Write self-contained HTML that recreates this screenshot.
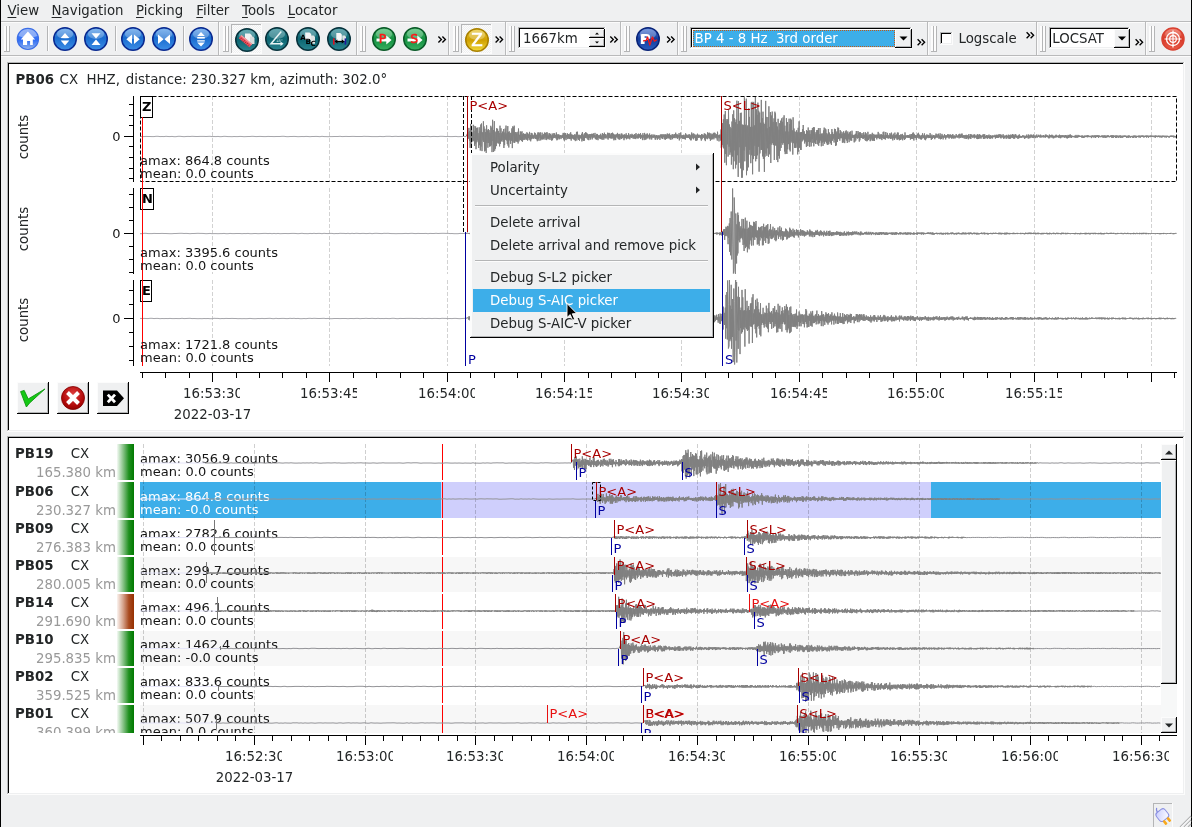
<!DOCTYPE html>
<html><head><meta charset="utf-8"><title>Picker</title>
<style>
html,body{margin:0;padding:0;}
body{width:1192px;height:827px;background:#eff0f1;position:relative;overflow:hidden;
font-family:"DejaVu Sans","Liberation Sans",sans-serif;font-size:13.333px;color:#232627;}
.t{position:absolute;white-space:pre;line-height:16px;height:16px;}
.r{position:absolute;}
svg{position:absolute;left:0;top:0;}
u{text-decoration:underline;text-underline-offset:1.5px;text-decoration-thickness:1px;}
#w{position:absolute;left:0;top:0;width:1192px;height:827px;will-change:transform;}
</style></head><body><div id="w">

<div class="r" style="left:0px;top:0px;width:1px;height:827px;background:#000;"></div>
<div class="r" style="left:1191px;top:0px;width:1px;height:827px;background:#000;"></div>
<div class="t" style="top:3px;left:7.50px;"><u>V</u>iew</div>
<div class="t" style="top:3px;left:51.60px;"><u>N</u>avigation</div>
<div class="t" style="top:3px;left:136.00px;"><u>P</u>icking</div>
<div class="t" style="top:3px;left:196.30px;"><u>F</u>ilter</div>
<div class="t" style="top:3px;left:242.00px;"><u>T</u>ools</div>
<div class="t" style="top:3px;left:287.70px;"><u>L</u>ocator</div>
<div class="r" style="left:1px;top:21px;width:1190px;height:1px;background:#b9babb;"></div>
<div class="r" style="left:1px;top:22px;width:1190px;height:1px;background:#fbfbfb;"></div>
<div class="r" style="left:1px;top:55px;width:1190px;height:1px;background:#b9babb;"></div>
<div class="r" style="left:1px;top:56px;width:1190px;height:1px;background:#fbfbfb;"></div>
<div class="r" style="left:218px;top:22px;width:1px;height:33px;background:#b9babb;"></div>
<div class="r" style="left:219px;top:23px;width:1px;height:32px;background:#fbfbfb;"></div>
<div class="r" style="left:356px;top:22px;width:1px;height:33px;background:#b9babb;"></div>
<div class="r" style="left:357px;top:23px;width:1px;height:32px;background:#fbfbfb;"></div>
<div class="r" style="left:448px;top:22px;width:1px;height:33px;background:#b9babb;"></div>
<div class="r" style="left:449px;top:23px;width:1px;height:32px;background:#fbfbfb;"></div>
<div class="r" style="left:505px;top:22px;width:1px;height:33px;background:#b9babb;"></div>
<div class="r" style="left:506px;top:23px;width:1px;height:32px;background:#fbfbfb;"></div>
<div class="r" style="left:620px;top:22px;width:1px;height:33px;background:#b9babb;"></div>
<div class="r" style="left:621px;top:23px;width:1px;height:32px;background:#fbfbfb;"></div>
<div class="r" style="left:677px;top:22px;width:1px;height:33px;background:#b9babb;"></div>
<div class="r" style="left:678px;top:23px;width:1px;height:32px;background:#fbfbfb;"></div>
<div class="r" style="left:927px;top:22px;width:1px;height:33px;background:#b9babb;"></div>
<div class="r" style="left:928px;top:23px;width:1px;height:32px;background:#fbfbfb;"></div>
<div class="r" style="left:1036px;top:22px;width:1px;height:33px;background:#b9babb;"></div>
<div class="r" style="left:1037px;top:23px;width:1px;height:32px;background:#fbfbfb;"></div>
<div class="r" style="left:1145px;top:22px;width:1px;height:33px;background:#b9babb;"></div>
<div class="r" style="left:1146px;top:23px;width:1px;height:32px;background:#fbfbfb;"></div>
<div class="r" style="left:4px;top:26px;width:2px;height:25px;background:#fcfcfc;"></div>
<div class="r" style="left:6px;top:26px;width:1px;height:26px;background:#b4b5b6;"></div>
<div class="r" style="left:4px;top:51px;width:3px;height:1px;background:#b4b5b6;"></div>
<div class="r" style="left:7px;top:26px;width:2px;height:25px;background:#fcfcfc;"></div>
<div class="r" style="left:9px;top:26px;width:1px;height:26px;background:#b4b5b6;"></div>
<div class="r" style="left:7px;top:51px;width:3px;height:1px;background:#b4b5b6;"></div>
<div class="r" style="left:223px;top:26px;width:2px;height:25px;background:#fcfcfc;"></div>
<div class="r" style="left:225px;top:26px;width:1px;height:26px;background:#b4b5b6;"></div>
<div class="r" style="left:223px;top:51px;width:3px;height:1px;background:#b4b5b6;"></div>
<div class="r" style="left:226px;top:26px;width:2px;height:25px;background:#fcfcfc;"></div>
<div class="r" style="left:228px;top:26px;width:1px;height:26px;background:#b4b5b6;"></div>
<div class="r" style="left:226px;top:51px;width:3px;height:1px;background:#b4b5b6;"></div>
<div class="r" style="left:360px;top:26px;width:2px;height:25px;background:#fcfcfc;"></div>
<div class="r" style="left:362px;top:26px;width:1px;height:26px;background:#b4b5b6;"></div>
<div class="r" style="left:360px;top:51px;width:3px;height:1px;background:#b4b5b6;"></div>
<div class="r" style="left:363px;top:26px;width:2px;height:25px;background:#fcfcfc;"></div>
<div class="r" style="left:365px;top:26px;width:1px;height:26px;background:#b4b5b6;"></div>
<div class="r" style="left:363px;top:51px;width:3px;height:1px;background:#b4b5b6;"></div>
<div class="r" style="left:453px;top:26px;width:2px;height:25px;background:#fcfcfc;"></div>
<div class="r" style="left:455px;top:26px;width:1px;height:26px;background:#b4b5b6;"></div>
<div class="r" style="left:453px;top:51px;width:3px;height:1px;background:#b4b5b6;"></div>
<div class="r" style="left:456px;top:26px;width:2px;height:25px;background:#fcfcfc;"></div>
<div class="r" style="left:458px;top:26px;width:1px;height:26px;background:#b4b5b6;"></div>
<div class="r" style="left:456px;top:51px;width:3px;height:1px;background:#b4b5b6;"></div>
<div class="r" style="left:509px;top:26px;width:2px;height:25px;background:#fcfcfc;"></div>
<div class="r" style="left:511px;top:26px;width:1px;height:26px;background:#b4b5b6;"></div>
<div class="r" style="left:509px;top:51px;width:3px;height:1px;background:#b4b5b6;"></div>
<div class="r" style="left:512px;top:26px;width:2px;height:25px;background:#fcfcfc;"></div>
<div class="r" style="left:514px;top:26px;width:1px;height:26px;background:#b4b5b6;"></div>
<div class="r" style="left:512px;top:51px;width:3px;height:1px;background:#b4b5b6;"></div>
<div class="r" style="left:624px;top:26px;width:2px;height:25px;background:#fcfcfc;"></div>
<div class="r" style="left:626px;top:26px;width:1px;height:26px;background:#b4b5b6;"></div>
<div class="r" style="left:624px;top:51px;width:3px;height:1px;background:#b4b5b6;"></div>
<div class="r" style="left:627px;top:26px;width:2px;height:25px;background:#fcfcfc;"></div>
<div class="r" style="left:629px;top:26px;width:1px;height:26px;background:#b4b5b6;"></div>
<div class="r" style="left:627px;top:51px;width:3px;height:1px;background:#b4b5b6;"></div>
<div class="r" style="left:681px;top:26px;width:2px;height:25px;background:#fcfcfc;"></div>
<div class="r" style="left:683px;top:26px;width:1px;height:26px;background:#b4b5b6;"></div>
<div class="r" style="left:681px;top:51px;width:3px;height:1px;background:#b4b5b6;"></div>
<div class="r" style="left:684px;top:26px;width:2px;height:25px;background:#fcfcfc;"></div>
<div class="r" style="left:686px;top:26px;width:1px;height:26px;background:#b4b5b6;"></div>
<div class="r" style="left:684px;top:51px;width:3px;height:1px;background:#b4b5b6;"></div>
<div class="r" style="left:931px;top:26px;width:2px;height:25px;background:#fcfcfc;"></div>
<div class="r" style="left:933px;top:26px;width:1px;height:26px;background:#b4b5b6;"></div>
<div class="r" style="left:931px;top:51px;width:3px;height:1px;background:#b4b5b6;"></div>
<div class="r" style="left:934px;top:26px;width:2px;height:25px;background:#fcfcfc;"></div>
<div class="r" style="left:936px;top:26px;width:1px;height:26px;background:#b4b5b6;"></div>
<div class="r" style="left:934px;top:51px;width:3px;height:1px;background:#b4b5b6;"></div>
<div class="r" style="left:1040px;top:26px;width:2px;height:25px;background:#fcfcfc;"></div>
<div class="r" style="left:1042px;top:26px;width:1px;height:26px;background:#b4b5b6;"></div>
<div class="r" style="left:1040px;top:51px;width:3px;height:1px;background:#b4b5b6;"></div>
<div class="r" style="left:1043px;top:26px;width:2px;height:25px;background:#fcfcfc;"></div>
<div class="r" style="left:1045px;top:26px;width:1px;height:26px;background:#b4b5b6;"></div>
<div class="r" style="left:1043px;top:51px;width:3px;height:1px;background:#b4b5b6;"></div>
<div class="r" style="left:1149px;top:26px;width:2px;height:25px;background:#fcfcfc;"></div>
<div class="r" style="left:1151px;top:26px;width:1px;height:26px;background:#b4b5b6;"></div>
<div class="r" style="left:1149px;top:51px;width:3px;height:1px;background:#b4b5b6;"></div>
<div class="r" style="left:1152px;top:26px;width:2px;height:25px;background:#fcfcfc;"></div>
<div class="r" style="left:1154px;top:26px;width:1px;height:26px;background:#b4b5b6;"></div>
<div class="r" style="left:1152px;top:51px;width:3px;height:1px;background:#b4b5b6;"></div>
<div class="r" style="left:47px;top:26px;width:1px;height:25px;background:#b4b5b6;"></div>
<div class="r" style="left:48px;top:26px;width:1px;height:25px;background:#fcfcfc;"></div>
<div class="r" style="left:115px;top:26px;width:1px;height:25px;background:#b4b5b6;"></div>
<div class="r" style="left:116px;top:26px;width:1px;height:25px;background:#fcfcfc;"></div>
<div class="r" style="left:183px;top:26px;width:1px;height:25px;background:#b4b5b6;"></div>
<div class="r" style="left:184px;top:26px;width:1px;height:25px;background:#fcfcfc;"></div>
<div class="r" style="left:518px;top:27px;width:88px;height:22px;background:#fff;"></div>
<div class="r" style="left:518px;top:27px;width:88px;height:1px;background:#b4b5b6;"></div>
<div class="r" style="left:518px;top:27px;width:1px;height:22px;background:#b4b5b6;"></div>
<div class="r" style="left:519px;top:28px;width:86px;height:1px;background:#000;"></div>
<div class="r" style="left:519px;top:28px;width:1px;height:20px;background:#000;"></div>
<div class="r" style="left:518px;top:48px;width:88px;height:1px;background:#fcfcfc;"></div>
<div class="r" style="left:605px;top:27px;width:1px;height:22px;background:#fcfcfc;"></div>
<div class="r" style="left:519px;top:47px;width:86px;height:1px;background:#eff0f1;"></div>
<div class="r" style="left:604px;top:28px;width:1px;height:20px;background:#eff0f1;"></div>
<div class="t" style="top:31px;left:523.00px;">1667km</div>
<div class="r" style="left:589px;top:29px;width:16px;height:9px;background:#eff0f1;"></div>
<div class="r" style="left:589px;top:29px;width:16px;height:1px;background:#fcfcfc;"></div>
<div class="r" style="left:589px;top:29px;width:1px;height:9px;background:#fcfcfc;"></div>
<div class="r" style="left:589px;top:37px;width:16px;height:1px;background:#000;"></div>
<div class="r" style="left:604px;top:29px;width:1px;height:9px;background:#000;"></div>
<div class="r" style="left:590px;top:36px;width:14px;height:1px;background:#b4b5b6;"></div>
<div class="r" style="left:603px;top:30px;width:1px;height:7px;background:#b4b5b6;"></div>
<div class="r" style="left:589px;top:38px;width:16px;height:9px;background:#eff0f1;"></div>
<div class="r" style="left:589px;top:38px;width:16px;height:1px;background:#fcfcfc;"></div>
<div class="r" style="left:589px;top:38px;width:1px;height:9px;background:#fcfcfc;"></div>
<div class="r" style="left:589px;top:46px;width:16px;height:1px;background:#000;"></div>
<div class="r" style="left:604px;top:38px;width:1px;height:9px;background:#000;"></div>
<div class="r" style="left:590px;top:45px;width:14px;height:1px;background:#b4b5b6;"></div>
<div class="r" style="left:603px;top:39px;width:1px;height:7px;background:#b4b5b6;"></div>
<div class="r" style="left:690px;top:27px;width:222px;height:22px;background:#fff;"></div>
<div class="r" style="left:690px;top:27px;width:222px;height:1px;background:#b4b5b6;"></div>
<div class="r" style="left:690px;top:27px;width:1px;height:22px;background:#b4b5b6;"></div>
<div class="r" style="left:691px;top:28px;width:220px;height:1px;background:#000;"></div>
<div class="r" style="left:691px;top:28px;width:1px;height:20px;background:#000;"></div>
<div class="r" style="left:690px;top:48px;width:222px;height:1px;background:#fcfcfc;"></div>
<div class="r" style="left:911px;top:27px;width:1px;height:22px;background:#fcfcfc;"></div>
<div class="r" style="left:691px;top:47px;width:220px;height:1px;background:#eff0f1;"></div>
<div class="r" style="left:910px;top:28px;width:1px;height:20px;background:#eff0f1;"></div>
<div class="r" style="left:693px;top:30px;width:202px;height:17px;background:#3daee9;outline:1px dotted #c05a18;outline-offset:-1px;"></div>
<div class="t" style="top:31px;left:694.50px;color:#fff;">BP 4 - 8 Hz  3rd order</div>
<div class="r" style="left:895px;top:29px;width:17px;height:19px;background:#eff0f1;"></div>
<div class="r" style="left:895px;top:29px;width:17px;height:1px;background:#fcfcfc;"></div>
<div class="r" style="left:895px;top:29px;width:1px;height:19px;background:#fcfcfc;"></div>
<div class="r" style="left:895px;top:47px;width:17px;height:1px;background:#000;"></div>
<div class="r" style="left:911px;top:29px;width:1px;height:19px;background:#000;"></div>
<div class="r" style="left:896px;top:46px;width:15px;height:1px;background:#b4b5b6;"></div>
<div class="r" style="left:910px;top:30px;width:1px;height:17px;background:#b4b5b6;"></div>
<div class="r" style="left:940px;top:32px;width:13px;height:13px;background:#fff;"></div>
<div class="r" style="left:940px;top:32px;width:13px;height:1px;background:#b4b5b6;"></div>
<div class="r" style="left:940px;top:32px;width:1px;height:13px;background:#b4b5b6;"></div>
<div class="r" style="left:941px;top:33px;width:11px;height:1px;background:#000;"></div>
<div class="r" style="left:941px;top:33px;width:1px;height:11px;background:#000;"></div>
<div class="r" style="left:940px;top:44px;width:13px;height:1px;background:#fcfcfc;"></div>
<div class="r" style="left:952px;top:32px;width:1px;height:13px;background:#fcfcfc;"></div>
<div class="r" style="left:941px;top:43px;width:11px;height:1px;background:#eff0f1;"></div>
<div class="r" style="left:951px;top:33px;width:1px;height:11px;background:#eff0f1;"></div>
<div class="t" style="top:31px;left:958.50px;">Logscale</div>
<div class="r" style="left:1049px;top:27px;width:81px;height:22px;background:#fff;"></div>
<div class="r" style="left:1049px;top:27px;width:81px;height:1px;background:#b4b5b6;"></div>
<div class="r" style="left:1049px;top:27px;width:1px;height:22px;background:#b4b5b6;"></div>
<div class="r" style="left:1050px;top:28px;width:79px;height:1px;background:#000;"></div>
<div class="r" style="left:1050px;top:28px;width:1px;height:20px;background:#000;"></div>
<div class="r" style="left:1049px;top:48px;width:81px;height:1px;background:#fcfcfc;"></div>
<div class="r" style="left:1129px;top:27px;width:1px;height:22px;background:#fcfcfc;"></div>
<div class="r" style="left:1050px;top:47px;width:79px;height:1px;background:#eff0f1;"></div>
<div class="r" style="left:1128px;top:28px;width:1px;height:20px;background:#eff0f1;"></div>
<div class="t" style="top:31px;left:1052.30px;">LOCSAT</div>
<div class="r" style="left:1114px;top:29px;width:16px;height:19px;background:#eff0f1;"></div>
<div class="r" style="left:1114px;top:29px;width:16px;height:1px;background:#fcfcfc;"></div>
<div class="r" style="left:1114px;top:29px;width:1px;height:19px;background:#fcfcfc;"></div>
<div class="r" style="left:1114px;top:47px;width:16px;height:1px;background:#000;"></div>
<div class="r" style="left:1129px;top:29px;width:1px;height:19px;background:#000;"></div>
<div class="r" style="left:1115px;top:46px;width:14px;height:1px;background:#b4b5b6;"></div>
<div class="r" style="left:1128px;top:30px;width:1px;height:17px;background:#b4b5b6;"></div>
<div class="r" style="left:7px;top:62px;width:1178px;height:370px;background:#fff;"></div>
<div class="r" style="left:7px;top:62px;width:1178px;height:1px;background:#b4b5b6;"></div>
<div class="r" style="left:7px;top:62px;width:1px;height:370px;background:#b4b5b6;"></div>
<div class="r" style="left:8px;top:63px;width:1176px;height:1px;background:#000;"></div>
<div class="r" style="left:8px;top:63px;width:1px;height:368px;background:#000;"></div>
<div class="r" style="left:7px;top:431px;width:1178px;height:1px;background:#fcfcfc;"></div>
<div class="r" style="left:1184px;top:62px;width:1px;height:370px;background:#fcfcfc;"></div>
<div class="r" style="left:8px;top:430px;width:1176px;height:1px;background:#eff0f1;"></div>
<div class="r" style="left:1183px;top:63px;width:1px;height:368px;background:#eff0f1;"></div>
<div class="r" style="left:7px;top:436px;width:1178px;height:359px;background:#fff;"></div>
<div class="r" style="left:7px;top:436px;width:1178px;height:1px;background:#b4b5b6;"></div>
<div class="r" style="left:7px;top:436px;width:1px;height:359px;background:#b4b5b6;"></div>
<div class="r" style="left:8px;top:437px;width:1176px;height:1px;background:#000;"></div>
<div class="r" style="left:8px;top:437px;width:1px;height:357px;background:#000;"></div>
<div class="r" style="left:7px;top:794px;width:1178px;height:1px;background:#fcfcfc;"></div>
<div class="r" style="left:1184px;top:436px;width:1px;height:359px;background:#fcfcfc;"></div>
<div class="r" style="left:8px;top:793px;width:1176px;height:1px;background:#eff0f1;"></div>
<div class="r" style="left:1183px;top:437px;width:1px;height:357px;background:#eff0f1;"></div>
<div class="t" style="top:72px;left:15.50px;"><b>PB06</b><span style="margin-left:5.6px">CX</span>  HHZ,<span style="margin-left:5.9px">distance:</span> 230.327 km, azimuth: 302.0°</div>
<div class="t" style="top:129px;right:1071.50px;color:#151515;font-size:13px;">0</div>
<div class="t" style="top:226px;right:1071.50px;color:#151515;font-size:13px;">0</div>
<div class="t" style="top:311px;right:1071.50px;color:#151515;font-size:13px;">0</div>
<div class="t" style="left:-6.5px;top:129px;width:60px;text-align:center;transform:rotate(-90deg);">counts</div>
<div class="t" style="left:-6.5px;top:221px;width:60px;text-align:center;transform:rotate(-90deg);">counts</div>
<div class="t" style="left:-6.5px;top:312px;width:60px;text-align:center;transform:rotate(-90deg);">counts</div>
<div class="t" style="top:386px;left:183.10px;width:57.00px;overflow:hidden;">16:53:30</div>
<div class="t" style="top:386px;left:300.10px;width:57.00px;overflow:hidden;">16:53:45</div>
<div class="t" style="top:386px;left:418.10px;width:57.00px;overflow:hidden;">16:54:00</div>
<div class="t" style="top:386px;left:535.10px;width:57.00px;overflow:hidden;">16:54:15</div>
<div class="t" style="top:386px;left:652.10px;width:57.00px;overflow:hidden;">16:54:30</div>
<div class="t" style="top:386px;left:770.10px;width:57.00px;overflow:hidden;">16:54:45</div>
<div class="t" style="top:386px;left:887.10px;width:57.00px;overflow:hidden;">16:55:00</div>
<div class="t" style="top:386px;left:1005.10px;width:57.00px;overflow:hidden;">16:55:15</div>
<div class="t" style="top:407px;left:173.75px;">2022-03-17</div>
<div class="r" style="left:17px;top:382px;width:32px;height:32px;background:#eff0f1;"></div>
<div class="r" style="left:17px;top:382px;width:32px;height:1px;background:#fcfcfc;"></div>
<div class="r" style="left:17px;top:382px;width:1px;height:32px;background:#fcfcfc;"></div>
<div class="r" style="left:17px;top:413px;width:32px;height:1px;background:#000;"></div>
<div class="r" style="left:48px;top:382px;width:1px;height:32px;background:#000;"></div>
<div class="r" style="left:18px;top:412px;width:30px;height:1px;background:#b4b5b6;"></div>
<div class="r" style="left:47px;top:383px;width:1px;height:30px;background:#b4b5b6;"></div>
<div class="r" style="left:57px;top:382px;width:32px;height:32px;background:#eff0f1;"></div>
<div class="r" style="left:57px;top:382px;width:32px;height:1px;background:#fcfcfc;"></div>
<div class="r" style="left:57px;top:382px;width:1px;height:32px;background:#fcfcfc;"></div>
<div class="r" style="left:57px;top:413px;width:32px;height:1px;background:#000;"></div>
<div class="r" style="left:88px;top:382px;width:1px;height:32px;background:#000;"></div>
<div class="r" style="left:58px;top:412px;width:30px;height:1px;background:#b4b5b6;"></div>
<div class="r" style="left:87px;top:383px;width:1px;height:30px;background:#b4b5b6;"></div>
<div class="r" style="left:97px;top:382px;width:32px;height:32px;background:#eff0f1;"></div>
<div class="r" style="left:97px;top:382px;width:32px;height:1px;background:#fcfcfc;"></div>
<div class="r" style="left:97px;top:382px;width:1px;height:32px;background:#fcfcfc;"></div>
<div class="r" style="left:97px;top:413px;width:32px;height:1px;background:#000;"></div>
<div class="r" style="left:128px;top:382px;width:1px;height:32px;background:#000;"></div>
<div class="r" style="left:98px;top:412px;width:30px;height:1px;background:#b4b5b6;"></div>
<div class="r" style="left:127px;top:383px;width:1px;height:30px;background:#b4b5b6;"></div>
<div class="r" style="left:9px;top:444px;width:1152px;height:289px;overflow:hidden;">
<div class="r" style="left:108px;top:0px;width:17px;height:36px;background:linear-gradient(to right,#f4faf4 0%,#8cc48c 35%,#1f8f1f 70%,#007a00 100%);"></div>
<div class="t" style="top:2px;left:6.00px;font-weight:bold;">PB19</div>
<div class="t" style="top:2px;left:61.70px;">CX</div>
<div class="t" style="top:21px;right:1045.00px;color:#999999;">165.380 km</div>
<div class="t" style="top:7px;left:131.10px;color:#151515;font-size:13px;">amax: 3056.9 counts</div>
<div class="t" style="top:20px;left:131.10px;color:#151515;font-size:13px;">mean: 0.0 counts</div>
<div class="r" style="left:131px;top:38px;width:1021px;height:36px;background:#3daee9;"></div>
<div class="r" style="left:432px;top:38px;width:490px;height:36px;background:#cfcffc;"></div>
<div class="r" style="left:108px;top:38px;width:17px;height:36px;background:linear-gradient(to right,#f4faf4 0%,#8cc48c 35%,#1f8f1f 70%,#007a00 100%);"></div>
<div class="t" style="top:40px;left:6.00px;font-weight:bold;">PB06</div>
<div class="t" style="top:40px;left:61.70px;">CX</div>
<div class="t" style="top:59px;right:1045.00px;color:#999999;">230.327 km</div>
<div class="t" style="top:45px;left:131.10px;color:#fff;font-size:13px;">amax: 864.8 counts</div>
<div class="t" style="top:58px;left:131.10px;color:#fff;font-size:13px;">mean: -0.0 counts</div>
<div class="r" style="left:108px;top:76px;width:17px;height:35px;background:linear-gradient(to right,#f4faf4 0%,#8cc48c 35%,#1f8f1f 70%,#007a00 100%);"></div>
<div class="t" style="top:77px;left:6.00px;font-weight:bold;">PB09</div>
<div class="t" style="top:77px;left:61.70px;">CX</div>
<div class="t" style="top:96px;right:1045.00px;color:#999999;">276.383 km</div>
<div class="t" style="top:82px;left:131.10px;color:#151515;font-size:13px;">amax: 2782.6 counts</div>
<div class="t" style="top:95px;left:131.10px;color:#151515;font-size:13px;">mean: 0.0 counts</div>
<div class="r" style="left:131px;top:113px;width:1021px;height:35px;background:#f7f7f7;"></div>
<div class="r" style="left:108px;top:113px;width:17px;height:35px;background:linear-gradient(to right,#f4faf4 0%,#8cc48c 35%,#1f8f1f 70%,#007a00 100%);"></div>
<div class="t" style="top:114px;left:6.00px;font-weight:bold;">PB05</div>
<div class="t" style="top:114px;left:61.70px;">CX</div>
<div class="t" style="top:133px;right:1045.00px;color:#999999;">280.005 km</div>
<div class="t" style="top:119px;left:131.10px;color:#151515;font-size:13px;">amax: 299.7 counts</div>
<div class="t" style="top:132px;left:131.10px;color:#151515;font-size:13px;">mean: 0.0 counts</div>
<div class="r" style="left:108px;top:150px;width:17px;height:35px;background:linear-gradient(to right,#fbf3ef 0%,#d6a58f 35%,#a84a20 70%,#963000 100%);"></div>
<div class="t" style="top:151px;left:6.00px;font-weight:bold;">PB14</div>
<div class="t" style="top:151px;left:61.70px;">CX</div>
<div class="t" style="top:170px;right:1045.00px;color:#999999;">291.690 km</div>
<div class="t" style="top:156px;left:131.10px;color:#151515;font-size:13px;">amax: 496.1 counts</div>
<div class="t" style="top:169px;left:131.10px;color:#151515;font-size:13px;">mean: 0.0 counts</div>
<div class="r" style="left:131px;top:187px;width:1021px;height:35px;background:#f7f7f7;"></div>
<div class="r" style="left:108px;top:187px;width:17px;height:35px;background:linear-gradient(to right,#f4faf4 0%,#8cc48c 35%,#1f8f1f 70%,#007a00 100%);"></div>
<div class="t" style="top:188px;left:6.00px;font-weight:bold;">PB10</div>
<div class="t" style="top:188px;left:61.70px;">CX</div>
<div class="t" style="top:207px;right:1045.00px;color:#999999;">295.835 km</div>
<div class="t" style="top:193px;left:131.10px;color:#151515;font-size:13px;">amax: 1462.4 counts</div>
<div class="t" style="top:206px;left:131.10px;color:#151515;font-size:13px;">mean: -0.0 counts</div>
<div class="r" style="left:108px;top:224px;width:17px;height:35px;background:linear-gradient(to right,#f4faf4 0%,#8cc48c 35%,#1f8f1f 70%,#007a00 100%);"></div>
<div class="t" style="top:225px;left:6.00px;font-weight:bold;">PB02</div>
<div class="t" style="top:225px;left:61.70px;">CX</div>
<div class="t" style="top:244px;right:1045.00px;color:#999999;">359.525 km</div>
<div class="t" style="top:230px;left:131.10px;color:#151515;font-size:13px;">amax: 833.6 counts</div>
<div class="t" style="top:243px;left:131.10px;color:#151515;font-size:13px;">mean: 0.0 counts</div>
<div class="r" style="left:131px;top:261px;width:1021px;height:35px;background:#f7f7f7;"></div>
<div class="r" style="left:108px;top:261px;width:17px;height:35px;background:linear-gradient(to right,#f4faf4 0%,#8cc48c 35%,#1f8f1f 70%,#007a00 100%);"></div>
<div class="t" style="top:262px;left:6.00px;font-weight:bold;">PB01</div>
<div class="t" style="top:262px;left:61.70px;">CX</div>
<div class="t" style="top:281px;right:1045.00px;color:#999999;">360.399 km</div>
<div class="t" style="top:267px;left:131.10px;color:#151515;font-size:13px;">amax: 507.9 counts</div>
<div class="t" style="top:280px;left:131.10px;color:#151515;font-size:13px;">mean: 0.0 counts</div>
</div>
<div class="r" style="left:1161px;top:444px;width:16px;height:289px;background:#f7f8f8;"></div>
<div class="r" style="left:1161px;top:444px;width:16px;height:16px;background:#eff0f1;"></div>
<div class="r" style="left:1161px;top:444px;width:16px;height:1px;background:#fcfcfc;"></div>
<div class="r" style="left:1161px;top:444px;width:1px;height:16px;background:#fcfcfc;"></div>
<div class="r" style="left:1161px;top:459px;width:16px;height:1px;background:#000;"></div>
<div class="r" style="left:1176px;top:444px;width:1px;height:16px;background:#000;"></div>
<div class="r" style="left:1162px;top:458px;width:14px;height:1px;background:#b4b5b6;"></div>
<div class="r" style="left:1175px;top:445px;width:1px;height:14px;background:#b4b5b6;"></div>
<div class="r" style="left:1161px;top:460px;width:16px;height:224px;background:#eff0f1;"></div>
<div class="r" style="left:1161px;top:460px;width:16px;height:1px;background:#fcfcfc;"></div>
<div class="r" style="left:1161px;top:460px;width:1px;height:224px;background:#fcfcfc;"></div>
<div class="r" style="left:1161px;top:683px;width:16px;height:1px;background:#000;"></div>
<div class="r" style="left:1176px;top:460px;width:1px;height:224px;background:#000;"></div>
<div class="r" style="left:1162px;top:682px;width:14px;height:1px;background:#b4b5b6;"></div>
<div class="r" style="left:1175px;top:461px;width:1px;height:222px;background:#b4b5b6;"></div>
<div class="r" style="left:1161px;top:717px;width:16px;height:16px;background:#eff0f1;"></div>
<div class="r" style="left:1161px;top:717px;width:16px;height:1px;background:#fcfcfc;"></div>
<div class="r" style="left:1161px;top:717px;width:1px;height:16px;background:#fcfcfc;"></div>
<div class="r" style="left:1161px;top:732px;width:16px;height:1px;background:#000;"></div>
<div class="r" style="left:1176px;top:717px;width:1px;height:16px;background:#000;"></div>
<div class="r" style="left:1162px;top:731px;width:14px;height:1px;background:#b4b5b6;"></div>
<div class="r" style="left:1175px;top:718px;width:1px;height:14px;background:#b4b5b6;"></div>
<div class="r" style="left:1153px;top:803px;width:20px;height:24px;background:#eff0f1;"></div>
<div class="r" style="left:1153px;top:803px;width:20px;height:1px;background:#b4b5b6;"></div>
<div class="r" style="left:1153px;top:803px;width:1px;height:24px;background:#b4b5b6;"></div>
<div class="r" style="left:1172px;top:803px;width:1px;height:24px;background:#fcfcfc;"></div>
<svg width="1192" height="827" viewBox="0 0 1192 827">
<defs>
<linearGradient id="gHome" x1="0" y1="0" x2="0" y2="1"><stop offset="0" stop-color="#5a8af0"/><stop offset="0.55" stop-color="#2f6df5"/><stop offset="0.75" stop-color="#5a8cf0"/><stop offset="1" stop-color="#9ab8ee"/></linearGradient>
<linearGradient id="gBlue" x1="0" y1="0" x2="0" y2="1"><stop offset="0" stop-color="#5aa0ea"/><stop offset="0.45" stop-color="#1a6ccf"/><stop offset="1" stop-color="#3d8ee6"/></linearGradient>
<linearGradient id="gTeal" x1="0" y1="0" x2="0" y2="1"><stop offset="0" stop-color="#2f8d98"/><stop offset="0.5" stop-color="#0b6470"/><stop offset="1" stop-color="#2a8590"/></linearGradient>
<linearGradient id="gGreen" x1="0" y1="0" x2="0" y2="1"><stop offset="0" stop-color="#4cc070"/><stop offset="0.5" stop-color="#129040"/><stop offset="1" stop-color="#38b060"/></linearGradient>
<linearGradient id="gYel" x1="0" y1="0" x2="0" y2="1"><stop offset="0" stop-color="#e8c838"/><stop offset="0.5" stop-color="#d0a000"/><stop offset="1" stop-color="#f0d838"/></linearGradient>
<linearGradient id="gNavy" x1="0" y1="0" x2="0" y2="1"><stop offset="0" stop-color="#4a78d8"/><stop offset="0.5" stop-color="#123c9c"/><stop offset="1" stop-color="#2a5cc0"/></linearGradient>
<linearGradient id="gRed" x1="0" y1="0" x2="0" y2="1"><stop offset="0" stop-color="#f0705c"/><stop offset="0.5" stop-color="#d83a28"/><stop offset="1" stop-color="#e85a48"/></linearGradient>
<pattern id="dith" width="2" height="2" patternUnits="userSpaceOnUse"><rect width="2" height="2" fill="#eff0f1"/><rect width="1" height="1" fill="#fcfcfc"/><rect x="1" y="1" width="1" height="1" fill="#fcfcfc"/></pattern>
</defs>
<circle cx="27.9" cy="38.9" r="10.6" fill="url(#gHome)" stroke="#3b6ee6" stroke-width="1.2"/>
<path d="M18.5 36 A9.8 9.8 0 0 1 37.3 36 Q28 40 18.5 36 Z" fill="#fff" fill-opacity="0.38"/>
<path d="M27.9 31.6 L20.8 39.4 H23 V44.9 H27.1 V40.9 H30.1 V44.9 H32.8 V39.4 H35.1 Z" fill="#fff"/>
<circle cx="65" cy="39" r="11.25" fill="url(#gBlue)" stroke="#0a2a90" stroke-width="1.5"/>
<ellipse cx="65" cy="33.9375" rx="8.1" ry="5.0625" fill="#fff" fill-opacity="0.28"/>
<path d="M65 33 L69.3 38 H60.7 Z M65 45.5 L69.3 40.5 H60.7 Z" fill="#fff"/>
<circle cx="96" cy="39" r="11.25" fill="url(#gBlue)" stroke="#0a2a90" stroke-width="1.5"/>
<ellipse cx="96" cy="33.9375" rx="8.1" ry="5.0625" fill="#fff" fill-opacity="0.28"/>
<path d="M91.5 33.2 H100.5 L96 38.6 Z M96 39.6 L100.5 45 H91.5 Z" fill="#fff"/>
<circle cx="133" cy="39" r="11.25" fill="url(#gBlue)" stroke="#0a2a90" stroke-width="1.5"/>
<ellipse cx="133" cy="33.9375" rx="8.1" ry="5.0625" fill="#fff" fill-opacity="0.28"/>
<path d="M126.3 39.3 L132 34.5 V44 Z M139.7 39.3 L134 34.5 V44 Z" fill="#fff"/>
<circle cx="164" cy="39" r="11.25" fill="url(#gBlue)" stroke="#0a2a90" stroke-width="1.5"/>
<ellipse cx="164" cy="33.9375" rx="8.1" ry="5.0625" fill="#fff" fill-opacity="0.28"/>
<path d="M158 34.5 L163.6 39.3 L158 44 Z M170 34.5 L164.4 39.3 L170 44 Z" fill="#fff"/>
<circle cx="201" cy="39" r="11.25" fill="url(#gBlue)" stroke="#0a2a90" stroke-width="1.5"/>
<ellipse cx="201" cy="33.9375" rx="8.1" ry="5.0625" fill="#fff" fill-opacity="0.28"/>
<path d="M201 32 L204.8 36 H197.2 Z M201 46.5 L204.8 42.5 H197.2 Z M197.2 37 H204.8 V38.4 H197.2 Z M197.2 40.2 H204.8 V41.6 H197.2 Z" fill="#fff"/>
<rect x="231" y="24" width="31" height="30" fill="url(#dith)"/>
<rect x="231" y="24" width="31" height="1" fill="#b4b5b6"/><rect x="231" y="24" width="1" height="30" fill="#b4b5b6"/><rect x="261" y="24" width="1" height="30" fill="#fcfcfc"/><rect x="231" y="53" width="31" height="1" fill="#fcfcfc"/>
<circle cx="247" cy="40" r="11.25" fill="url(#gTeal)" stroke="#08323c" stroke-width="1.5"/>
<ellipse cx="247" cy="34.9375" rx="8.1" ry="5.0625" fill="#fff" fill-opacity="0.28"/>
<path d="M245 33.5 H250 L252 35.5 V43 H245 Z" fill="#f2f2f2"/><path d="M250 36.5 H253 L254.5 38 V44 H250 Z" fill="#d8dcdc"/>
<g transform="rotate(40 245.5 41)"><rect x="238.5" y="39" width="14" height="4.2" fill="#e8505c"/><rect x="238.5" y="39" width="14" height="1.2" fill="#f4a0a4"/><path d="M240.5 41 V43 M242.5 41.6 V43 M244.5 41 V43 M246.5 41.6 V43 M248.5 41 V43 M250.5 41.6 V43" stroke="#801018" stroke-width="0.6"/></g>
<circle cx="277" cy="39" r="11.25" fill="url(#gTeal)" stroke="#08323c" stroke-width="1.5"/>
<ellipse cx="277" cy="33.9375" rx="8.1" ry="5.0625" fill="#fff" fill-opacity="0.28"/>
<path d="M281.3 31.5 L271 43.8 H281" fill="none" stroke="#e8f4f4" stroke-width="1.5" stroke-linejoin="miter"/><path d="M280.5 41.6 L283.6 43.8 L280.5 46 Z" fill="#e8f4f4"/>
<text x="276.5" y="42" font-size="3.5" font-family="DejaVu Sans, Liberation Sans, sans-serif" fill="#d0e8e8">45°</text>
<circle cx="308" cy="39" r="11.25" fill="url(#gTeal)" stroke="#08323c" stroke-width="1.5"/>
<ellipse cx="308" cy="33.9375" rx="8.1" ry="5.0625" fill="#fff" fill-opacity="0.28"/>
<path d="M305.2 32.4 H309.5 L311.2 34 V40 H305.2 Z" fill="#f4f4f4"/><path d="M310.7 35.6 H313.6 L315 37 V43.8 H310.7 Z" fill="#dfe3e3"/>
<text x="300.3" y="39.8" font-size="7.2" font-weight="bold" font-family="DejaVu Sans, Liberation Sans, sans-serif" fill="#000">A</text><text x="305.6" y="43.6" font-size="7.2" font-weight="bold" font-family="DejaVu Sans, Liberation Sans, sans-serif" fill="#000">B</text><text x="310.6" y="46.4" font-size="7.2" font-weight="bold" font-family="DejaVu Sans, Liberation Sans, sans-serif" fill="#000">C</text>
<circle cx="339" cy="39" r="11.25" fill="url(#gTeal)" stroke="#08323c" stroke-width="1.5"/>
<ellipse cx="339" cy="33.9375" rx="8.1" ry="5.0625" fill="#fff" fill-opacity="0.28"/>
<path d="M336.3 32.9 H340.3 L341.8 34.4 V41 H336.3 Z" fill="#f6f6f6"/><path d="M342.3 35.6 H344.8 L346 36.8 V41 H342.3 Z" fill="#dfe3e3"/>
<rect x="333" y="38.4" width="1.6" height="6.2" fill="#e01020"/><rect x="344.6" y="38.4" width="1.6" height="6.2" fill="#2018a0"/><path d="M336 41.5 H343.5" stroke="#000" stroke-width="1.3"/><path d="M334.6 41.5 L337.4 39.6 V43.4 Z M344.6 41.5 L341.8 39.6 V43.4 Z" fill="#000"/>
<circle cx="384" cy="39" r="11.25" fill="url(#gGreen)" stroke="#0a5a28" stroke-width="1.5"/>
<ellipse cx="384" cy="33.9375" rx="8.1" ry="5.0625" fill="#fff" fill-opacity="0.28"/>
<path d="M376.5 38.4 H386.3 V35.6 L391.6 40 L386.3 44.4 V41.6 H376.5 Z" fill="#fff"/>
<text x="378.8" y="42.9" font-size="12.3" font-weight="normal" font-family="DejaVu Sans, Liberation Sans, sans-serif" fill="#ff1818" stroke="#ff1818" stroke-width="0.55">P</text>
<circle cx="415" cy="39" r="11.25" fill="url(#gGreen)" stroke="#0a5a28" stroke-width="1.5"/>
<ellipse cx="415" cy="33.9375" rx="8.1" ry="5.0625" fill="#fff" fill-opacity="0.28"/>
<path d="M407.5 38.4 H417.3 V35.6 L422.6 40 L417.3 44.4 V41.6 H407.5 Z" fill="#fff"/>
<text x="410.3" y="42.9" font-size="12.3" font-weight="normal" font-family="DejaVu Sans, Liberation Sans, sans-serif" fill="#ff1818" stroke="#ff1818" stroke-width="0.55">S</text>
<rect x="461" y="24" width="31" height="30" fill="url(#dith)"/>
<rect x="461" y="24" width="31" height="1" fill="#b4b5b6"/><rect x="461" y="24" width="1" height="30" fill="#b4b5b6"/><rect x="491" y="24" width="1" height="30" fill="#fcfcfc"/><rect x="461" y="53" width="31" height="1" fill="#fcfcfc"/>
<circle cx="477" cy="40" r="11.25" fill="url(#gYel)" stroke="#a88000" stroke-width="1.5"/>
<ellipse cx="477" cy="34.9375" rx="8.1" ry="5.0625" fill="#fff" fill-opacity="0.28"/>
<text x="477" y="46.4" text-anchor="middle" font-size="16.8" font-weight="normal" font-family="DejaVu Sans, Liberation Sans, sans-serif" fill="#fff" stroke="#fff" stroke-width="0.6">Z</text>
<circle cx="648" cy="39" r="11.25" fill="url(#gNavy)" stroke="#0a2478" stroke-width="1.5"/>
<ellipse cx="648" cy="33.9375" rx="8.1" ry="5.0625" fill="#fff" fill-opacity="0.28"/>
<text x="640.8" y="44" font-size="13.5" font-weight="bold" font-family="DejaVu Sans, Liberation Sans, sans-serif" fill="#fff">P</text>
<path d="M642 41.2 L646.2 40.4 L647.6 37 L649.8 45 L652.4 37 L654.4 41.2 L656.8 39.8" fill="none" stroke="#f01818" stroke-width="1.3" stroke-linejoin="round"/><path d="M640.8 34.2 V44 H643 V34.2 Z" fill="#fff"/>
<circle cx="1173" cy="39" r="11" fill="url(#gRed)" stroke="#d84030" stroke-width="1.5"/>
<ellipse cx="1173" cy="34.05" rx="7.92" ry="4.95" fill="#fff" fill-opacity="0.18"/>
<circle cx="1173" cy="39" r="6.5" fill="none" stroke="#fff" stroke-width="1.3"/><circle cx="1173" cy="39" r="3.3" fill="none" stroke="#fff" stroke-width="1.2"/><path d="M1173 30.5 V47.5 M1164.5 39 H1181.5" stroke="#fff" stroke-width="1.2"/>
<path d="M438.40000000000003 36.4 L441.40000000000003 39.4 L438.40000000000003 42.4" fill="none" stroke="#000" stroke-width="1.35"/>
<path d="M442.40000000000003 36.4 L445.40000000000003 39.4 L442.40000000000003 42.4" fill="none" stroke="#000" stroke-width="1.35"/>
<path d="M495.6 36.4 L498.6 39.4 L495.6 42.4" fill="none" stroke="#000" stroke-width="1.35"/>
<path d="M499.6 36.4 L502.6 39.4 L499.6 42.4" fill="none" stroke="#000" stroke-width="1.35"/>
<path d="M610.3000000000001 36.4 L613.3000000000001 39.4 L610.3000000000001 42.4" fill="none" stroke="#000" stroke-width="1.35"/>
<path d="M614.3000000000001 36.4 L617.3000000000001 39.4 L614.3000000000001 42.4" fill="none" stroke="#000" stroke-width="1.35"/>
<path d="M667.1 36.4 L670.1 39.4 L667.1 42.4" fill="none" stroke="#000" stroke-width="1.35"/>
<path d="M671.1 36.4 L674.1 39.4 L671.1 42.4" fill="none" stroke="#000" stroke-width="1.35"/>
<path d="M917.6 39.3 L920.6 42.3 L917.6 45.3" fill="none" stroke="#000" stroke-width="1.35"/>
<path d="M921.6 39.3 L924.6 42.3 L921.6 45.3" fill="none" stroke="#000" stroke-width="1.35"/>
<path d="M1026.6 32.3 L1029.6 35.3 L1026.6 38.3" fill="none" stroke="#000" stroke-width="1.35"/>
<path d="M1030.6 32.3 L1033.6 35.3 L1030.6 38.3" fill="none" stroke="#000" stroke-width="1.35"/>
<path d="M1135.6 39.3 L1138.6 42.3 L1135.6 45.3" fill="none" stroke="#000" stroke-width="1.35"/>
<path d="M1139.6 39.3 L1142.6 42.3 L1139.6 45.3" fill="none" stroke="#000" stroke-width="1.35"/>
<path d="M595 34.5 L597 32.5 L599 34.5 Z M595 41.5 L597 43.5 L599 41.5 Z" fill="#000"/>
<path d="M899.5 36.5 H907.5 L903.5 40.5 Z" fill="#000"/>
<path d="M1118 36.5 H1126 L1122 40.5 Z" fill="#000"/>
<path d="M212.5 96 V182" stroke="#d2d2d2" stroke-width="1" stroke-dasharray="4 2" fill="none"/>
<path d="M212.5 188 V274" stroke="#d2d2d2" stroke-width="1" stroke-dasharray="4 2" fill="none"/>
<path d="M212.5 280 V366" stroke="#d2d2d2" stroke-width="1" stroke-dasharray="4 2" fill="none"/>
<path d="M329.5 96 V182" stroke="#d2d2d2" stroke-width="1" stroke-dasharray="4 2" fill="none"/>
<path d="M329.5 188 V274" stroke="#d2d2d2" stroke-width="1" stroke-dasharray="4 2" fill="none"/>
<path d="M329.5 280 V366" stroke="#d2d2d2" stroke-width="1" stroke-dasharray="4 2" fill="none"/>
<path d="M447.5 96 V182" stroke="#d2d2d2" stroke-width="1" stroke-dasharray="4 2" fill="none"/>
<path d="M447.5 188 V274" stroke="#d2d2d2" stroke-width="1" stroke-dasharray="4 2" fill="none"/>
<path d="M447.5 280 V366" stroke="#d2d2d2" stroke-width="1" stroke-dasharray="4 2" fill="none"/>
<path d="M564.5 96 V182" stroke="#d2d2d2" stroke-width="1" stroke-dasharray="4 2" fill="none"/>
<path d="M564.5 188 V274" stroke="#d2d2d2" stroke-width="1" stroke-dasharray="4 2" fill="none"/>
<path d="M564.5 280 V366" stroke="#d2d2d2" stroke-width="1" stroke-dasharray="4 2" fill="none"/>
<path d="M681.5 96 V182" stroke="#d2d2d2" stroke-width="1" stroke-dasharray="4 2" fill="none"/>
<path d="M681.5 188 V274" stroke="#d2d2d2" stroke-width="1" stroke-dasharray="4 2" fill="none"/>
<path d="M681.5 280 V366" stroke="#d2d2d2" stroke-width="1" stroke-dasharray="4 2" fill="none"/>
<path d="M799.5 96 V182" stroke="#d2d2d2" stroke-width="1" stroke-dasharray="4 2" fill="none"/>
<path d="M799.5 188 V274" stroke="#d2d2d2" stroke-width="1" stroke-dasharray="4 2" fill="none"/>
<path d="M799.5 280 V366" stroke="#d2d2d2" stroke-width="1" stroke-dasharray="4 2" fill="none"/>
<path d="M916.5 96 V182" stroke="#d2d2d2" stroke-width="1" stroke-dasharray="4 2" fill="none"/>
<path d="M916.5 188 V274" stroke="#d2d2d2" stroke-width="1" stroke-dasharray="4 2" fill="none"/>
<path d="M916.5 280 V366" stroke="#d2d2d2" stroke-width="1" stroke-dasharray="4 2" fill="none"/>
<path d="M1034.5 96 V182" stroke="#d2d2d2" stroke-width="1" stroke-dasharray="4 2" fill="none"/>
<path d="M1034.5 188 V274" stroke="#d2d2d2" stroke-width="1" stroke-dasharray="4 2" fill="none"/>
<path d="M1034.5 280 V366" stroke="#d2d2d2" stroke-width="1" stroke-dasharray="4 2" fill="none"/>
<path d="M1151.5 96 V182" stroke="#d2d2d2" stroke-width="1" stroke-dasharray="4 2" fill="none"/>
<path d="M1151.5 188 V274" stroke="#d2d2d2" stroke-width="1" stroke-dasharray="4 2" fill="none"/>
<path d="M1151.5 280 V366" stroke="#d2d2d2" stroke-width="1" stroke-dasharray="4 2" fill="none"/>
<rect x="133" y="96" width="1" height="86" fill="#000"/>
<rect x="129" y="104" width="4" height="1" fill="#000"/>
<rect x="129" y="115" width="4" height="1" fill="#000"/>
<rect x="129" y="125" width="4" height="1" fill="#000"/>
<rect x="129" y="146" width="4" height="1" fill="#000"/>
<rect x="129" y="157" width="4" height="1" fill="#000"/>
<rect x="129" y="168" width="4" height="1" fill="#000"/>
<rect x="129" y="178" width="4" height="1" fill="#000"/>
<rect x="124" y="136" width="9" height="1" fill="#000"/>
<rect x="133" y="188" width="1" height="86" fill="#000"/>
<rect x="129" y="194" width="4" height="1" fill="#000"/>
<rect x="129" y="207" width="4" height="1" fill="#000"/>
<rect x="129" y="220" width="4" height="1" fill="#000"/>
<rect x="129" y="246" width="4" height="1" fill="#000"/>
<rect x="129" y="259" width="4" height="1" fill="#000"/>
<rect x="129" y="272" width="4" height="1" fill="#000"/>
<rect x="124" y="233" width="9" height="1" fill="#000"/>
<rect x="133" y="280" width="1" height="86" fill="#000"/>
<rect x="129" y="290" width="4" height="1" fill="#000"/>
<rect x="129" y="304" width="4" height="1" fill="#000"/>
<rect x="129" y="332" width="4" height="1" fill="#000"/>
<rect x="129" y="346" width="4" height="1" fill="#000"/>
<rect x="129" y="360" width="4" height="1" fill="#000"/>
<rect x="124" y="318" width="9" height="1" fill="#000"/>
<rect x="140" y="372" width="1037" height="1" fill="#000"/>
<rect x="142" y="372" width="1" height="6" fill="#000"/>
<rect x="165" y="372" width="1" height="6" fill="#000"/>
<rect x="189" y="372" width="1" height="6" fill="#000"/>
<rect x="212" y="372" width="1" height="10" fill="#000"/>
<rect x="236" y="372" width="1" height="6" fill="#000"/>
<rect x="259" y="372" width="1" height="6" fill="#000"/>
<rect x="282" y="372" width="1" height="6" fill="#000"/>
<rect x="306" y="372" width="1" height="6" fill="#000"/>
<rect x="329" y="372" width="1" height="10" fill="#000"/>
<rect x="353" y="372" width="1" height="6" fill="#000"/>
<rect x="376" y="372" width="1" height="6" fill="#000"/>
<rect x="400" y="372" width="1" height="6" fill="#000"/>
<rect x="423" y="372" width="1" height="6" fill="#000"/>
<rect x="447" y="372" width="1" height="10" fill="#000"/>
<rect x="470" y="372" width="1" height="6" fill="#000"/>
<rect x="494" y="372" width="1" height="6" fill="#000"/>
<rect x="517" y="372" width="1" height="6" fill="#000"/>
<rect x="541" y="372" width="1" height="6" fill="#000"/>
<rect x="564" y="372" width="1" height="10" fill="#000"/>
<rect x="588" y="372" width="1" height="6" fill="#000"/>
<rect x="611" y="372" width="1" height="6" fill="#000"/>
<rect x="635" y="372" width="1" height="6" fill="#000"/>
<rect x="658" y="372" width="1" height="6" fill="#000"/>
<rect x="681" y="372" width="1" height="10" fill="#000"/>
<rect x="705" y="372" width="1" height="6" fill="#000"/>
<rect x="728" y="372" width="1" height="6" fill="#000"/>
<rect x="752" y="372" width="1" height="6" fill="#000"/>
<rect x="775" y="372" width="1" height="6" fill="#000"/>
<rect x="799" y="372" width="1" height="10" fill="#000"/>
<rect x="822" y="372" width="1" height="6" fill="#000"/>
<rect x="846" y="372" width="1" height="6" fill="#000"/>
<rect x="869" y="372" width="1" height="6" fill="#000"/>
<rect x="893" y="372" width="1" height="6" fill="#000"/>
<rect x="916" y="372" width="1" height="10" fill="#000"/>
<rect x="940" y="372" width="1" height="6" fill="#000"/>
<rect x="963" y="372" width="1" height="6" fill="#000"/>
<rect x="987" y="372" width="1" height="6" fill="#000"/>
<rect x="1010" y="372" width="1" height="6" fill="#000"/>
<rect x="1034" y="372" width="1" height="10" fill="#000"/>
<rect x="1057" y="372" width="1" height="6" fill="#000"/>
<rect x="1081" y="372" width="1" height="6" fill="#000"/>
<rect x="1104" y="372" width="1" height="6" fill="#000"/>
<rect x="1127" y="372" width="1" height="6" fill="#000"/>
<rect x="1151" y="372" width="1" height="10" fill="#000"/>
<rect x="1174" y="372" width="1" height="6" fill="#000"/>
<path d="M140,136.4 142,136.6 144,136.6 146,136.4 148,136.5 150,136.5 152,136.6 154,136.6 156,136.3 158,136.3 160,136.6 162,136.5 164,136.6 166,136.3 168,136.5 170,136.6 172,136.4 174,136.7 176,136.7 178,136.3 180,136.3 182,136.5 184,136.7 186,136.5 188,136.4 190,136.5 192,136.3 194,136.4 196,136.5 198,136.5 200,136.4 202,136.4 204,136.4 206,136.5 208,136.4 210,136.3 212,136.6 214,136.5 216,136.6 218,136.4 220,136.7 222,136.6 224,136.3 226,136.4 228,136.6 230,136.6 232,136.7 234,136.5 236,136.6 238,136.6 240,136.4 242,136.5 244,136.7 246,136.6 248,136.5 250,136.5 252,136.3 254,136.4 256,136.6 258,136.5 260,136.4 262,136.5 264,136.6 266,136.6 268,136.4 270,136.5 272,136.5 274,136.6 276,136.5 278,136.5 280,136.5 282,136.3 284,136.3 286,136.6 288,136.7 290,136.5 292,136.5 294,136.4 296,136.5 298,136.7 300,136.6 302,136.5 304,136.6 306,136.4 308,136.5 310,136.7 312,136.5 314,136.5 316,136.4 318,136.5 320,136.7 322,136.3 324,136.6 326,136.6 328,136.7 330,136.6 332,136.6 334,136.5 336,136.5 338,136.5 340,136.3 342,136.6 344,136.5 346,136.4 348,136.5 350,136.5 352,136.4 354,136.4 356,136.5 358,136.5 360,136.5 362,136.5 364,136.3 366,136.4 368,136.4 370,136.5 372,136.6 374,136.6 376,136.6 378,136.6 380,136.4 382,136.6 384,136.6 386,136.3 388,136.3 390,136.3 392,136.6 394,136.4 396,136.3 398,136.5 400,136.4 402,136.3 404,136.4 406,136.5 408,136.4 410,136.4 412,136.6 414,136.5 416,136.4 418,136.5 420,136.3 422,136.5 424,136.5 426,136.4 428,136.3 430,136.7 432,136.5 434,136.4 436,136.5 438,136.6 440,136.3 442,136.3 444,136.4 446,136.6 448,136.4 450,136.6 452,136.6 454,136.5 456,136.4 458,136.7 460,136.6 462,136.5 464,136.4 466,136.6" fill="none" stroke="#a6a6ab" stroke-width="1.0" stroke-linejoin="round"/>
<path d="M466,136.6 468.1,132 468.5,138.6 468.9,127.9 469.5,140.7 469.8,130.9 470.1,147.9 470.7,123.9 471.2,147.9 471.5,129.4 472,140.7 472.2,132.4 472.8,141.5 473.3,124.8 473.6,140.7 474,125.9 474.6,145.8 475,130.9 475.4,143.6 475.6,126.4 476,149.2 476.7,127.9 476.9,142.2 477.5,127.7 477.8,140.4 478.1,133.2 478.7,148 479.2,127.3 479.4,145.2 480,131.2 480.3,150.5 480.8,124.5 481,146.6 481.5,123.5 482,151.1 482.4,132.3 483,140.5 483.4,121.3 483.7,141.9 484,126.4 484.5,151.3 484.9,128.8 485.5,150.6 485.7,132.2 486.2,152.9 486.6,125.3 487,142.9 487.6,130.4 487.9,147.7 488.3,129 488.8,143 489.1,130.1 489.6,146.6 489.9,132.7 490.3,146.2 490.8,125.8 491.4,145.3 491.8,127.5 492,152.1 492.6,119.8 492.9,140.9 493.5,130.2 493.6,151.9 494.3,121.2 494.7,150.7 495,131.5 495.5,148.7 496,132.4 496.3,146.1 496.7,128.2 497,142.4 497.6,128.8 497.9,143.3 498.5,130.9 498.8,143.5 499.2,133.1 499.6,146.4 500,125.7 500.4,143.9 501,128.3 501.4,141.4 501.8,133.2 502.2,140.3 502.6,131.6 503.1,141.9 503.5,129 503.9,148 504.2,132.5 504.6,145.1 505.1,128.6 505.6,139.7 506,125.6 506.5,140.4 506.9,133.4 507.3,144 507.8,126.1 508,145.6 508.4,132 508.8,147.5 509.2,131.3 509.8,140.4 510.1,133 510.6,143.8 510.9,132.8 511.4,140.7 511.9,128.4 512.3,148.1 512.8,126.3 513,141.7 513.4,127.1 514.1,143 514.2,125.7 514.7,142.9 515.2,132.1 515.6,141.4 516.1,132.1 516.5,141.5 516.7,133.6 517.4,142 517.9,131.8 518.1,143.5 518.5,128.5 519,141.4 519.4,134.8 519.9,139.8 520.3,131.4 520.7,140.1 521.1,132 521.5,140.8 522,131.3 522.4,141.8 522.8,134.2 523.1,140.1 523.6,133.3 524.1,139.8 524.5,134 525,139.7 525.3,133.8 525.6,138.4 526,134.5 526.5,139.6 526.9,132.3 527.5,140.5 527.7,133.1 528.3,138.1 528.5,134.4 529.2,140.2 529.5,131.9 530,138.9 530.3,135 530.7,141.3 531.2,132.9 531.5,139.2 531.9,133 532.5,138.1 532.7,134.6 533.1,139 533.7,135.3 534,138.1 534.6,132.6 535,138.5 535.2,133.1 535.7,139 536.3,134.9 536.5,139.3 537.1,134.6 537.3,141.2 537.8,132.5 538.4,139.3 538.8,132.4 539,140.8 539.4,133.4 540,137.8 540.3,132.3 540.7,140.4 541.1,135.3 541.7,139.4 542.1,132.6 542.6,139.4 542.8,135 543.3,139.3 543.8,133.9 544.1,138.4 544.6,132.5 545.1,139.7 545.4,133.1 546,137.8 546.1,132.7 546.7,140.1 547,132.1 547.4,138.6 548.1,133.4 548.2,138.9 548.7,135.4 549.2,139.7 549.7,133.1 550,138.1 550.4,134 551,139.9 551.4,135.4 551.8,140.7 552.2,133.5 552.5,140 553,134.7 553.4,138.2 553.9,133.1 554.2,138 554.7,133.4 555.2,137.7 555.4,134.9 556.1,138.6 556.4,132.5 556.9,140.3 557.2,134.3 557.7,139.7 558.2,134.8 558.4,138.3 558.8,134.3 559.3,139.3 559.7,135.3 560,137.4 560.4,135.1 561,139.1 561.5,135.5 561.9,137.7 562.3,134.8 562.8,138 563.2,132.9 563.5,139.3 564,133.2 564.3,140.7 564.8,133.3 565.1,138.7 565.6,133.1 566,140.1 566.5,134.9 566.8,137.6 567.4,133.3 567.7,139.1 568.2,134 568.6,138.5 569,134.8 569.5,139 569.9,133.6 570.2,139.1 570.7,132.3 571.2,140.6 571.5,134.5 572,138.5 572.3,134.7 572.7,138.4 573.1,135.1 573.5,139.3 574,134.9 574.4,139.8 574.9,134.1 575.3,141.1 575.8,135.2 576,137.6 576.5,131.9 576.8,140.5 577.4,131.7 577.9,138.5 578.2,135.2 578.5,139.8 579,134.7 579.5,140.7 579.8,135.3 580.3,138.3 580.8,135.2 581.3,138.7 581.5,133.8 581.9,141.4 582.4,132.1 582.8,140.2 583.4,135.4 583.8,141 584.1,133.8 584.4,140.5 584.9,133.1 585.3,138 585.8,132 586.1,137.8 586.5,133.2 587,138.5 587.3,133.6 587.9,139.7 588.3,134.7 588.8,140.2 589.1,134.1 589.5,137.7 590,134.1 590.3,139.6 590.9,134 591.1,137.5 591.5,133.8 592.2,139.4 592.5,133.9 592.8,138.1 593.4,133.4 593.8,137.5 594.1,135 594.5,137.4 595,132.9 595.3,139.1 596,135 596.3,139.7 596.8,133.9 597.1,139.3 597.5,134.1 598,140.2 598.4,135.5 598.8,137.8 599.1,135.1 599.6,138.5 600.1,134.8 600.6,138.8 600.7,133.8 601.2,139.2 601.8,135.4 602.2,139.8 602.4,133 603,138.2 603.3,134.1 603.8,139.7 604.4,132.7 604.7,138.2 605.2,134.5 605.6,138.3 605.8,134.1 606.4,137.4 606.6,135.6 607.1,138.6 607.7,132.7 608.1,139.6 608.4,133.3 608.7,138.1 609.2,132.9 609.7,138.1 610,133.5 610.5,138.2 611,134.6 611.2,138.6 611.7,133 612.2,138.5 612.5,132.7 613.2,138.2 613.3,133.7 613.9,140.3 614.3,134.6 614.8,139.5 615.2,134.6 615.7,140.1 615.9,134.8 616.3,137.4 616.9,133.9 617.4,137.6 617.5,132.9 618.2,139 618.5,134.4 619.1,139.6 619.3,133.9 619.9,139.5 620.2,135.4 620.7,138.3 621.1,133.7 621.5,139 621.8,133.5 622.3,138.2 622.9,134.6 623.3,137.3 623.5,135.1 624,140.2 624.4,134.4 624.7,138.2 625.1,134.8 625.5,138.1 626.2,133.3 626.4,139.3 626.9,135.2 627.2,138.4 627.7,135.2 628.1,138.6 628.6,133.2 628.9,138.2 629.5,135.6 629.8,139.3 630.2,134.2 630.6,137.4 631.2,135.1 631.6,138 631.9,133.8 632.5,137.4 632.7,134.7 633.2,138.8 633.5,135.2 634.1,137.9 634.4,134.1 634.8,138.9 635.2,134.5 635.8,139.1 636,133.1 636.4,137.8 637.1,135.4 637.4,138.4 637.9,134.1 638.4,138.4 638.6,133.7 639.2,137.4 639.5,134.4 640,137.7 640.5,133.1 640.6,139 641.3,134.8 641.6,137.6 642,135.4 642.5,140.1 642.9,133.2 643.2,137.6 643.6,135.2 644.2,140.1 644.6,132.9 644.9,138.9 645.5,134.7 645.8,139.8 646.2,134.3 646.8,138.7 647.2,133.4 647.6,138.2 647.8,134.4 648.5,137.3 648.8,135 649.2,138.6 649.6,133.5 649.9,139.4 650.3,135.1 650.7,137.5 651.4,134.6 651.7,139.5 652.1,135.6 652.7,137.7 653,134.4 653.5,137.5 653.7,135.6 654.1,137.7 654.7,134.7 655.2,139.6 655.4,135.6 655.8,139.5 656.4,135 656.8,137.9 657.2,135.7 657.5,139.6 657.9,135.4 658.3,138.6 658.7,135.4 659.4,137.9 659.8,135.4 659.9,139.9 660.4,134.5 661,137.4 661.3,134.6 661.7,138.3 662.1,134.2 662.5,138.9 663,134.8 663.3,137.3 664,134.1 664.2,139.1 664.8,134.8 665.2,139.9 665.6,134.4 666,139 666.4,134.7 666.8,139 667.3,133.5 667.7,137.9 668.2,134.7 668.5,138.3 668.9,133.9 669.4,138.3 669.6,133.6 670.1,139.3 670.6,135 670.9,139.8 671.6,135.5 671.9,137.5 672.2,134.1 672.6,139.2 673.1,134.5 673.5,137.9 674.1,134.6 674.5,137.7 674.8,134.1 675.1,138.2 675.7,132.7 676.1,137.4 676.5,134.5 676.9,138.2 677.3,134.4 677.7,138.9 678,135.1 678.6,137.5 679.1,133.1 679.3,140.4 679.7,135.2 680.1,138.6 680.5,132.6 681.2,137.5 681.4,135.5 681.8,138.1 682.3,135.2 682.7,138.8 683.3,135.2 683.6,138.8 683.9,134.7 684.5,139.1 685,135.3 685.4,139.5 685.6,133.3 686.1,137.9 686.6,134.6 686.9,137.6 687.5,135.4 687.7,137.8 688.2,134.6 688.6,137.9 689.2,134.4 689.6,139.1 689.8,134.5 690.5,140.2 690.6,135.4 691.2,140.3 691.7,132.5 692,138.6 692.3,134.3 692.9,137.8 693.2,133.4 693.6,139.3 694,133.8 694.6,137.8 695,134.5 695.5,140.5 695.7,135.4 696.3,140.8 696.8,134.7 697.2,140.3 697.5,133.7 698,137.7 698.3,134.9 698.7,137.9 699.1,134.7 699.7,137.5 699.9,135.5 700.5,138.4 700.8,135 701.3,140.6 701.6,134 702.1,139.2 702.5,134.6 703,137.9 703.2,135.1 703.7,137.6 704.3,133.4 704.5,139.5 705.1,133.8 705.3,141.1 705.7,134.1 706.3,138.4 706.7,135.4 707.3,139.2 707.6,132.3 707.8,138.7 708.5,133.4 708.8,137.8 709.2,132.7 709.8,138.8 709.9,133.6 710.4,140.8 710.9,133.4 711.4,139.5 711.7,134.5 712.3,139.3 712.7,134.2 713.1,138.1 713.3,132.9 713.9,139.3 714.3,132.7 714.7,137.6 715,132.9 715.6,137.6 716,134.2 716.2,138.3 716.7,134.5 717.3,140.6 717.5,131.7 718,137.6 718.5,135.3 719,141.4 719.5,134.8 719.9,138 720.2,134.6 720.6,140.5 721.1,129.4 721.3,147.8 722,132.6 722.3,145.1 722.7,123.1 723.2,147.3 723.4,119.4 723.8,148.4 724.2,114.5 724.8,162.7 725.3,111 725.5,153.9 726.1,119.1 726.4,165.2 727,120.9 727.3,144.4 727.7,119.2 728.1,156.6 728.5,109.6 729.1,146.7 729.5,124.5 729.9,154.8 730.1,126.9 730.6,152.3 731.1,128.2 731.4,164.6 732,121.5 732.3,156.6 732.8,114.3 733.3,169.2 733.7,110.4 734,161.3 734.4,118.2 734.8,150.4 735.4,122.3 735.6,168.4 736.1,119.5 736.5,164.5 736.9,100.7 737.4,155.2 737.8,124.1 738.2,176.9 738.5,101.2 739,162.8 739.5,120.9 739.9,147.2 740.4,113 740.6,168.4 741.2,112.7 741.7,177.7 742.1,124.4 742.3,177.6 742.7,125 743.3,170.2 743.6,124.9 744.1,150.6 744.4,97.3 744.8,161.3 745.5,124.8 745.8,146.7 746.3,98.7 746.5,175.2 747.1,126.6 747.5,170.5 747.8,125.4 748.4,167.3 748.8,108.3 749.1,154.6 749.5,116.9 749.8,149.9 750.4,126.9 750.8,163.2 751.3,102.5 751.7,155.3 752.1,101.8 752.6,174.3 752.9,126.8 753.4,159.1 753.7,101.9 754.1,156 754.5,125.5 754.9,145.7 755.4,96.8 755.7,161.3 756.4,109.3 756.7,159 757.1,114.8 757.4,155.3 757.9,102.6 758.5,146.6 758.7,110.8 759.1,171.7 759.7,112.5 759.9,153.4 760.5,122.8 761,149.9 761.3,99.9 761.6,149.8 762.2,118.2 762.6,156.4 763,111.7 763.4,158.9 763.7,122.7 764.4,171.9 764.8,124 765,156.7 765.7,100.9 766,153.5 766.2,116.9 766.9,155.8 767.2,128.3 767.7,148.3 767.9,117.1 768.5,156.9 768.9,106.3 769.3,154.3 769.6,126.9 770.1,143.8 770.4,112.1 770.8,163 771.4,115.5 771.8,144.7 772.2,111.6 772.7,143.1 773.1,121.9 773.6,145.1 774,118.4 774.3,160 774.9,111.7 775.3,145.3 775.5,113.4 776.1,145.7 776.3,122.2 776.9,159.9 777.4,126.6 777.8,162.1 778.1,118.8 778.5,155.9 779.1,129.7 779.4,158.5 779.7,123.2 780.1,150.9 780.7,120.7 781.1,147.9 781.5,118.5 781.8,143 782.4,121.8 782.8,144.7 783,117.5 783.6,142.9 784.1,115.3 784.5,151.4 784.9,125.7 785.2,154.1 785.7,131.5 786.2,153.2 786.4,118.2 786.9,154 787.5,122.1 787.7,149.3 788.1,131.6 788.6,144.1 789.1,118.7 789.6,149.6 790,124 790.2,151.4 790.7,118.7 791.1,141.2 791.4,119.8 791.9,142.6 792.4,130.4 792.8,154.6 793.1,117.3 793.7,143.2 794,128.5 794.6,147.8 794.8,131.3 795.4,147.9 795.9,132 796.1,147.7 796.6,130.3 797,143.2 797.3,132.3 797.7,154.4 798.2,127.8 798.6,151.6 799.1,121.3 799.4,147.7 799.9,132.8 800.5,149.7 800.6,132.3 801.1,150 801.5,132.1 802.1,141.4 802.5,129 802.9,140.4 803.2,125 803.7,139.4 804.3,131.3 804.7,143.5 805,133.8 805.4,141.5 805.7,134 806.4,146.9 806.6,130.2 807,142.5 807.4,131.1 807.8,146.1 808.2,127.5 808.7,141.9 809.3,130.3 809.7,146.8 810,134 810.4,142.2 811,130.2 811.2,146.4 811.7,130.4 812.2,139.2 812.4,128.1 812.8,142.8 813.4,127.2 813.8,146.3 814.3,127.3 814.7,142.7 815,133.7 815.6,143.9 816,132.1 816.2,140.2 816.8,130.1 817.1,144 817.7,130 818,144.6 818.4,128.2 818.7,145.8 819.2,134.2 819.7,142.7 820,128 820.6,140.5 821,134.3 821.3,146.3 821.6,133.6 822.1,142.7 822.8,133.4 823,145.9 823.5,130.5 823.8,141.7 824.2,127.6 824.6,143.7 825.2,128.5 825.5,141.5 825.9,129.4 826.5,143.2 826.8,133.1 827.3,144.8 827.7,134.4 828,144.7 828.4,129.1 828.8,144.1 829.3,132.5 829.8,141.6 830.1,134.3 830.5,143.3 831.1,134.1 831.4,145 831.9,129.1 832.4,140.7 832.6,132.2 833.3,138.6 833.6,134.2 834.1,142.5 834.5,128.8 834.9,140 835.4,129.1 835.6,146 836,133 836.4,145.3 836.8,131.5 837.4,141.9 837.9,127.4 838.2,139 838.6,128 838.9,139.1 839.5,133.6 839.8,140.7 840.2,130.1 840.7,138.3 841.1,131.5 841.6,138.1 842,134 842.4,142.7 842.9,132.4 843.3,142.5 843.5,131.4 844.1,139.8 844.5,133.4 844.7,143.1 845.3,131.4 845.7,139.2 846.2,130.4 846.7,140.6 847.1,132.7 847.3,142.9 847.8,131.5 848.1,139.4 848.8,133.7 849.1,142.2 849.5,132.4 849.9,139.3 850.4,131.4 850.7,140.5 851,134.3 851.7,140.7 852,130.7 852.3,137.9 852.7,134.9 853.3,137.9 853.8,134.9 854.2,142.4 854.6,134.8 854.9,141.7 855.4,133.8 855.8,140.5 856.3,131 856.7,137.8 857.2,135 857.4,138.6 858,131 858.5,138 858.8,132.8 859.3,141.6 859.5,132.4 859.9,140.3 860.3,132.2 860.8,138 861.4,134.7 861.7,138 862,133 862.5,138.5 863.1,134.8 863.5,138.7 863.7,132.3 864.3,137.9 864.6,134.8 865.1,140.1 865.4,132.3 865.8,140.9 866.2,133.4 866.9,141.3 867,135.3 867.6,140.6 867.9,131.8 868.4,140 869,135 869.2,138.5 869.7,134.5 870.2,141.2 870.4,134.4 870.8,140.7 871.3,134.5 871.9,139.5 872.3,132.8 872.6,140.7 872.9,135.3 873.4,140.6 873.8,133.9 874.4,141 874.7,134.9 875.1,137.6 875.6,134.8 875.9,137.8 876.3,134.7 876.8,139.4 877.3,134.7 877.6,137.9 878.2,131.9 878.6,137.9 879.1,133.6 879.3,139.1 879.8,135.2 880,137.8 880.6,134.5 880.9,139.1 881.3,134.2 881.9,140.1 882.4,135 882.6,137.9 883.2,131.9 883.5,138.6 883.9,131.7 884.3,139 884.9,135.3 885.3,139.6 885.8,132 886.1,137.6 886.6,135 886.8,138.1 887.4,132.9 887.6,138.2 888.1,134.9 888.4,138.5 889,135.5 889.5,137.8 889.9,133.1 890.3,139 890.5,134.5 891.1,138.5 891.4,132.6 891.9,138.6 892.3,135.3 892.8,140.4 893.3,133.7 893.5,138.2 894.1,135.2 894.5,139.8 894.9,132.6 895.2,137.9 895.8,135.2 896.1,138.5 896.6,134.5 897.1,139.8 897.4,132.6 897.7,139.3 898.2,132.6 898.5,139.2 899.2,135 899.4,140.3 900,135.5 900.4,140 900.7,134.4 901.1,138.8 901.7,134.5 902.1,139.7 902.5,133.9 902.7,140.3 903.2,135.4 903.7,138.4 904.1,135.4 904.6,140 905,132.4 905.4,138.8 905.9,135.4 906.1,137.5 906.6,135.5 907.1,137.7 907.6,135 908,137.8 908.3,135.1 908.6,137.7 909.2,135.2 909.6,137.8 910.1,134.1 910.4,139.6 910.8,135.5 911.2,138.9 911.7,134 912,138.9 912.5,133.4 912.9,138.9 913.2,132.4 913.9,140.5 914.2,133.8 914.5,137.7 914.9,135 915.5,138 915.8,135.2 916.3,139.8 916.8,135.3 917,138 917.5,133.7 918,137.5 918.5,132.8 918.8,138.5 919.4,134.7 919.8,138.4 920.1,135.6 920.4,139.1 921,135.6 921.2,139.7 921.8,135.2 922,138.6 922.5,133.3 923.1,138.2 923.3,135.4 923.9,138 924.4,133.4 924.6,139.5 925,135.3 925.6,140.2 926,135.6 926.3,138.6 926.9,134.4 927.3,137.5 927.8,135 928.2,138.1 928.3,134.9 929,138 929.4,135.6 929.6,137.9 930.1,133.1 930.7,137.9 930.9,135.7 931.3,139.9 931.9,134.6 932.2,139 932.8,135.7 933.2,137.7 933.5,135 933.9,137.7 934.2,135.3 934.8,139.2 935.3,135.5 935.7,137.9 936,133.6 936.3,137.5 937,134.1 937.4,137.4 937.6,135.6 938,137.7 938.4,133.7 939,138.9 939.4,135.6 939.7,138.1 940.1,133.3 940.6,139.3 941.2,135.7 941.4,139 942,133.9 942.4,137.5 942.7,135.5 943.1,139.4 943.7,135.7 944.1,137.5 944.5,134 945,137.8 945.4,135.7 945.7,139.4 946,135 946.5,137.6 947,135.3 947.5,137.2 947.7,134.2 948.1,137.7 948.7,134.5 949.1,138.6 949.3,134.8 949.9,137.6 950.3,134.4 950.7,137.5 951.3,134.9 951.7,138.7 952.1,135.7 952.3,137.9 952.8,134 953.2,138.6 953.7,135.5 954,138.2 954.5,135.6 955,138.5 955.4,135.8 955.8,137.7 956.2,134 956.5,137.2 957.1,135.8 957.6,137.6 957.8,135.4 958.4,137.3 958.7,134.4 959.1,138.4 959.7,133.8 960.1,137.6 960.5,134.8 960.7,137.9 961.3,133.8 961.6,137.4 962.1,133.6 962.6,137.8 963,135.6 963.3,137.5 963.6,135.3 964.1,138.4 964.6,135.3 965.2,138.9 965.4,135.3 965.9,137.2 966.2,134.8 966.7,139 967,135.4 967.6,137.8 967.9,135.2 968.3,139.3 968.9,134 969.1,138.3 969.8,135.8 970.2,138.4 970.6,134.2 970.8,139 971.4,134.5 971.7,137.1 972,135.8 972.7,137.7 972.9,134.8 973.5,137.3 973.9,134.6 974.3,138.3 974.7,134.4 975,137.2 975.7,135.5 975.9,137.8 976.5,135.6 976.9,139 977.3,134.3 977.6,139.1 977.9,134.4 978.3,139 978.8,134.9 979.1,138.7 979.7,134.2 980,138.1 980.5,135.1 981,138.7 981.2,135.7 981.8,137.4 982.2,135.2 982.8,137.1 983.2,134.1 983.4,139 983.9,134.9 984.2,138.8 984.7,134.2 985.1,138.5 985.6,135.9 986,137.8 986.4,135.1 986.9,138.3 987.3,135.5 987.6,138.7 988,135.3 988.5,137.9 989,134.6 989.4,138.3 989.8,135.8 990.1,139 990.5,135.3 991.1,138.1 991.4,135.7 992,138.3 992.4,135.5 992.6,138.4 993.2,135.4 993.4,137.1 994.1,135.9 994.6,137.1 994.9,134.8 995.4,138.6 995.6,135.5 996,137.8 996.4,134.8 996.8,138 997.2,134.8 997.7,137.9 998.2,134.9 998.5,137.7 999.1,134 999.3,137.2 1000,134.8 1000.4,137.8 1000.8,134.3 1001,138.4 1001.4,135.3 1001.9,137.3 1002.3,135.6 1002.9,137.6 1003.1,134.2 1003.8,138.9 1004.1,135.9 1004.4,138.1 1005,135.4 1005.3,137.4 1005.9,135.7 1006.2,138.8 1006.5,134.9 1007.1,138.3 1007.5,135.9 1007.7,137.1 1008.3,134.7 1008.7,138.6 1009.1,134.9 1009.5,138.7 1010,135.2 1010.5,138.6 1010.9,134.5 1011.4,137.2 1011.6,135.4 1012,138.1 1012.5,134.1 1012.8,138 1013.4,134.8 1013.8,138.8 1014.1,134.5 1014.7,138.6 1014.9,135.9 1015.4,137.2 1015.7,134.1 1016.3,137.8 1016.7,135.5 1017.2,137.4 1017.6,136 1017.8,138.8 1018.3,135.2 1018.7,138.5 1019.3,134.4 1019.6,137.8 1019.9,135.8 1020.4,137.6 1020.8,135.9 1021.2,137.9 1021.7,136 1022.1,137.6 1022.7,135.3 1022.9,137 1023.4,135.6 1023.9,137.6 1024.1,135.7 1024.5,138.8 1025.1,135.8 1025.5,138.2 1025.9,135.9 1026.3,137.8 1026.8,134.6 1027.1,137.4 1027.5,135.9 1028.2,138.5 1028.4,134.5 1028.8,138.3 1029.1,135.4 1029.8,138.2 1030.1,134.8 1030.5,137.5 1031,134.5 1031.4,137.1 1031.8,134.9 1032.1,137.9 1032.5,135.6 1033,138 1033.4,134.5 1033.9,138.1 1034.3,135.8 1034.8,137.3 1035,135.4 1035.6,138.1 1036,135.7 1036.4,137.2 1036.8,134.5 1037.2,137.7 1037.7,135.9 1038.2,137 1038.5,134.8 1038.8,137 1039.3,135.5 1039.9,137.5 1040.3,134.7 1040.7,137.4 1040.9,134.9 1041.4,137.3 1042,135.9 1042.2,137.3 1042.7,135.6 1043.2,137 1043.4,135.1 1043.9,137.6 1044.5,135.8 1044.9,137.2 1045.3,134.8 1045.6,137.6 1046,134.5 1046.5,137 1046.9,135.4 1047.3,137 1047.7,135.4 1048.2,137.8 1048.6,135.9 1048.9,138.4 1049.4,134.6 1049.8,138.1 1050.3,135.3 1050.7,137 1051.2,135.2 1051.5,137.4 1051.9,134.7 1052.4,137.5 1052.8,135.2 1053.2,138.3 1053.8,135.9 1053.9,138.2 1054.4,136 1054.9,137.5 1055.3,135.3 1055.6,137.4 1056.1,134.7 1056.5,137.3 1056.9,135.3 1057.3,137.1 1057.7,135.9 1058.4,137.6 1058.6,135.5 1059,137.5 1059.5,134.7 1060,138.1 1060.4,135.4 1060.7,138.2 1061.2,135.4 1061.7,137.4 1062.1,135 1062.4,137 1062.9,135.5 1063.1,137.4 1063.7,135.4 1064,137 1064.5,135.5 1064.8,138 1065.5,135 1065.7,137.1 1066.4,135.4 1066.5,138.2 1067,135.9 1067.5,138.4 1068,134.9 1068.3,138 1068.9,135.1 1069.1,137.3 1069.6,134.8 1070.1,137.8 1070.4,134.5 1070.7,136.9 1071.1,135.2 1071.5,138 1072,135.7 1072.5,137.1 1073,135.9 1073.5,137.2 1074,136 1074.5,137.4 1075,135.5 1075.5,137.7 1076,134.9 1076.5,137.6 1077,135.7 1077.5,137.6 1078,134.9 1078.5,137.2 1079,135.3 1079.5,137 1080,135.6 1080.5,137 1081,136 1081.5,137.5 1082,135.2 1082.5,137.7 1083,135.8 1083.5,137.9 1084,135.9 1084.5,137.5 1085,135.3 1085.5,137.1 1086,135.9 1086.5,137.1 1087,135.1 1087.5,137.3 1088,135 1088.5,137.1 1089,135.8 1089.5,137.1 1090,135.8 1090.5,137.1 1091,135.8 1091.5,138.1 1092,135.4 1092.5,137.1 1093,135.3 1093.5,137.4 1094,135.8 1094.5,137.3 1095,135 1095.5,138 1096,135.6 1096.5,137.1 1097,135 1097.5,137 1098,135.3 1098.5,137.8 1099,135.2 1099.5,137.1 1100,135.9 1100.5,137.2 1101,135.9 1101.5,137.1 1102,135.2 1102.5,137.4 1103,135.6 1103.5,137.6 1104,135.3 1104.5,137.5 1105,135.3 1105.5,137.8 1106,135.7 1106.5,137.5 1107,135.5 1107.5,137.2 1108,135 1108.5,137.1 1109,135.8 1109.5,137.3 1110,136 1110.5,137 1111,135.1 1111.5,137.6 1112,135.2 1112.5,137.7 1113,135.1 1113.5,137.7 1114,135.4 1114.5,137 1115,135.9 1115.5,137.9 1116,135.1 1116.5,137.8 1117,135.7 1117.5,137.3 1118,135.4 1118.5,137.7 1119,136 1119.5,137.3 1120,135.1 1120.5,137.8 1121,135.7 1121.5,137.6 1122,135.8 1122.5,137.7 1123,135.6 1123.5,137.2 1124,135.6 1124.5,136.9 1125,135.3 1125.5,137 1126,135.8 1126.5,137.8 1127,135.8 1127.5,137.5 1128,135.7 1128.5,137.7 1129,135.2 1129.5,137.3 1130,136.1 1130.5,137.7 1131,135.9 1131.5,137.1 1132,135.9 1132.5,137.7 1133,135.8 1133.5,137.8 1134,135.4 1134.5,137.3 1135,135.6 1135.5,137.6 1136,135.6 1136.5,137.7 1137,136 1137.5,137 1138,135.7 1138.5,137.3 1139,135.5 1139.5,137.4 1140,135.6 1140.5,137.6 1141,135.7 1141.5,136.9 1142,135.3 1142.5,136.9 1143,135.5 1143.5,137.4 1144,135.7 1144.5,137.3 1145,135.9 1145.5,136.9 1146,135.3 1146.5,137.5 1147,135.6 1147.5,137.1 1148,135.4 1148.5,137.7 1149,136.1 1149.5,136.9 1150,135.4 1150.5,137.1 1151,135.5 1151.5,137.2 1152,135.7 1152.5,136.9 1153,135.6 1153.5,137.1 1154,135.8 1154.5,137.3 1155,135.5 1155.5,137.6 1156,135.3 1156.5,137 1157,136 1157.5,137.2 1158,135.5 1158.5,137 1159,135.6 1159.5,137.3 1160,135.7 1160.5,137.3 1161,135.7 1161.5,137.5 1162,135.8 1162.5,137.3 1163,135.4 1163.5,136.8 1164,135.9 1164.5,137.3 1165,135.6 1165.5,137.3 1166,135.9 1166.5,137.5 1167,135.6 1167.5,136.9 1168,135.9 1168.5,137.4 1169,136.1 1169.5,137.5 1170,135.8 1170.5,136.9 1171,135.4 1171.5,137 1172,135.7 1172.5,137 1173,135.5 1173.5,137.4 1174,135.7 1174.5,137.3 1175,136 1175.5,137.4 1176,135.8" fill="none" stroke="#808080" stroke-width="1.0" stroke-linejoin="round"/>
<path d="M140,233.7 142,233.7 144,233.3 146,233.3 148,233.6 150,233.6 152,233.6 154,233.4 156,233.5 158,233.5 160,233.5 162,233.4 164,233.5 166,233.5 168,233.6 170,233.7 172,233.7 174,233.5 176,233.5 178,233.4 180,233.3 182,233.3 184,233.5 186,233.4 188,233.5 190,233.7 192,233.5 194,233.5 196,233.4 198,233.3 200,233.4 202,233.4 204,233.5 206,233.7 208,233.6 210,233.4 212,233.7 214,233.6 216,233.6 218,233.7 220,233.6 222,233.6 224,233.4 226,233.7 228,233.7 230,233.4 232,233.6 234,233.6 236,233.5 238,233.5 240,233.5 242,233.7 244,233.5 246,233.6 248,233.4 250,233.7 252,233.7 254,233.5 256,233.5 258,233.7 260,233.6 262,233.5 264,233.4 266,233.4 268,233.6 270,233.4 272,233.7 274,233.4 276,233.7 278,233.4 280,233.7 282,233.6 284,233.5 286,233.5 288,233.6 290,233.5 292,233.4 294,233.4 296,233.5 298,233.7 300,233.5 302,233.3 304,233.6 306,233.6 308,233.7 310,233.4 312,233.6 314,233.3 316,233.6 318,233.4 320,233.4 322,233.7 324,233.3 326,233.5 328,233.6 330,233.4 332,233.4 334,233.7 336,233.5 338,233.6 340,233.3 342,233.4 344,233.4 346,233.6 348,233.3 350,233.7 352,233.3 354,233.6 356,233.3 358,233.4 360,233.6 362,233.4 364,233.4 366,233.6 368,233.5 370,233.3 372,233.7 374,233.4 376,233.3 378,233.4 380,233.5 382,233.6 384,233.3 386,233.4 388,233.3 390,233.5 392,233.6 394,233.6 396,233.7 398,233.6 400,233.6 402,233.6 404,233.5 406,233.4 408,233.6 410,233.4 412,233.3 414,233.5 416,233.6 418,233.4 420,233.5 422,233.5 424,233.5 426,233.4 428,233.7 430,233.4 432,233.5 434,233.5 436,233.3 438,233.5 440,233.4 442,233.3 444,233.3 446,233.4 448,233.3 450,233.6 452,233.5 454,233.7 456,233.7 458,233.7 460,233.4 462,233.5 464,233.4 466,233.5" fill="none" stroke="#a6a6ab" stroke-width="1.0" stroke-linejoin="round"/>
<path d="M466,233.5 468,232.9 468.5,233.9 469,233.3 469.5,233.7 470,232.9 470.5,233.9 471,233.1 471.5,233.8 472,233.1 472.5,234.1 473,232.8 473.5,234.1 474,233 474.5,233.8 475,233.2 475.5,233.8 476,233 476.5,234.2 477,232.7 477.5,233.9 478,233.2 478.5,233.9 479,233.3 479.5,234 480,233.2 480.5,234 481,233.1 481.5,234.2 482,233.2 482.5,234 483,232.9 483.5,233.9 484,233.2 484.5,234.2 485,232.9 485.5,233.7 486,232.9 486.5,234 487,232.8 487.5,233.9 488,232.8 488.5,234.2 489,233.1 489.5,233.9 490,233 490.5,234.1 491,232.8 491.5,233.8 492,233.2 492.5,234 493,232.8 493.5,234.3 494,233.1 494.5,233.9 495,233 495.5,234 496,232.8 496.5,234.1 497,232.9 497.5,233.9 498,232.9 498.5,233.9 499,233 499.5,233.8 500,233 500.5,234.2 501,233 501.5,233.9 502,232.9 502.5,234 503,232.9 503.5,234.1 504,233.2 504.5,234.1 505,232.7 505.5,234.1 506,232.9 506.5,234.2 507,233.3 507.5,234.2 508,232.8 508.5,234.2 509,232.9 509.5,233.8 510,233.2 510.5,234.2 511,233 511.5,233.9 512,233.2 512.5,234.2 513,233 513.5,234.2 514,233 514.5,234.1 515,233 515.5,233.7 516,233.2 516.5,234.1 517,232.9 517.5,234.2 518,233.2 518.5,233.9 519,233.3 519.5,234 520,233 520.5,233.9 521,233.1 521.5,234.1 522,232.8 522.5,233.8 523,232.9 523.5,234.2 524,232.8 524.5,233.8 525,233 525.5,234.2 526,233.1 526.5,233.9 527,233.1 527.5,234.2 528,233.1 528.5,233.9 529,233 529.5,233.8 530,232.8 530.5,234.2 531,232.8 531.5,233.9 532,233.2 532.5,234.1 533,232.8 533.5,233.9 534,233.1 534.5,234.2 535,232.8 535.5,234 536,232.9 536.5,234.1 537,232.9 537.5,234.3 538,232.9 538.5,233.9 539,232.8 539.5,233.9 540,233.2 540.5,234.2 541,233.1 541.5,233.9 542,232.9 542.5,234 543,232.8 543.5,233.9 544,233.2 544.5,233.9 545,233.2 545.5,233.8 546,233.1 546.5,233.9 547,232.9 547.5,233.9 548,233.2 548.5,233.8 549,232.9 549.5,233.8 550,233.1 550.5,234.1 551,232.7 551.5,233.9 552,233.1 552.5,234.2 553,233 553.5,234.3 554,233 554.5,233.9 555,233.2 555.5,234.3 556,232.9 556.5,234.2 557,232.8 557.5,233.7 558,233.2 558.5,233.8 559,232.8 559.5,234.1 560,233.1 560.5,234 561,233 561.5,233.8 562,232.8 562.5,234 563,233.2 563.5,234 564,233.2 564.5,233.8 565,233.1 565.5,234.1 566,232.9 566.5,234 567,233.2 567.5,234.2 568,233.1 568.5,233.9 569,233.1 569.5,234.2 570,233 570.5,233.9 571,233.2 571.5,234.1 572,233.3 572.5,234 573,233 573.5,234.1 574,232.9 574.5,234 575,232.8 575.5,234.2 576,233.2 576.5,233.8 577,233.2 577.5,234.2 578,233 578.5,233.9 579,232.9 579.5,233.9 580,233.1 580.5,233.9 581,232.9 581.5,233.8 582,232.8 582.5,233.8 583,233.1 583.5,234 584,232.9 584.5,234.1 585,233 585.5,233.9 586,233.2 586.5,234 587,233 587.5,233.9 588,232.8 588.5,233.8 589,232.8 589.5,234.1 590,232.8 590.5,233.9 591,233.2 591.5,233.9 592,232.9 592.5,233.9 593,232.8 593.5,233.7 594,233.2 594.5,234.1 595,233 595.5,234.2 596,232.8 596.5,234.2 597,232.8 597.5,234.2 598,232.8 598.5,234 599,233.1 599.5,233.8 600,233.2 600.5,234.1 601,232.8 601.5,233.9 602,233.2 602.5,233.8 603,233.2 603.5,234.2 604,232.9 604.5,233.9 605,233 605.5,234 606,232.9 606.5,234.1 607,233 607.5,233.8 608,233 608.5,234.1 609,233.2 609.5,234 610,233 610.5,233.8 611,233 611.5,234.2 612,232.8 612.5,234.1 613,233.1 613.5,234.2 614,232.8 614.5,234 615,233.1 615.5,234.2 616,232.7 616.5,234.1 617,233 617.5,234.1 618,232.8 618.5,233.8 619,232.8 619.5,234.2 620,232.8 620.5,233.7 621,232.8 621.5,233.9 622,233 622.5,233.8 623,233.3 623.5,233.9 624,232.9 624.5,233.8 625,233.1 625.5,234.2 626,233 626.5,233.9 627,233 627.5,234 628,232.8 628.5,234.1 629,233.2 629.5,233.9 630,232.7 630.5,234.1 631,233 631.5,234 632,233.2 632.5,234.1 633,232.9 633.5,233.7 634,232.7 634.5,234 635,233.1 635.5,234.1 636,233 636.5,234.1 637,233 637.5,234.2 638,233 638.5,234.2 639,232.8 639.5,233.8 640,233 640.5,234.2 641,232.9 641.5,234.1 642,232.8 642.5,233.9 643,232.9 643.5,233.9 644,232.8 644.5,233.9 645,233.1 645.5,234.1 646,232.9 646.5,234.1 647,233 647.5,233.8 648,232.9 648.5,234.1 649,233.1 649.5,233.8 650,232.8 650.5,234 651,233.3 651.5,234 652,233.1 652.5,234 653,232.8 653.5,234.1 654,232.9 654.5,233.8 655,233 655.5,234.1 656,233 656.5,234 657,232.7 657.5,233.8 658,232.9 658.5,233.8 659,232.8 659.5,234 660,233.1 660.5,234 661,233.2 661.5,234.1 662,232.9 662.5,234.2 663,232.9 663.5,233.7 664,233.2 664.5,233.8 665,233.3 665.5,234.2 666,233 666.5,233.8 667,232.8 667.5,234.2 668,233.2 668.5,233.8 669,232.8 669.5,234 670,233.3 670.5,234.2 671,233.2 671.5,234 672,233.3 672.5,233.9 673,233.2 673.5,234.1 674,232.9 674.5,234.2 675,233.3 675.5,233.8 676,233 676.5,234.2 677,232.9 677.5,233.9 678,233.2 678.5,234 679,232.9 679.5,234.1 680,233.2 680.5,234.1 681,233 681.5,233.9 682,232.8 682.5,233.8 683,233.1 683.5,234.2 684,233 684.5,234.2 685,232.8 685.5,234 686,233.1 686.5,233.8 687,233.1 687.5,234.1 688,232.8 688.5,234.1 689,232.8 689.5,234.1 690,233.1 690.5,234 691,233.1 691.5,234 692,232.8 692.5,234.1 693,232.9 693.5,234.1 694,233 694.5,233.9 695,233.2 695.5,233.9 696,233 696.5,234.1 697,233.1 697.5,233.8 698,232.8 698.5,234.2 699,233.2 699.5,233.9 700,233 700.5,234.1 701,233.3 701.5,234.2 702,233.2 702.5,233.9 703,233.1 703.5,234 704,233.1 704.5,234 705,232.7 705.5,233.8 706,233 706.5,234 707,233.2 707.5,233.7 708,233 708.5,233.8 709,233 709.5,234.1 710,232.8 710.5,234.1 711,232.8 711.5,234.2 712,233.2 712.5,233.8 713,233 713.5,234.1 714,232.9 714.5,233.7 715,233 715.5,233.9 716,232.6 716.5,234.4 717,232.4 717.5,234.3 718,232.8 718.5,234 719.3,232.6 719.5,235.2 720.1,232.6 720.3,234.7 721,232.4 721.4,235.4 721.6,232.4 722.1,234.8 722.4,231.1 723,234.7 723.5,229.5 723.7,234.7 724.3,229.4 724.7,239.9 724.9,229 725.5,236.1 726,226.7 726.2,235.7 726.8,227.5 727.2,236.3 727.5,225.9 728.1,244.2 728.2,226.3 728.7,238 729.3,223.4 729.5,251.7 730.1,218 730.6,255.3 731,223.5 731.2,211.5 731.8,259.5 732.2,244.1 732.6,188.5 732.9,220.4 733.4,273.5 733.9,267.2 734.2,197.5 734.8,218 735,271.5 735.4,273.8 735.8,213.5 736.6,263.5 736.8,224.3 737.2,255.5 737.8,212.6 737.9,253.4 738.4,215.2 738.9,240.4 739.2,221.8 739.8,242.3 740.1,227.9 740.6,238.5 740.8,226.3 741.3,237.8 742,218.9 742.4,239.3 742.6,228.6 743.1,245 743.6,219.1 744.1,251 744.4,228.7 744.7,244.4 745.3,217.7 745.5,248.1 745.9,229 746.6,246.6 746.9,220.7 747.4,252.3 747.8,228.8 748.2,247.9 748.5,227.8 749.1,249.3 749.5,221.9 749.7,244.4 750.2,224.9 750.7,240.3 751.1,225.4 751.6,245.6 752,225.9 752.4,237.4 752.6,226.3 753.3,245.4 753.7,221.8 754.1,237.9 754.4,222.3 754.8,239.9 755.2,223.7 755.6,236.8 756,221 756.5,237.5 756.9,230.2 757.3,244.5 757.7,230.7 758.3,244 758.6,226.9 759.2,245.7 759.5,227.8 760,240.5 760.4,227.3 760.8,237.1 761,226.8 761.7,238.2 762,226 762.4,245.3 762.8,230.5 763.3,245.2 763.6,223.8 764,237.2 764.5,227.3 764.9,240.8 765.3,226.9 765.7,243 766.2,225.6 766.5,238 767.1,225.1 767.4,238.5 767.8,224 768.2,243.8 768.8,230.5 769,243.3 769.7,229.3 770,236.1 770.5,224.2 770.8,238.5 771.2,230.2 771.7,239.1 772,229.5 772.4,238.4 773,226.7 773.3,237.5 773.9,230.5 774.2,235.4 774.7,228.2 774.9,240.1 775.3,230.7 775.9,241.2 776.2,230 776.6,239.8 777,230.8 777.4,235.2 778,227.5 778.5,238.8 778.7,231.8 779.2,235.5 779.8,226.2 780,236.9 780.4,229.9 780.9,239.4 781.4,227.7 781.8,235.9 782.2,231 782.5,240.4 782.9,231.1 783.5,239.8 783.7,231.8 784.3,236.2 784.8,231.4 785.1,237 785.6,228.6 785.9,235.9 786.4,229.4 786.8,239.5 787.2,230.7 787.6,238.7 787.9,231.3 788.5,237.4 789,232.1 789.3,237.7 789.7,227.7 790.2,236.9 790.5,228.9 791,235.4 791.5,230.3 791.9,236.5 792.2,232.2 792.7,236 793,228.7 793.5,237 794,230.8 794.2,237.7 794.7,229.9 795,234.8 795.6,232.2 796,235.6 796.5,229.4 796.9,234.9 797.2,230 797.6,235.5 798.1,229.9 798.4,237.4 798.9,231.7 799.3,235 799.7,232.3 800.2,235.9 800.6,229.2 800.9,234.6 801.5,230.5 801.9,235.5 802.4,230.2 802.8,235.7 803.3,230.6 803.7,235.4 804,230.9 804.4,236.5 804.9,231.5 805.1,235.8 805.6,232.2 806.1,235.4 806.5,232.3 806.9,234.4 807.3,230.3 807.7,234.6 808.1,232.4 808.7,234.4 809,231.3 809.4,236.4 809.8,229.5 810.3,235.4 810.7,230.7 811.1,236.7 811.6,231.5 811.9,234.5 812.3,231.5 812.9,237.2 813.2,232.4 813.6,235 814.1,232.1 814.6,237 814.8,232.6 815.2,235.2 815.7,230.6 816.2,235 816.5,231.1 816.9,234.5 817.3,229.9 817.7,234.8 818.1,232 818.6,235.3 819.2,231.4 819.6,236.1 820.1,232.4 820.5,234.4 820.7,230.4 821.2,235.4 821.6,231.3 821.9,235.3 822.5,232.1 822.8,234.6 823.3,232.7 823.6,236.4 824.1,230.8 824.6,234.6 824.9,232.3 825.5,235.6 825.9,232.5 826.2,235.3 826.8,230.8 826.9,235.8 827.5,232.8 828,234.2 828.5,231.2 828.8,235.8 829.3,231.2 829.5,235.9 829.9,230.7 830.5,235 830.8,232.8 831.3,236.1 831.7,232.2 832.1,236 832.5,232.3 833,234.8 833.5,232.1 833.8,235.5 834.2,232.4 834.7,234.5 835.1,232.7 835.4,234.6 836,232 836.3,235.1 836.8,231.2 837.2,234.7 837.7,231.8 837.9,234.8 838.5,231.9 838.7,234.4 839.4,232 839.7,235.9 840.2,231.8 840.5,236 840.9,232.7 841.4,235.3 841.6,232.4 842.1,235.2 842.8,232.7 843.1,235.9 843.6,232.7 843.9,234.2 844.4,231.4 844.7,235.4 845,232.9 845.5,235.3 845.9,233 846.5,235.6 846.9,231.7 847.3,234.2 847.7,232 848.2,235.4 848.5,231.6 849,235.3 849.3,232.5 849.8,234.7 850.1,232 850.6,234.6 851.1,232.1 851.4,235.3 851.8,232.1 852.4,235.1 852.6,231.5 853.2,234.5 853.5,231.9 853.9,234.5 854.4,231.5 854.8,234.1 855.4,232 855.8,234.4 856,231.4 856.4,234.1 856.9,231.7 857.3,234.6 857.9,232.8 858.3,234.1 858.5,232 859.1,235.2 859.4,233 860,234.5 860.3,231.8 860.6,235.3 861,231.5 861.6,234.4 861.9,232.9 862.2,234.7 862.7,232.8 863.2,234.9 863.7,233 864.1,234 864.5,232.5 865,234.4 865.2,232.2 865.7,234.2 866.1,231.9 866.6,234.4 866.8,231.8 867.3,234.5 867.8,232.9 868.3,234.5 868.8,231.8 869.3,234.6 869.8,232.6 870.3,234.1 870.8,231.9 871.3,235.1 871.8,232.8 872.3,234 872.8,232 873.3,234.5 873.8,232.8 874.3,234 874.8,232.9 875.3,235.1 875.8,232.4 876.3,234.3 876.8,232.4 877.3,234.9 877.8,232.8 878.3,234.9 878.8,232.4 879.3,235 879.8,232.2 880.3,234.2 880.8,232 881.3,234.8 881.8,232.1 882.3,234.3 882.8,232.4 883.3,234.2 883.8,232 884.3,234.7 884.8,232.8 885.3,234.9 885.8,232.4 886.3,234.7 886.8,232.3 887.3,234.9 887.8,232.8 888.3,234.3 888.8,232.8 889.3,234 889.8,232.6 890.3,234.1 890.8,232.7 891.3,234.4 891.8,232.4 892.3,234.9 892.8,232.5 893.3,234.4 893.8,232.5 894.3,234.8 894.8,232.6 895.3,234.6 895.8,232.1 896.3,234.7 896.8,232.2 897.3,233.9 897.8,233 898.3,234.6 898.8,233 899.3,234.2 899.8,232.3 900.3,234.5 900.8,232.2 901.3,234.1 901.8,232.8 902.3,234.4 902.8,232.9 903.3,234.4 903.8,232.6 904.3,234.2 904.8,232.6 905.3,234.4 905.8,232.2 906.3,234.7 906.8,232.9 907.3,234.7 907.8,232.3 908.3,234.4 908.8,232.5 909.3,234.2 909.8,232.6 910.3,234.7 910.8,232.5 911.3,234.2 911.8,232.9 912.3,234.3 912.8,233.1 913.3,234.6 913.8,232.3 914.3,234.6 914.8,232.9 915.3,234 915.8,233 916.3,234.5 916.8,232.6 917.3,234.7 917.8,232.4 918.3,233.9 918.8,232.6 919.3,234.1 919.8,232.6 920.3,233.9 920.8,232.6 921.3,234.6 921.8,232.4 922.3,234 922.8,232.5 923.3,234.7 923.8,232.6 924.3,234.1 924.8,232.9 925.3,234.2 925.8,233.1 926.3,234 926.8,232.8 927.3,234 927.8,232.4 928.3,233.9 928.8,232.4 929.3,234.1 929.8,232.7 930.3,234.1 930.8,232.3 931.3,234.3 931.8,232.8 932.3,234.6 932.8,232.3 933.3,234.7 933.8,233.1 934.3,234.6 934.8,233 935.3,234 935.8,232.9 936.3,234 936.8,232.7 937.3,234.3 937.8,233 938.3,234 938.8,232.9 939.3,234.3 939.8,232.9 940.3,234.1 940.8,232.7 941.3,234.3 941.8,232.8 942.3,234.5 942.8,233 943.3,234.6 943.8,232.8 944.3,233.9 944.8,233.1 945.3,234.6 945.8,232.7 946.3,233.9 946.8,232.9 947.3,234.4 947.8,232.6 948.3,234.3 948.8,233.1 949.3,234.3 949.8,233.1 950.3,233.9 950.8,232.6 951.3,234.3 951.8,232.6 952.3,233.9 952.8,232.4 953.3,234.2 953.8,233.1 954.3,234.5 954.8,233.1 955.3,234.1 955.8,232.9 956.3,234.6 956.8,232.8 957.3,234.2 957.8,232.8 958.3,234 958.8,232.5 959.3,234.2 959.8,233.1 960.3,234.2 960.8,233.2 961.3,234.4 961.8,232.9 962.3,234.3 962.8,232.5 963.3,234.2 963.8,232.5 964.3,234.3 964.8,232.9 965.3,234.3 965.8,232.5 966.3,234.3 966.8,233.1 967.3,233.9 967.8,232.8 968.3,234.2 968.8,232.6 969.3,234.4 969.8,232.7 970.3,233.9 970.8,232.4 971.3,234.1 971.8,232.9 972.3,234.4 972.8,233.1 973.3,233.9 973.8,232.6 974.3,234.2 974.8,232.7 975.3,234 975.8,232.9 976.3,234.5 976.8,232.8 977.3,234.4 977.8,232.8 978.3,234.4 978.8,233.1 979.3,234.3 979.8,233.2 980.3,234 980.8,232.9 981.3,234 981.8,232.5 982.3,234.2 982.8,233.1 983.3,233.8 983.8,232.6 984.3,234.4 984.8,232.6 985.3,234.2 985.8,233.2 986.3,234 986.8,232.9 987.3,234.4 987.8,232.9 988.3,234.5 988.8,233.1 989.3,234 989.8,233 990.3,233.9 990.8,232.8 991.3,234.1 991.8,233.1 992.3,234.2 992.8,232.9 993.3,233.9 993.8,232.7 994.3,234 994.8,233 995.3,233.8 995.8,232.6 996.3,234 996.8,233.2 997.3,234 997.8,233.1 998.3,234.2 998.8,232.7 999.3,234.2 999.8,232.7 1000.3,234.2 1000.8,232.8 1001.3,234.4 1001.8,232.9 1002.3,234.1 1002.8,232.9 1003.3,234 1003.8,233.1 1004.3,234.4 1004.8,232.7 1005.3,234.4 1005.8,232.8 1006.3,234.4 1006.8,232.6 1007.3,234.1 1007.8,232.8 1008.3,234.1 1008.8,233 1009.3,234.3 1009.8,232.9 1010.3,234.1 1010.8,233.1 1011.3,233.9 1011.8,233.1 1012.3,234.1 1012.8,232.9 1013.3,234.1 1013.8,232.7 1014.3,234.1 1014.8,233.1 1015.3,234.1 1015.8,233 1016.3,233.8 1016.8,232.9 1017.3,234.1 1017.8,232.9 1018.3,233.9 1018.8,233.2 1019.3,233.8 1019.8,233.2 1020.3,234.1 1020.8,232.8 1021.3,234.1 1021.8,233.2 1022.3,234 1022.8,232.9 1023.3,234 1023.8,233.1 1024.3,234.4 1024.8,233.2 1025.3,234.1 1025.8,232.6 1026.3,234 1026.8,233.1 1027.3,234.1 1027.8,232.8 1028.3,234.1 1028.8,232.7 1029.3,233.9 1029.8,232.6 1030.3,234.1 1030.8,232.7 1031.3,234.1 1031.8,232.8 1032.3,233.9 1032.8,233 1033.3,234.1 1033.8,232.6 1034.3,234 1034.8,233.1 1035.3,234.3 1035.8,232.7 1036.3,234.2 1036.8,233.1 1037.3,234.1 1037.8,232.7 1038.3,234.2 1038.8,232.8 1039.3,233.9 1039.8,233.2 1040.3,234.2 1040.8,233.1 1041.3,234.3 1041.8,232.9 1042.3,234.2 1042.8,232.9 1043.3,234.2 1043.8,232.9 1044.3,233.8 1044.8,232.9 1045.3,234 1045.8,233.2 1046.3,233.9 1046.8,232.7 1047.3,234.3 1047.8,233 1048.3,234.2 1048.8,233 1049.3,234.3 1049.8,232.7 1050.3,233.9 1050.8,233 1051.3,234.3 1051.8,233.2 1052.3,233.8 1052.8,232.9 1053.3,234.1 1053.8,232.7 1054.3,234 1054.8,233.1 1055.3,234.3 1055.8,233 1056.3,233.8 1056.8,232.7 1057.3,234.1 1057.8,232.9 1058.3,234.1 1058.8,232.9 1059.3,233.9 1059.8,233.2 1060.3,234.2 1060.8,233 1061.3,234.3 1061.8,232.7 1062.3,234 1062.8,232.8 1063.3,234.1 1063.8,232.8 1064.3,233.9 1064.8,233.3 1065.3,234.2 1065.8,232.8 1066.3,234.2 1066.8,233.1 1067.3,234.1 1067.8,232.8 1068.3,234 1068.8,233 1069.3,234 1069.8,233.2 1070.3,234.2 1070.8,233.2 1071.3,233.9 1071.8,233.1 1072.3,233.9 1072.8,233 1073.3,234 1073.8,233 1074.3,234.2 1074.8,233 1075.3,234.2 1075.8,232.8 1076.3,233.8 1076.8,233.2 1077.3,234.2 1077.8,233 1078.3,233.8 1078.8,233 1079.3,234.3 1079.8,233.2 1080.3,234.2 1080.8,232.8 1081.3,234.1 1081.8,233.2 1082.3,234.1 1082.8,233.1 1083.3,234 1083.8,233 1084.3,234.1 1084.8,232.9 1085.3,234.3 1085.8,232.8 1086.3,234.2 1086.8,232.9 1087.3,234.1 1087.8,233 1088.3,233.9 1088.8,232.8 1089.3,234.3 1089.8,233.2 1090.3,234.3 1090.8,232.9 1091.3,233.8 1091.8,232.9 1092.3,233.9 1092.8,232.9 1093.3,234.2 1093.8,232.9 1094.3,233.8 1094.8,232.8 1095.3,234.2 1095.8,232.9 1096.3,233.9 1096.8,233.1 1097.3,234.1 1097.8,233.2 1098.3,234.2 1098.8,232.9 1099.3,234.1 1099.8,233 1100.3,234.1 1100.8,232.7 1101.3,234.3 1101.8,233 1102.3,234.2 1102.8,233.1 1103.3,234.3 1103.8,233 1104.3,234.2 1104.8,232.9 1105.3,233.8 1105.8,233.3 1106.3,233.8 1106.8,232.7 1107.3,233.9 1107.8,233 1108.3,234.1 1108.8,233 1109.3,233.9 1109.8,232.9 1110.3,234 1110.8,232.8 1111.3,233.9 1111.8,232.8 1112.3,234 1112.8,233.2 1113.3,234 1113.8,232.8 1114.3,233.7 1114.8,233.2 1115.3,234.2 1115.8,233 1116.3,234.2 1116.8,233.3 1117.3,234.1 1117.8,232.9 1118.3,234 1118.8,233.2 1119.3,233.9 1119.8,233.2 1120.3,233.8 1120.8,232.9 1121.3,233.9 1121.8,232.9 1122.3,234.1 1122.8,233.3 1123.3,234.2 1123.8,233.1 1124.3,233.8 1124.8,232.8 1125.3,233.9 1125.8,233.1 1126.3,234.1 1126.8,233.1 1127.3,234 1127.8,232.8 1128.3,234.1 1128.8,233.2 1129.3,233.8 1129.8,233.1 1130.3,234.2 1130.8,233 1131.3,234.1 1131.8,233.2 1132.3,233.9 1132.8,233 1133.3,234.2 1133.8,232.8 1134.3,234 1134.8,233 1135.3,234.2 1135.8,233.1 1136.3,233.7 1136.8,232.8 1137.3,234.1 1137.8,233.1 1138.3,233.9 1138.8,233.2 1139.3,234.2 1139.8,232.8 1140.3,233.8 1140.8,233 1141.3,234.2 1141.8,232.9 1142.3,234.1 1142.8,232.9 1143.3,234.1 1143.8,232.8 1144.3,233.7 1144.8,232.9 1145.3,234.1 1145.8,232.9 1146.3,234.2 1146.8,232.9 1147.3,233.7 1147.8,233.3 1148.3,234.2 1148.8,233 1149.3,233.9 1149.8,233.3 1150.3,234.2 1150.8,233.2 1151.3,233.8 1151.8,233.1 1152.3,233.9 1152.8,233.2 1153.3,233.8 1153.8,233 1154.3,233.9 1154.8,233.3 1155.3,234.2 1155.8,233.2 1156.3,234 1156.8,233.3 1157.3,234 1157.8,233 1158.3,233.8 1158.8,233.2 1159.3,234.2 1159.8,233.1 1160.3,234.2 1160.8,233.1 1161.3,234.1 1161.8,233.1 1162.3,233.8 1162.8,233.1 1163.3,234.1 1163.8,232.9 1164.3,234 1164.8,233.3 1165.3,233.8 1165.8,233.1 1166.3,234.2 1166.8,233.3 1167.3,233.9 1167.8,233 1168.3,233.8 1168.8,233.3 1169.3,234 1169.8,233.1 1170.3,234 1170.8,232.9 1171.3,233.7 1171.8,233.3 1172.3,233.7 1172.8,233 1173.3,234.2 1173.8,233.1 1174.3,234.1 1174.8,233.2 1175.3,233.7 1175.8,232.9 1176.3,233.9" fill="none" stroke="#808080" stroke-width="1.0" stroke-linejoin="round"/>
<path d="M140,318.4 142,318.5 144,318.4 146,318.5 148,318.6 150,318.3 152,318.3 154,318.6 156,318.4 158,318.4 160,318.7 162,318.5 164,318.6 166,318.5 168,318.6 170,318.4 172,318.6 174,318.6 176,318.5 178,318.6 180,318.6 182,318.3 184,318.6 186,318.5 188,318.4 190,318.3 192,318.6 194,318.5 196,318.6 198,318.7 200,318.6 202,318.7 204,318.5 206,318.6 208,318.5 210,318.7 212,318.7 214,318.3 216,318.4 218,318.4 220,318.7 222,318.5 224,318.6 226,318.4 228,318.5 230,318.5 232,318.4 234,318.5 236,318.5 238,318.7 240,318.6 242,318.7 244,318.6 246,318.7 248,318.6 250,318.4 252,318.6 254,318.7 256,318.7 258,318.5 260,318.6 262,318.4 264,318.6 266,318.5 268,318.4 270,318.3 272,318.6 274,318.7 276,318.3 278,318.6 280,318.5 282,318.4 284,318.4 286,318.6 288,318.6 290,318.3 292,318.5 294,318.3 296,318.6 298,318.4 300,318.7 302,318.7 304,318.5 306,318.7 308,318.4 310,318.3 312,318.5 314,318.3 316,318.4 318,318.5 320,318.5 322,318.4 324,318.3 326,318.6 328,318.4 330,318.7 332,318.7 334,318.5 336,318.5 338,318.5 340,318.6 342,318.5 344,318.5 346,318.5 348,318.7 350,318.5 352,318.5 354,318.6 356,318.4 358,318.4 360,318.7 362,318.5 364,318.5 366,318.3 368,318.5 370,318.5 372,318.3 374,318.5 376,318.6 378,318.3 380,318.6 382,318.5 384,318.6 386,318.4 388,318.6 390,318.6 392,318.3 394,318.3 396,318.6 398,318.7 400,318.4 402,318.5 404,318.5 406,318.4 408,318.4 410,318.4 412,318.4 414,318.5 416,318.4 418,318.5 420,318.6 422,318.3 424,318.5 426,318.6 428,318.4 430,318.4 432,318.6 434,318.4 436,318.4 438,318.5 440,318.6 442,318.3 444,318.4 446,318.4 448,318.6 450,318.5 452,318.6 454,318.4 456,318.4 458,318.6 460,318.7 462,318.5 464,318.4 466,318.3" fill="none" stroke="#a6a6ab" stroke-width="1.0" stroke-linejoin="round"/>
<path d="M466,318.3 468.2,317.6 468.5,319.5 469.1,316.1 469.3,319.6 469.8,316.9 470.2,320.7 470.5,317.1 471.2,323.3 471.6,313.3 472,322.6 472.3,315.5 472.6,320.3 473.3,316.5 473.7,323.4 474.1,313.6 474.5,319.7 474.9,316.5 475.4,321 475.6,316.3 476.2,321.2 476.6,316.8 477.1,320.1 477.5,314.2 477.9,321.9 478.2,316.6 478.6,321 478.9,317.3 479.4,319.9 479.8,313.9 480.3,320.6 480.8,315 481.1,320.1 481.7,315.5 481.9,319.8 482.5,315.2 482.9,322.7 483.3,316.2 483.7,320.9 484.1,316.7 484.5,319.8 485.1,313.9 485.5,323.2 485.7,315.9 486.3,322 486.7,315 487.1,319.8 487.6,317.1 487.8,319.8 488.2,317 488.8,319.9 489.3,314.2 489.4,322.6 490.1,315.7 490.5,322.4 490.8,316.5 491.2,320.2 491.7,315.3 492.1,320.7 492.4,316.1 492.9,323.5 493.4,317 493.8,322 494.3,315.2 494.7,319.8 495,315.8 495.4,320 495.8,315.5 496.4,322 496.7,314.9 497.1,321.5 497.5,317.4 497.9,320 498.3,314.6 498.8,321.1 499.3,314.3 499.7,321.1 500.1,316.3 500.4,321 501,314.9 501.3,322.7 501.7,316.8 502.3,322.8 502.5,314.2 502.9,322.1 503.4,314.4 503.9,321.5 504.3,316.6 504.7,320.1 505.1,316.3 505.6,320.3 506.1,314.2 506.3,323 506.7,314.7 507.3,321.8 507.8,314.8 507.9,321.3 508.5,316.5 508.8,321.4 509.2,315.3 509.6,321.8 510.1,317.1 510.6,321.5 510.9,316.1 511.5,319.7 511.9,315.7 512.2,320.2 512.7,317.4 513,322.3 513.5,316.3 514,320.5 514.2,316.8 514.8,322.3 515.2,317 515.7,322.5 516,317.1 516.5,321.2 517,316.8 517.4,322.3 517.7,316.4 518.3,321.6 518.7,316.7 519,321.5 519.4,314.7 519.8,321.2 520.1,315.8 520.6,321.7 521.2,313.8 521.5,322.4 521.8,316.5 522.5,321.1 522.8,314.5 523.2,322.4 523.7,315 524.1,322.4 524.5,316.2 524.7,319.8 525.2,317 525.7,321.9 526.1,315.3 526.5,322.2 527,314.1 527.4,320.6 527.6,316.9 528.1,322.3 528.5,317 529,320.6 529.4,317.3 529.7,319.6 530.4,316.3 530.7,320.6 531.1,314.2 531.5,320.7 531.9,316.6 532.3,321.8 533,316.1 533.2,320.1 533.6,315.4 534.2,321.8 534.4,317.4 534.8,319.9 535.5,315.5 535.8,322.9 536.3,314.1 536.6,320.2 537,317.3 537.4,319.8 538,315.2 538.4,322.1 538.8,315.8 539,320.7 539.5,316.1 540,322 540.4,316.4 540.7,321.9 541.3,314.9 541.8,320.1 542.2,314.3 542.6,322.8 542.8,316.5 543.2,323.1 543.6,317.3 544,320.1 544.6,315.4 545.2,320 545.4,315.8 545.9,321.4 546.2,317.1 546.6,322.4 547,314.1 547.5,319.7 548,314.6 548.5,322.1 548.8,315.6 549.2,322.4 549.6,317 549.9,322 550.3,316.1 550.9,322 551.2,315.6 551.7,323.2 552.1,317.3 552.6,322.9 553,313.8 553.4,321.1 554,314.2 554.2,322.1 554.6,314.2 555,319.9 555.5,316.8 556,319.6 556.3,316.3 556.7,322 557.2,316.7 557.7,319.8 558.2,313.9 558.3,320.5 558.9,316.2 559.4,320.5 559.8,316.2 560.1,320.2 560.4,317.5 560.9,321.1 561.5,317 561.9,323.1 562.1,317.4 562.6,320.7 562.9,315.9 563.6,320.1 563.8,316.9 564.4,321.5 564.7,314.7 565.3,322 565.6,314.6 565.9,319.9 566.6,314.3 567,321.6 567.2,315.6 567.6,319.9 568.1,313.9 568.5,320.4 569.1,316.2 569.4,320.3 569.9,314.6 570.1,321.4 570.6,315.9 571.2,321.8 571.4,315.4 572,322.6 572.4,317.1 572.8,320.5 573.3,316.9 573.5,320.3 573.9,317.2 574.3,319.6 574.8,317.4 575.3,322.4 575.6,317.5 576,319.6 576.5,316.9 577.1,320 577.3,314.3 577.8,321.6 578.3,317.4 578.7,319.9 579.2,317.4 579.3,320.5 579.8,314 580.2,319.8 580.6,314.3 581.3,322.8 581.5,317 582,320.9 582.3,317.5 582.8,322.1 583.2,315.9 583.6,322.3 584.2,314.2 584.6,322.9 584.8,316.9 585.3,322.9 585.6,317.3 586.3,322.1 586.7,316 587,321.1 587.4,315.7 587.8,320.4 588.4,315.7 588.8,322.4 589,314.1 589.6,320.9 589.9,315.5 590.4,320.7 590.9,314.5 591.2,320.7 591.7,316.4 592.2,319.6 592.4,314.1 593,321.1 593.4,314.6 593.7,320.2 594.2,316.6 594.5,321.2 595,316.6 595.4,319.6 595.8,317.5 596.3,321 596.8,314.7 597,321.6 597.5,316.6 597.8,320.1 598.2,315.7 598.6,320.3 599.1,317.2 599.6,320.9 600,315.5 600.5,322.9 600.9,316.3 601.1,319.6 601.8,316.4 602.1,320.3 602.5,314.5 603,319.6 603.4,314.3 603.7,319.6 604.2,314.7 604.7,322.9 605,317.1 605.5,319.7 606,316.7 606.4,322.3 606.7,317.4 607.3,319.9 607.7,314.8 608,322.6 608.3,317.2 609,320.4 609.2,317.4 609.6,319.8 610.1,315.4 610.5,319.9 611,317 611.4,321.5 611.8,315.3 612.2,321.2 612.7,317.5 613.1,320.8 613.5,314.5 614,322.1 614.3,314.1 614.7,321.6 615,315.9 615.6,322.2 616,314.7 616.5,321.1 616.9,317.4 617.4,320.2 617.8,316 618,321.8 618.6,315.5 619,320.7 619.4,315.4 619.8,319.6 620.1,315.3 620.6,319.8 620.9,317.4 621.5,319.9 621.9,317.4 622.3,322.3 622.6,317.4 623,322.6 623.5,316.3 623.9,322.7 624.3,316.2 624.9,322.8 625.1,314.6 625.6,321.8 626,314.2 626.5,319.8 626.9,316.2 627.3,321.7 627.8,316.5 628.2,321 628.5,317.5 629.1,319.9 629.5,314.4 629.7,320.4 630.4,315.3 630.8,319.7 631.2,316.3 631.6,320.9 631.8,317.3 632.3,322.3 632.9,317.4 633.4,320.6 633.7,317 634.1,320 634.5,317.5 634.8,322.6 635.4,316.6 635.7,321.4 636.2,316.4 636.5,319.9 637,316.9 637.3,321.1 637.8,317.6 638.2,320.9 638.7,315.9 639.1,320.8 639.6,317.5 640.1,319.6 640.3,315.8 640.7,322.8 641.1,314.2 641.5,320.7 641.9,316.5 642.5,319.4 642.7,314.6 643.3,320.1 643.6,316.9 644.3,319.6 644.5,314.4 645,321.7 645.4,316.2 645.8,321.4 646.1,317.6 646.6,322.4 647,316 647.3,321.1 647.8,315.4 648.3,320 648.9,315.3 649.1,319.8 649.6,317.1 649.9,319.9 650.4,317.2 650.9,322.2 651.1,316.5 651.6,321.7 652,317 652.6,319.8 652.8,315.4 653.3,320.7 653.7,316.5 654.3,321.3 654.7,317.2 655.2,321.5 655.6,315.2 656,321.1 656.4,314.9 656.6,319.7 657.1,316.5 657.5,322.4 657.9,314.5 658.3,322.6 658.8,314.9 659.2,322.3 659.6,316.8 660.1,320.9 660.4,316.3 661,322.4 661.3,317.5 661.9,319.7 662.2,314.7 662.5,320.5 663,317 663.6,319.8 663.8,315.7 664.2,320.4 664.6,316 665,321 665.5,316.8 665.9,319.6 666.3,316.6 666.9,320.6 667.2,315.3 667.8,319.7 668.1,316.7 668.4,320.3 668.9,317.6 669.3,320.7 669.7,315.5 670.3,319.6 670.5,315.2 671.1,320.8 671.6,314.9 671.7,320.3 672.3,316.5 672.7,322.6 673,316.2 673.4,319.5 674,317 674.4,319.8 674.9,316.3 675.3,321.4 675.7,315.3 676.1,319.7 676.5,317.2 676.9,322 677.2,315.7 677.8,321.8 678,317.1 678.5,320.5 678.9,315.6 679.5,321.6 680,317.5 680.2,321 680.6,316.6 681.1,320.2 681.6,314.6 682,321.2 682.4,316.4 682.7,321.9 683.3,317 683.6,320.6 684,317.2 684.5,320.9 684.8,317.3 685.3,320.5 685.8,315.8 686.1,319.4 686.6,317.6 687,320 687.5,316.4 687.7,320.1 688.2,316.8 688.5,319.4 689.2,317.5 689.6,319.8 690,317.5 690.2,322.5 690.9,317.1 691.1,320.9 691.5,315.7 692.1,321.9 692.6,316 692.7,320 693.1,315.3 693.8,320.3 694.2,315.7 694.5,319.9 695.1,315.8 695.4,322.2 695.9,316.4 696.2,320.2 696.7,317.2 697,321.1 697.5,316.2 697.9,322 698.2,315 698.9,321.8 699.1,316.7 699.6,319.8 699.9,315.2 700.5,322.1 700.8,316.2 701.2,320.7 701.7,314.9 702.2,319.7 702.4,315.8 702.9,320.7 703.4,316.5 703.7,322.5 704.2,314.6 704.5,322 705.1,315.9 705.3,321.1 706,317.1 706.4,320.6 706.6,316.2 707.2,321.7 707.4,315 707.8,320.7 708.4,314.7 708.8,322 709.1,316.6 709.6,319.5 710.1,317.4 710.4,321.1 710.9,314.9 711.3,320.2 711.6,314.3 712.3,319.9 712.7,317.2 713,322.8 713.3,314.9 713.8,320.5 714.3,315.4 714.6,322.2 715.1,317.4 715.4,320.9 715.9,315.6 716.5,319.6 716.7,314.7 717.2,319.9 717.7,317.2 718.2,322.7 718.5,314.1 718.7,320.9 719.3,316.7 719.8,323.7 720.1,313.6 720.5,323.9 721.1,313.9 721.4,321.1 721.8,316.5 722.4,320.2 722.6,308.7 723.2,329.5 723.4,306.7 724,323.7 724.5,312.9 724.7,325 725.3,307.6 725.7,338.7 726,294.9 726.5,328.2 726.8,292.1 727.3,339.5 727.6,280.5 728.2,304.8 728.4,348.5 729.1,346 729.4,280 729.9,341.2 730.2,305.7 730.7,339.4 731.2,284.8 731.5,348.7 731.8,309 732.4,337 732.7,299 733.2,362.1 733.8,288.5 734.1,301.6 734.6,364.5 735,352.5 735.4,284.5 735.7,280 736,340.6 736.6,282 736.8,362.5 737.3,330.7 737.9,296.7 738.2,348.8 738.5,286.8 738.9,330.5 739.5,297.3 740,354.1 740.4,310.2 740.6,328.1 741.1,307.6 741.6,333.5 742,289.9 742.5,332.1 742.8,297.3 743.3,329.4 743.6,310.6 744.2,326.9 744.5,310.4 744.9,346.6 745.2,289.2 745.8,327.6 746.1,310.7 746.6,329.2 747,300.8 747.4,330.8 747.8,308.3 748.4,330 748.7,306 749.1,343.6 749.5,310.1 750,326 750.4,303.6 750.9,326.7 751.2,303.1 751.6,326.6 752.1,297.4 752.4,343 753,294.2 753.4,324.4 753.8,313.3 754.2,323.9 754.5,309.5 755.2,329.1 755.5,299.9 755.9,333.3 756.2,306.2 756.7,337.4 757.1,298.6 757.4,326.6 757.9,302.1 758.5,325.8 758.7,309.3 759.2,328.7 759.6,312.6 759.9,334.7 760.5,303.2 760.8,336.3 761.3,314.6 761.7,324.9 762,314.2 762.6,322.9 763.1,307.8 763.4,324.7 763.8,314.4 764.2,327.6 764.8,312.6 765,324 765.6,313.1 766.1,326.6 766.3,305.7 766.7,327.3 767.1,313.2 767.6,328.6 768.1,308.3 768.4,332.2 768.9,302.9 769.3,322.1 769.6,311.6 770.2,324 770.6,312.6 770.9,322.4 771.5,311.1 771.7,328.8 772.2,313.7 772.6,322 773.2,308.2 773.4,327.9 773.8,308.7 774.2,326.5 774.7,306.1 775.2,323.9 775.5,312.4 776,326.3 776.4,309.9 776.7,332.5 777.2,312.4 777.8,332.1 778.1,303.8 778.6,328.4 778.9,312.9 779.3,327.5 779.8,305.8 780.1,329 780.8,314.5 781,323.9 781.5,311.1 781.9,331.6 782.3,307.4 782.7,324 783.2,313.3 783.7,322.2 784,310.3 784.5,324.3 784.8,306.1 785.3,324.1 785.6,309.3 786,330.1 786.4,304.4 787.1,332.4 787.5,306.9 787.7,330.1 788.2,310.5 788.7,328.4 788.9,315 789.5,333.2 789.8,307.3 790.4,332.6 790.8,306.5 791.1,331.7 791.4,313.1 791.9,326.9 792.3,315 792.9,326.6 793.1,314 793.7,326.8 794.2,315.7 794.5,326.5 794.8,313.9 795.3,327.2 795.8,313.6 796.3,325.5 796.5,309.5 797,328.9 797.5,315.8 797.9,326.4 798.3,315.7 798.7,321.9 799.1,311.5 799.7,326.3 800,313.8 800.4,323 800.6,315.3 801.1,326.3 801.5,314.5 802.1,321.6 802.6,314.3 802.9,323.9 803.4,315.5 803.7,324.1 804,314.8 804.4,327.3 805.1,314.3 805.3,322 805.9,309 806.3,323.9 806.6,310.6 807.1,327.5 807.6,315.7 808,327 808.4,315.9 808.9,326.9 809.3,313.7 809.5,320.7 810.1,315 810.3,325.7 810.9,311.4 811.3,325.7 811.6,313.5 812.1,326.7 812.6,310.9 813,322.9 813.3,315.8 813.7,323.2 814.2,316.3 814.5,322.8 815.2,314.9 815.6,321.8 816,314 816.2,324.4 816.9,310.6 817.1,320.7 817.7,316 818.1,324.2 818.5,314.1 818.9,323 819.2,315.6 819.7,323.4 820.1,316 820.5,320.9 821,315.1 821.3,326.1 821.7,311.1 822.3,320.4 822.5,314.8 823.1,326.2 823.4,314 823.8,321.4 824.2,316.7 824.8,324.9 825.2,314.9 825.6,321.3 825.9,312.3 826.5,321.8 826.7,313.8 827.1,323.1 827.6,314.2 828,324.6 828.5,313.1 829,322.7 829.4,316 829.9,322 830.2,314.5 830.7,320.6 831,314.7 831.6,324.4 831.9,312.3 832.4,320.1 832.7,316.1 833.1,321 833.6,315.7 833.9,324.6 834.5,313.7 834.9,320.5 835.3,315.8 835.8,323.5 836.1,316.8 836.5,320.3 836.8,316.5 837.4,323.8 837.6,312.5 838.2,324 838.6,316.7 839.1,320.6 839.3,316.4 839.9,322.8 840.3,313.1 840.7,322.9 841.1,316.8 841.5,322.9 842,317.1 842.5,322.9 842.7,313 843.1,324.1 843.8,316.9 844.1,323.9 844.4,314.2 845,321.1 845.3,315.3 845.7,321.2 846.2,315.8 846.4,320.1 847,314 847.5,323.4 847.8,316.8 848.1,321.7 848.6,314.8 849,322.2 849.6,315.3 849.9,321.1 850.3,313.8 850.8,323 851.3,314 851.7,320.3 852,316.9 852.5,319.7 852.9,317.1 853.3,319.7 853.8,316.1 854.2,323.3 854.5,317.4 854.9,320.8 855.3,316.7 855.7,321 856.3,314 856.7,319.7 857.1,314.1 857.4,322.1 858,314.7 858.2,319.6 858.7,315.3 859,322.2 859.7,314 860,320.7 860.5,314.9 860.8,319.6 861.3,314.3 861.6,319.9 862.2,316.8 862.6,320.2 863,314.6 863.3,320.6 863.9,314.1 864.1,320.8 864.6,315.8 865.1,320.7 865.5,317 865.8,319.5 866.3,315.4 866.6,319.9 867.3,317.1 867.4,319.8 868.1,316.2 868.3,320.9 868.8,317.1 869.3,321 869.5,317 870,321.5 870.6,315.4 871,322.6 871.5,316.9 871.9,321.2 872.1,317.3 872.7,319.6 873,316.4 873.5,320.4 874,315 874.2,321.5 874.7,315.1 875.2,319.8 875.6,316.8 875.9,319.4 876.4,317.5 876.9,322 877.2,317.5 877.7,319.4 878.1,315.5 878.5,320.1 878.9,317.6 879.4,319.8 879.6,316.8 880.1,319.8 880.5,315.1 881,321.8 881.3,317.4 881.8,321.5 882.3,317.4 882.7,321.1 883.2,316.3 883.5,319.3 883.9,314.9 884.3,321.1 884.8,315.5 885.1,321.1 885.7,316.6 886,319.8 886.6,317.6 886.9,320.5 887.3,316.8 887.7,321.8 888,316.2 888.7,320.5 889.1,317.7 889.4,320 889.8,317.1 890.1,320 890.7,316.7 891.2,320.8 891.4,315.3 891.9,321.6 892.3,317 892.6,320.5 893.1,316.7 893.6,321.1 893.9,317.1 894.6,321.2 894.9,317.4 895.1,319.8 895.8,315.5 896,320.5 896.6,316.5 897.1,320 897.3,317.7 897.7,319.6 898.2,317.7 898.6,319.5 899.2,315.9 899.5,321.4 899.8,315.5 900.2,319.2 900.8,316.6 901.2,319.3 901.6,315.7 902.1,319.3 902.4,317.6 902.8,319.7 903.2,317.5 903.7,320.6 904.2,316.5 904.4,319.4 904.9,316.4 905.4,320.2 905.8,316.5 906.3,319.6 906.5,317.4 907,320.7 907.5,316.1 907.9,320.6 908.4,316.1 908.8,319.8 909.1,316.6 909.7,319.2 910.1,316.8 910.4,320.9 910.8,315.7 911.2,319.8 911.8,316.9 912.1,319.3 912.4,316.1 912.9,320.2 913.3,316.3 913.8,320.6 914.2,317.4 914.6,321 915,317.6 915.3,321.1 915.9,317.1 916.3,319.2 916.6,317.7 917,319.1 917.5,316.2 918.1,320 918.4,317.7 918.8,319.2 919.2,317.8 919.5,321 920,316.8 920.6,319.6 920.8,317.4 921.4,320.6 921.9,317 922.3,320 922.7,317.1 923,319.5 923.4,317.4 923.8,319.2 924.4,317.6 924.7,319.5 925.2,316 925.7,319.2 925.8,317.1 926.4,320.3 926.7,317.5 927.2,319.7 927.5,317.5 928,320.9 928.4,316.8 928.8,320.7 929.4,317.9 929.7,319.1 930,317.2 930.5,320.3 930.8,317.6 931.5,319.4 931.8,317.5 932.1,319.8 932.6,317.5 933.1,320.3 933.5,316.7 933.9,320.2 934.3,317 934.7,319.5 935.1,316.9 935.7,319.1 936.1,316.4 936.6,319.3 937,316.4 937.4,319.6 937.6,317.9 938.3,319.4 938.6,317.4 939,320.5 939.5,316.1 939.8,319.6 940.2,317.7 940.5,319.6 941.1,317.5 941.6,319.9 942,317 942.3,319.7 942.7,317.9 943,319.3 943.6,317.3 943.9,319.5 944.3,317.2 945,320.7 945.1,317.2 945.8,319.7 946.2,317.4 946.5,319.8 947.1,316.6 947.4,319.1 947.7,317.6 948.2,319.6 948.7,317.7 949,320.1 949.4,317.3 949.8,319.5 950.3,316.9 950.6,319.2 951.1,316.5 951.5,319.4 952,316.6 952.3,319.4 952.8,316.5 953.2,320.5 953.5,317.5 954.2,319.1 954.4,317.6 954.8,320 955.2,318 955.8,319.2 956.3,317.3 956.7,319.3 957.1,317.8 957.6,320 957.9,317 958.3,319.1 958.8,316.7 959.2,319.4 959.6,318 960,319 960.3,317.9 960.7,319.7 961.2,318 961.7,319.1 962.2,316.7 962.6,319.3 962.8,316.7 963.4,319.4 963.8,317.6 964.3,320.5 964.7,317.1 965.1,319.2 965.5,316.7 965.8,319.3 966.3,316.6 966.6,319.5 967.2,316.4 967.4,319.9 967.8,318 968.4,320.5 968.6,318 969.2,319 969.7,317.9 970.1,319 970.4,317.3 970.8,318.9 971.4,317.7 971.7,319 972.2,318 972.6,319.3 972.9,317.6 973.4,320 973.9,317.7 974.2,320.2 974.7,316.8 975.2,320 975.4,317.3 975.9,319.5 976.4,317.7 976.9,319.4 977.4,316.9 977.9,319.7 978.4,317.2 978.9,319.6 979.4,317.3 979.9,319.6 980.4,317.1 980.9,320 981.4,317.2 981.9,319.6 982.4,317.5 982.9,319.8 983.4,317.3 983.9,319 984.4,317.1 984.9,319.7 985.4,317.5 985.9,320 986.4,317.8 986.9,319.1 987.4,317 987.9,319.4 988.4,317.8 988.9,319.3 989.4,317.2 989.9,319.9 990.4,317.7 990.9,319.2 991.4,318 991.9,320 992.4,317.2 992.9,319.9 993.4,317.9 993.9,319.9 994.4,318 994.9,319 995.4,317.4 995.9,320 996.4,317.5 996.9,319.6 997.4,317.2 997.9,319.1 998.4,317.9 998.9,319.2 999.4,317.6 999.9,319.4 1000.4,317.8 1000.9,319.9 1001.4,317.4 1001.9,319.6 1002.4,317.4 1002.9,319.1 1003.4,318 1003.9,319.8 1004.4,318 1004.9,319.4 1005.4,317.1 1005.9,319.8 1006.4,317.1 1006.9,319.1 1007.4,317.7 1007.9,319.5 1008.4,318.1 1008.9,319.3 1009.4,317.8 1009.9,319.1 1010.4,317.3 1010.9,319.4 1011.4,317.1 1011.9,319.2 1012.4,317.2 1012.9,319.9 1013.4,317.3 1013.9,319.3 1014.4,318.1 1014.9,318.9 1015.4,317.7 1015.9,319.4 1016.4,318 1016.9,319.5 1017.4,317.3 1017.9,319.4 1018.4,317.4 1018.9,319.8 1019.4,317.4 1019.9,319.4 1020.4,317.2 1020.9,319.5 1021.4,317.4 1021.9,318.9 1022.4,317.6 1022.9,319.6 1023.4,317.7 1023.9,319.5 1024.4,317.2 1024.9,319.7 1025.4,317.2 1025.9,319.8 1026.4,317.8 1026.9,318.9 1027.4,317.6 1027.9,319.7 1028.4,317.8 1028.9,319.7 1029.4,318 1029.9,319.2 1030.4,317.2 1030.9,319.4 1031.4,317.7 1031.9,319.7 1032.4,317.8 1032.9,319.6 1033.4,318 1033.9,319 1034.4,317.5 1034.9,319.3 1035.4,317.8 1035.9,319.1 1036.4,317.9 1036.9,319.4 1037.4,317.6 1037.9,319.2 1038.4,317.4 1038.9,319.7 1039.4,317.2 1039.9,319 1040.4,317.5 1040.9,319.4 1041.4,317.7 1041.9,319.7 1042.4,318 1042.9,319.6 1043.4,317.8 1043.9,319.4 1044.4,317.7 1044.9,319.3 1045.4,317.3 1045.9,319.2 1046.4,317.5 1046.9,319.7 1047.4,317.9 1047.9,319.6 1048.4,318.1 1048.9,319.2 1049.4,317.5 1049.9,319.1 1050.4,318 1050.9,319.2 1051.4,318 1051.9,319.5 1052.4,317.6 1052.9,319.1 1053.4,318.1 1053.9,319.5 1054.4,318 1054.9,319.5 1055.4,317.3 1055.9,319.4 1056.4,317.8 1056.9,319.6 1057.4,317.6 1057.9,319.2 1058.4,317.3 1058.9,319.2 1059.4,318 1059.9,318.9 1060.4,317.8 1060.9,319.1 1061.4,317.9 1061.9,319.3 1062.4,317.9 1062.9,319.5 1063.4,318.1 1063.9,319.3 1064.4,318.2 1064.9,318.9 1065.4,317.7 1065.9,319.6 1066.4,318.1 1066.9,319.6 1067.4,317.7 1067.9,319.2 1068.4,317.6 1068.9,319 1069.4,317.9 1069.9,319 1070.4,317.9 1070.9,318.9 1071.4,317.5 1071.9,319.3 1072.4,318.1 1072.9,318.9 1073.4,317.4 1073.9,318.9 1074.4,318 1074.9,319.4 1075.4,317.6 1075.9,319.2 1076.4,317.6 1076.9,318.8 1077.4,317.9 1077.9,319.2 1078.4,317.8 1078.9,319.2 1079.4,318 1079.9,319.6 1080.4,317.8 1080.9,319.3 1081.4,318 1081.9,319.4 1082.4,317.4 1082.9,319.4 1083.4,318.1 1083.9,319.4 1084.4,318.1 1084.9,319.4 1085.4,317.6 1085.9,319.5 1086.4,317.5 1086.9,319.4 1087.4,317.9 1087.9,319.5 1088.4,318.2 1088.9,318.9 1089.4,317.6 1089.9,319.2 1090.4,318.1 1090.9,319 1091.4,317.5 1091.9,318.9 1092.4,317.6 1092.9,318.9 1093.4,317.9 1093.9,318.9 1094.4,318.2 1094.9,319 1095.4,317.6 1095.9,318.8 1096.4,317.7 1096.9,319.2 1097.4,317.7 1097.9,318.9 1098.4,317.6 1098.9,319.1 1099.4,317.5 1099.9,319.2 1100.4,317.6 1100.9,319 1101.4,317.5 1101.9,319.5 1102.4,317.6 1102.9,318.9 1103.4,317.6 1103.9,319.1 1104.4,317.7 1104.9,319.5 1105.4,317.7 1105.9,319.1 1106.4,318.2 1106.9,319.1 1107.4,317.6 1107.9,319.4 1108.4,318.1 1108.9,319.5 1109.4,317.7 1109.9,318.9 1110.4,318.2 1110.9,319 1111.4,317.7 1111.9,319.4 1112.4,317.7 1112.9,319 1113.4,317.6 1113.9,319 1114.4,318 1114.9,319 1115.4,317.9 1115.9,319.3 1116.4,318 1116.9,319 1117.4,318.1 1117.9,319.3 1118.4,317.9 1118.9,319.1 1119.4,317.8 1119.9,319.5 1120.4,318.2 1120.9,319 1121.4,317.9 1121.9,319 1122.4,317.6 1122.9,319.3 1123.4,317.7 1123.9,319.1 1124.4,317.8 1124.9,319.3 1125.4,317.7 1125.9,319.4 1126.4,318.2 1126.9,318.9 1127.4,318.1 1127.9,319 1128.4,318.2 1128.9,318.8 1129.4,317.7 1129.9,319 1130.4,317.6 1130.9,318.8 1131.4,317.8 1131.9,319 1132.4,317.9 1132.9,319.4 1133.4,318.2 1133.9,319.3 1134.4,317.8 1134.9,318.9 1135.4,317.9 1135.9,319.2 1136.4,317.7 1136.9,318.9 1137.4,318.1 1137.9,319.3 1138.4,317.7 1138.9,319.4 1139.4,318.2 1139.9,319.3 1140.4,318 1140.9,319 1141.4,318 1141.9,319.2 1142.4,317.9 1142.9,319.3 1143.4,317.7 1143.9,318.9 1144.4,318.1 1144.9,319.2 1145.4,318.1 1145.9,318.8 1146.4,317.8 1146.9,318.9 1147.4,317.8 1147.9,319.2 1148.4,317.7 1148.9,319.1 1149.4,318.1 1149.9,319 1150.4,317.9 1150.9,319.2 1151.4,318.2 1151.9,319.3 1152.4,318.2 1152.9,319.1 1153.4,318 1153.9,319 1154.4,317.9 1154.9,318.8 1155.4,318.2 1155.9,319.3 1156.4,318.1 1156.9,319.1 1157.4,318 1157.9,318.9 1158.4,317.9 1158.9,319.1 1159.4,317.7 1159.9,319.2 1160.4,317.8 1160.9,319.2 1161.4,317.8 1161.9,318.8 1162.4,318.1 1162.9,319 1163.4,317.8 1163.9,318.8 1164.4,318 1164.9,319.3 1165.4,318.2 1165.9,319.2 1166.4,317.9 1166.9,318.9 1167.4,317.7 1167.9,319.2 1168.4,318.1 1168.9,319 1169.4,317.9 1169.9,318.8 1170.4,318 1170.9,319.2 1171.4,318 1171.9,319.2 1172.4,317.9 1172.9,319.1 1173.4,318 1173.9,319.2 1174.4,318 1174.9,318.9 1175.4,317.9 1175.9,318.7" fill="none" stroke="#808080" stroke-width="1.0" stroke-linejoin="round"/>
<rect x="140.5" y="96.5" width="1036" height="85" fill="none" stroke="#000" stroke-width="1" stroke-dasharray="4 2"/>
<path d="M463.5 96 V232 M471.5 96 V232" stroke="#000" stroke-width="1" stroke-dasharray="4 2" fill="none"/>
<rect x="140.5" y="96.5" width="12" height="21" fill="#fff" stroke="#000" stroke-width="1"/>
<rect x="140.5" y="188.5" width="13" height="21" fill="#fff" stroke="#000" stroke-width="1"/>
<rect x="140.5" y="280.5" width="11" height="21" fill="#fff" stroke="#000" stroke-width="1"/>
<rect x="142" y="117" width="1" height="249" fill="#f00"/>
<rect x="142" y="209" width="1" height="72" fill="#f00"/><rect x="142" y="301" width="1" height="65" fill="#f00"/>
<rect x="467" y="96" width="1" height="136" fill="#a80000"/>
<rect x="465" y="232" width="1" height="134" fill="#0000a0"/>
<rect x="721" y="96" width="1" height="136" fill="#a80000"/>
<rect x="722" y="232" width="1" height="134" fill="#0000a0"/>
<linearGradient id="gChk" x1="0" y1="0" x2="1" y2="1"><stop offset="0" stop-color="#30e020"/><stop offset="1" stop-color="#0a9a0a"/></linearGradient>
<path d="M20.6 391.6 L24.2 390.4 L28.2 399 L44.9 389 L29.4 403.2 L26.4 407 Z" fill="#14c814" stroke="#0c960c" stroke-width="0.9" stroke-linejoin="round"/>
<radialGradient id="gX" cx="0.5" cy="0.35" r="0.7"><stop offset="0" stop-color="#e04040"/><stop offset="0.7" stop-color="#b00808"/><stop offset="1" stop-color="#8a0000"/></radialGradient>
<circle cx="73" cy="398" r="11.5" fill="url(#gX)" stroke="#800000" stroke-width="0.8"/>
<path d="M67.5 392.5 L78.5 403.5 M78.5 392.5 L67.5 403.5" stroke="#fff" stroke-width="4" stroke-linecap="butt"/>
<path d="M103 390.5 H117 L124 398.2 L117 406 H103 Z" fill="#000"/>
<path d="M107.8 394.6 L115 402.2 M115 394.6 L107.8 402.2" stroke="#fff" stroke-width="2.8"/>
<clipPath id="lc"><rect x="140" y="444" width="1021" height="289"/></clipPath>
<g clip-path="url(#lc)">
<path d="M143.5 444 V733" stroke="#000" stroke-opacity="0.19" stroke-width="1" stroke-dasharray="4 2" fill="none"/>
<path d="M254.5 444 V733" stroke="#000" stroke-opacity="0.19" stroke-width="1" stroke-dasharray="4 2" fill="none"/>
<path d="M365.5 444 V733" stroke="#000" stroke-opacity="0.19" stroke-width="1" stroke-dasharray="4 2" fill="none"/>
<path d="M475.5 444 V733" stroke="#000" stroke-opacity="0.19" stroke-width="1" stroke-dasharray="4 2" fill="none"/>
<path d="M586.5 444 V733" stroke="#000" stroke-opacity="0.19" stroke-width="1" stroke-dasharray="4 2" fill="none"/>
<path d="M697.5 444 V733" stroke="#000" stroke-opacity="0.19" stroke-width="1" stroke-dasharray="4 2" fill="none"/>
<path d="M808.5 444 V733" stroke="#000" stroke-opacity="0.19" stroke-width="1" stroke-dasharray="4 2" fill="none"/>
<path d="M919.5 444 V733" stroke="#000" stroke-opacity="0.19" stroke-width="1" stroke-dasharray="4 2" fill="none"/>
<path d="M1030.5 444 V733" stroke="#000" stroke-opacity="0.19" stroke-width="1" stroke-dasharray="4 2" fill="none"/>
<path d="M1141.5 444 V733" stroke="#000" stroke-opacity="0.19" stroke-width="1" stroke-dasharray="4 2" fill="none"/>
<rect x="442" y="444" width="1" height="36" fill="#f00"/>
<rect x="140" y="462.5" width="65" height="1" fill="#e6e6fa"/>
<path d="M205,463 207,463 209,463 211,462.9 213,463.1 215,463.1 217,463.1 219,462.9 221,463 223,462.9 225,462.9 227,463.2 229,463.2 231,462.8 233,463.1 235,463 237,463 239,462.9 241,463.1 243,463 245,463.1 247,463.1 249,462.9 251,463.1 253,463.2 255,463.2 257,463 259,462.8 261,462.8 263,462.9 265,463.2 267,462.9 269,462.9 271,463.2 273,462.9 275,463 277,463 279,462.8 281,463 283,463.1 285,462.9 287,462.9 289,463 291,462.8 293,463 295,463.1 297,463.1 299,463 301,463.1 303,462.9 305,463 307,462.9 309,463 311,462.8 313,463.1 315,462.8 317,462.9 319,463.1 321,463.2 323,463 325,463 327,462.9 329,462.9 331,463 333,462.9 335,462.8 337,463 339,462.9 341,463.1 343,463.1 345,463.1 347,463 349,462.9 351,463 353,462.8 355,463.1 357,462.9 359,462.9 361,462.8 363,463 365,463 367,463 369,463.1 371,463.1 373,462.9 375,463 377,463.2 379,463 381,463 383,462.8 385,463 387,463 389,463 391,463 393,463 395,463 397,463 399,462.9 401,463 403,463.2 405,463 407,462.8 409,462.8 411,463 413,462.8 415,462.8 417,462.8 419,463 421,463.2 423,463 425,463 427,463 429,463 431,463 433,463.1 435,463.2 437,463.1 439,463 441,463.1 443,463.2 445,462.9 447,462.9 449,463 451,463.1 453,463.1 455,463 457,463.1 459,463 461,463.1 463,463.2 465,463 467,463.1 469,463.1 471,463.2 473,462.8 475,463.2 477,463.1 479,463.2 481,463.2 483,462.9 485,463.1 487,462.9 489,463 491,463.2 493,462.9 495,462.9 497,462.8 499,462.9 501,462.9 503,462.8 505,463.2 507,463.2 509,463 511,463.1 513,463.1 515,463 517,463 519,463.1 521,463 523,462.9 525,462.9 527,463.1 529,463.1 531,462.9 533,463 535,463.1 537,463.1 539,463.1 541,462.8 543,463 545,462.8 547,462.8 549,462.9 551,463 553,463.1 555,463.1 557,462.9 559,463.1 561,463 563,463 565,462.9 567,463 569,462.9 571,463.1" fill="none" stroke="#939397" stroke-width="1.0" stroke-linejoin="round"/>
<path d="M571,463.1 573.1,459.6 573.6,467.8 574.1,459.8 574.5,469.9 574.9,457.1 575.2,465.8 575.6,458.7 576,465 576.4,456.5 576.8,469.6 577.5,459.7 577.7,464.6 578.2,458.9 578.7,468.3 579.1,461.4 579.6,467.1 579.8,458.7 580.4,467.3 580.8,461.4 581.1,465.8 581.4,460.2 582,467.8 582.3,456.3 582.8,468.5 583.1,459.7 583.8,464.9 584.1,458.8 584.4,468.2 584.8,461.5 585.2,469.1 585.7,458.9 586,469 586.5,460 587,464.8 587.5,459.9 588,464.8 588.3,460.1 588.6,465.7 589,461.4 589.5,465.3 589.9,457.7 590.4,466.8 590.7,461.7 591.1,467.1 591.7,460 592,464.9 592.6,461.3 593,464.4 593.3,458.3 593.7,467.1 594.1,457.5 594.7,465 595,461.1 595.4,465.5 595.7,461.8 596.4,467 596.5,460.8 597.1,466.4 597.4,460 597.9,465.6 598.3,459.8 598.6,465.2 599.2,461.5 599.6,464.2 599.9,461.8 600.5,467 600.9,459.8 601.4,465.6 601.8,460 602.1,464.6 602.7,460.8 602.9,466.3 603.3,458.9 603.8,464.1 604.3,458.7 604.7,464.9 605,460.5 605.4,464.7 605.9,459.9 606.2,465.7 606.9,461.2 607.2,465.3 607.6,460.5 608.1,466.6 608.6,461.8 608.9,465.2 609.3,458.8 609.6,464.1 610.2,461.3 610.6,465 610.9,458.8 611.5,464.9 611.9,460 612.4,467.2 612.7,459.7 613.1,464.2 613.4,459.3 613.8,464.3 614.3,461.7 614.7,464.2 615.2,462.1 615.7,466.3 616,460 616.5,464.1 616.8,462 617.2,464 617.8,462.1 618.2,465.4 618.6,459.2 618.9,466.3 619.4,459 619.7,465.8 620.1,461.1 620.6,465 621.1,459.4 621.5,465.2 621.8,461.5 622.4,464.1 622.8,460.7 623.3,464.1 623.4,460.1 623.9,463.9 624.4,460.5 624.9,464.7 625.1,462 625.6,465.6 626.1,459.2 626.5,464.6 626.9,460.3 627.3,463.9 627.8,461.4 628.2,463.9 628.5,461.5 629.1,465.3 629.3,460.2 629.8,464.7 630.4,461.8 630.8,465 631.1,459.5 631.6,465.8 631.9,460.4 632.3,464.1 632.8,461.9 633.1,464.7 633.6,459.9 634.1,465.8 634.5,460.5 635,465 635.4,460.3 635.9,465.3 636.3,460.4 636.7,464.4 637.1,460.8 637.3,465.9 637.8,461.1 638.1,463.9 638.6,461.7 639.1,465.7 639.6,461.5 640,466 640.4,459.7 640.7,463.9 641.2,462.2 641.5,464.8 642,460.7 642.3,466.1 643,460.1 643.3,463.8 643.7,461.4 644.1,465.1 644.5,461.3 645.1,464.2 645.5,461.6 645.8,464.2 646.2,461.4 646.6,465 647.1,460.5 647.4,465.9 648,460.6 648.2,465.6 648.6,461.1 649.2,466.1 649.5,459.7 650.1,465.7 650.4,460.5 650.9,465.3 651.1,460.7 651.6,465.2 652.1,462.2 652.5,465.8 653.1,461.6 653.3,464.7 653.8,460.4 654.2,464.2 654.6,460.2 655,465.3 655.5,462.3 655.8,464.3 656.4,461 656.9,463.7 657.2,462.2 657.6,463.7 658,460 658.5,465 658.9,461.8 659.1,466.1 659.7,460.3 660.1,464.4 660.6,462.3 661,463.9 661.4,462 661.7,464.4 662.2,461.1 662.5,465.6 663,462.1 663.5,464.6 663.7,461.7 664.3,465 664.6,460.7 665.2,464.7 665.6,461.7 666.1,464.2 666.3,460.8 666.7,464.6 667.2,461.7 667.7,465.6 668.2,461 668.4,463.7 669,462.3 669.2,465.4 669.8,461.8 670.1,464.9 670.6,461.7 670.9,464 671.5,460.9 671.8,463.7 672.2,461.5 672.6,465.8 673.2,461.8 673.7,465.3 674,460.6 674.5,464.9 674.8,462 675.3,464.8 675.6,460.8 676.2,464.4 676.6,460.6 677,464.2 677.3,461.6 677.7,466.3 678.1,461.4 678.5,465.3 678.8,461.4 679.5,464.5 679.8,459.7 680.4,464 680.5,460.7 681,463.8 681.6,459.1 681.9,471.3 682.4,459.6 682.8,466.3 683.1,456.1 683.5,473 683.9,455 684.4,469.6 684.9,454.9 685.4,476.1 685.8,450.2 686.2,478.6 686.7,452.8 686.9,475.6 687.5,453.2 687.7,475.5 688.1,449.6 688.7,474 689,458.7 689.6,477.2 689.9,457 690.4,466.7 690.8,452 691.3,473.2 691.5,456.7 692.1,469.5 692.5,454 692.8,468.4 693.4,455.5 693.8,476.1 694,456.2 694.4,470.8 694.9,455.7 695.3,467.4 695.7,453.2 696.2,474.4 696.7,453.9 697.1,474.4 697.5,459 697.9,474.1 698.4,459.6 698.7,466.9 699.3,459.3 699.7,472.9 700,455.9 700.4,476.4 700.7,451 701.4,471.9 701.6,450.5 702.1,467.1 702.5,458.8 702.9,470.6 703.2,460.1 703.8,466.4 704.1,456.8 704.7,468.3 704.9,454.7 705.5,466 705.7,457.3 706.4,472.3 706.7,452.6 707.1,474.3 707.4,458.3 707.8,466.7 708.5,456.8 708.9,473.6 709.3,455.7 709.7,472.5 710.2,457.5 710.6,472.4 710.9,454.4 711.3,472.8 711.7,460.3 712.1,466.3 712.5,451.9 713.2,467 713.4,456.7 713.8,468.3 714.3,452.7 714.6,468.5 715,456.5 715.5,468.6 715.8,459.2 716.2,473.7 716.9,454.3 717.2,470.5 717.7,460 718.1,466.7 718.4,454.9 718.8,468.1 719.4,460.3 719.7,465.5 720.2,456.3 720.6,467.2 721.1,458.8 721.3,469.3 721.9,455.3 722.2,465.3 722.7,458.8 723.2,466 723.6,455.2 723.9,470.4 724.4,460.1 724.6,470.9 725.1,460.7 725.7,469.8 726,458.6 726.4,469.4 726.9,455.6 727.2,468.1 727.6,460.8 728.2,471.9 728.4,455.7 728.9,468.1 729.4,458.7 729.9,466.5 730.2,458.2 730.6,467.2 731.1,460.2 731.4,467.9 731.8,457.1 732.4,465.4 732.7,455 733.3,468 733.5,456.2 733.9,468.5 734.5,461 734.9,465.1 735.4,458.9 735.7,466.3 736.1,456.2 736.6,466.1 736.9,459.9 737.2,467.3 737.9,456.4 738.1,469.4 738.7,459.4 739.1,466.2 739.4,459.2 740,464.7 740.3,458.2 740.7,468.8 741.2,459.6 741.4,466.1 742.1,458.3 742.4,469.6 742.8,461.5 743.1,468.9 743.8,459.8 744.2,467.5 744.5,459.3 744.8,465.3 745.3,458.9 745.7,468.6 746.1,457.5 746.6,464.5 747,457.6 747.5,467.8 747.9,459.5 748.2,464.6 748.7,460.7 749,468.1 749.7,458.5 749.9,466.3 750.5,459.5 750.9,466.5 751.3,459.1 751.5,468.5 752.2,460.9 752.6,467.8 752.9,461.7 753.2,468.7 753.8,460.9 754.1,464.4 754.6,459.4 754.9,467 755.3,458.7 755.7,467.1 756.3,460.8 756.8,468.6 757.2,460.8 757.7,467.6 758.1,461.1 758.3,466 758.6,459.1 759.1,465.9 759.6,460.4 760,468.2 760.3,460.3 760.9,466.2 761.2,461.1 761.7,467.6 762.1,458.8 762.5,467.9 762.9,461.1 763.4,464.4 763.8,457.7 764.2,466.6 764.8,460.6 765,464.7 765.4,461.5 765.9,467.1 766.2,461.1 766.9,465.6 767.2,460.7 767.7,466.2 768.1,460.7 768.3,464.9 768.9,459.9 769.3,466.8 769.8,460.9 770.1,465.2 770.6,461.6 771.1,464.4 771.3,458.7 771.9,464.2 772.1,459.8 772.7,464.7 773.1,458.4 773.4,465.2 774,460.2 774.4,467.2 774.7,460.8 775.2,464.2 775.6,461.9 776.1,465.5 776.5,459.6 776.9,464.9 777.2,458.4 777.6,464.9 778.2,458.7 778.4,465.8 778.9,458.9 779.5,466.2 779.8,460.4 780.1,467 780.7,459.7 781,464.2 781.4,460.5 782,465.2 782.3,458.9 782.7,465.6 783.2,461.1 783.6,465.9 784.1,459.6 784.4,466.3 785,462 785.1,464.2 785.7,461.7 786,464.9 786.6,458.8 787,464.1 787.4,459.6 787.8,465.5 788.1,459.6 788.5,465.4 788.9,459 789.4,464.7 789.8,459.5 790.2,465.9 790.7,460.4 791.3,464 791.4,460 791.9,464.9 792.4,459.3 792.9,465.2 793.2,461.2 793.6,466.1 794.1,461.9 794.5,465.3 794.9,461.1 795.2,464.1 795.8,460.5 796.2,465.1 796.5,462.1 797.2,464 797.5,460.3 797.7,464 798.3,459.8 798.7,466.6 799.1,461 799.5,466.6 799.9,462.1 800.5,465.6 800.8,459.7 801.1,464.1 801.5,459.5 802.1,464.7 802.5,459.6 803,463.8 803.2,459.6 803.7,465.2 804.1,461.9 804.6,466.1 805,462 805.5,464.1 805.8,462 806.2,465.9 806.7,459.8 807,464.7 807.4,460.5 807.9,466.2 808.5,460.2 808.8,464.9 809.1,462.1 809.5,465.1 809.9,461.2 810.5,464.6 810.9,462.1 811.4,466.1 811.6,460.9 812,466.3 812.5,461.8 812.9,464.3 813.3,462.2 813.9,463.7 814.1,460.4 814.6,463.7 815.1,461.3 815.4,463.8 815.9,460.6 816.5,464.2 816.7,462 817.3,465.3 817.6,461.7 818.1,464.5 818.3,461 818.9,465.5 819.2,461.3 819.7,464.6 820,460.8 820.5,463.7 820.9,460 821.5,463.8 821.9,461.1 822.3,463.7 822.5,460 822.9,464.9 823.6,460.4 824,465.6 824.2,461.6 824.7,464.8 825,461.7 825.5,465.9 826.1,461 826.4,463.8 826.8,461.7 827.1,464.4 827.7,461.3 828.2,464.9 828.5,461.9 829,463.8 829.4,460.5 829.7,464.8 830.1,462.3 830.5,464.1 831,461.4 831.6,465.4 831.8,461.6 832.4,465.7 832.7,461 833.1,463.8 833.6,461.4 834.1,465.7 834.3,462 834.8,465.5 835.3,462 835.8,464.5 836.2,462.3 836.6,465 837,461.4 837.2,463.7 837.8,460.7 838.2,465.5 838.6,460.8 839,464 839.5,461 839.8,465.5 840.4,461.7 840.7,464.8 841.1,462.2 841.6,463.6 841.9,462.1 842.3,463.7 842.9,461.5 843.3,464.3 843.5,461.9 844.1,464.6 844.3,461.1 844.9,465.2 845.2,462.5 845.8,463.7 846.3,462.3 846.7,464.8 846.9,461.2 847.5,464 848,461.1 848.3,464.4 848.6,462.3 849.1,464.2 849.5,461.3 849.9,464.3 850.5,461.4 850.6,464.1 851.2,462.5 851.5,463.8 852,461.8 852.4,465 853,462.3 853.2,463.7 853.8,461.5 854.2,463.8 854.5,461.2 855,463.7 855.4,461.7 855.7,465.1 856.1,461.5 856.5,463.8 857,462.4 857.4,464 857.8,461.9 858.2,464.3 858.7,462.5 859,464.2 859.5,462.3 859.9,465 860.5,461.3 860.8,463.8 861.2,461.8 861.6,463.9 862,461.8 862.5,463.9 862.9,460.8 863.4,464.9 863.8,462.5 864.1,463.6 864.6,461.4 865.2,464.7 865.5,461.1 865.9,464.4 866.2,462.1 866.7,465.1 867.2,462.5 867.6,464 867.9,462.3 868.4,463.6 868.7,461.2 869.3,464.9 869.6,461.1 870.2,463.8 870.5,462.3 870.8,464.1 871.2,461.6 871.9,464.6 872.2,461.8 872.7,463.8 873.1,462.5 873.4,464.9 873.9,462.1 874.4,464.7 874.8,462.5 875.1,464.6 875.5,462 875.9,464.2 876.5,462.4 876.9,464.8 877.4,462.6 877.7,463.9 878.1,461.6 878.4,463.5 878.9,462.4 879.3,463.7 879.7,462.3 880,464.4 880.5,461.4 881,463.6 881.5,461.8 882,464.1 882.5,462.4 883,464.6 883.5,461.5 884,463.8 884.5,462.3 885,464.4 885.5,461.8 886,463.6 886.5,461.4 887,463.9 887.5,461.9 888,464.4 888.5,461.7 889,464.1 889.5,462.4 890,463.8 890.5,461.8 891,464 891.5,462.4 892,464.3 892.5,461.7 893,464.4 893.5,462.1 894,464.2 894.5,462.4 895,463.9 895.5,461.8 896,463.7 896.5,462.1 897,464 897.5,462 898,463.7 898.5,462.3 899,463.7 899.5,462.2 900,464.1 900.5,462.4 901,463.8 901.5,461.7 902,464.3 902.5,461.9 903,464.4 903.5,461.8 904,463.8 904.5,461.6 905,463.6 905.5,461.9 906,464.5 906.5,462.4 907,463.7 907.5,462.1 908,464 908.5,462.3 909,463.5 909.5,462.3 910,464 910.5,461.9 911,464.2 911.5,462.2 912,463.8 912.5,462.4 913,463.5 913.5,462.4 914,463.7 914.5,462 915,464 915.5,462.5 916,463.4 916.5,462.3 917,463.8 917.5,462 918,464.3 918.5,462.4 919,464.2 919.5,462.5 920,463.8 920.5,461.8 921,463.6 921.5,462 922,463.5 922.5,461.7 923,463.9 923.5,461.8 924,463.4 924.5,462.5 925,463.7 925.5,462.3 926,464 926.5,462.6 927,464.1 927.5,462.1 928,463.8 928.5,462.6 929,463.5 929.5,462.2 930,464.1 930.5,462.1 931,463.8 931.5,461.9 932,463.6 932.5,462.3 933,463.7 933.5,462.4 934,464 934.5,462.2 935,464 935.5,462.3 936,464 936.5,462 937,463.9 937.5,462.1 938,463.4 938.5,461.8 939,463.5 939.5,461.9 940,464 940.5,462.3 941,463.8 941.5,462.3 942,464 942.5,462 943,463.5 943.5,462.1 944,463.7 944.5,462.2 945,463.4 945.5,462.4 946,463.5 946.5,461.9 947,463.7 947.5,462 948,463.3 948.5,462.5 949,463.7 949.5,462.2 950,463.4 950.5,462.6 951,463.4 951.5,462.2 952,463.7 952.5,462.2 953,463.3 953.5,462.1 954,463.6 954.5,462.5 955,463.5 955.5,461.9 956,463.6 956.5,462.4 957,463.7 957.5,462.5 958,463.4 958.5,462 959,464 959.5,462.6 960,463.5 960.5,462.6 961,463.4 961.5,462.1 962,464 962.5,462.6 963,463.9 963.5,462.2 964,463.9 964.5,462.6 965,463.5 965.5,461.9 966,463.4 966.5,462.4 967,463.9 967.5,462.1 968,463.9 968.5,462.5 969,463.6 969.5,462.2 970,463.8 970.5,462.4 971,463.5 971.5,462.5 972,463.8 972.5,462.6 973,463.4 973.5,462.2 974,463.5 974.5,462.1 975,463.8 975.5,462.2 976,463.9 976.5,462.1 977,464 977.5,462.2 978,463.7 978.5,462.4 979,463.5 979.5,462.6 980,463.5 980.5,462.6 981,463.5 981.5,462.5 982,463.6 982.5,462.6 983,463.5 983.5,462.1 984,463.8 984.5,462.3 985,463.8 985.5,462.1 986,463.3 986.5,462.5 987,463.8 987.5,462.5 988,463.7 988.5,462.2 989,463.6 989.5,462.1 990,463.9 990.5,462.1 991,463.8 991.5,462.5 992,463.8 992.5,462.4 993,463.8 993.5,462.1 994,463.6 994.5,462.5 995,463.9 995.5,462.3 996,463.7 996.5,462.5 997,463.5 997.5,462.4 998,463.6 998.5,462.4 999,463.4 999.5,462.5 1000,463.4 1000.5,462.3 1001,463.3 1001.5,462.4 1002,463.8 1002.5,462.2 1003,463.5 1003.5,462.6 1004,463.7 1004.5,462.5 1005,463.6 1005.5,462.3 1006,463.8 1006.5,462.1 1007,463.5 1007.5,462.5 1008,463.3 1008.5,462.6 1009,463.7 1009.5,462.5 1010,463.3 1010.5,462.5 1011,463.4 1011.5,462.2 1012,463.6 1012.5,462.3 1013,463.6 1013.5,462.4 1014,463.4 1014.5,462.6 1015,463.8 1015.5,462.4 1016,463.3 1016.5,462.6 1017,463.8 1017.5,462.2 1018,463.9 1018.5,462.7 1019,463.5 1019.5,462.3 1020,463.3 1020.5,462.3 1021,463.6 1021.5,462.6 1022,463.8 1022.5,462.4 1023,463.8 1023.5,462.3 1024,463.8 1024.5,462.7 1025,463.5 1025.5,462.3 1026,463.5 1026.5,462.4 1027,463.6 1027.5,462.2 1028,463.4 1028.5,462.4 1029,463.3 1029.5,462.7 1030,463.8 1030.5,462.3 1031,463.8 1031.5,462.5 1032,463.4 1032.5,462.4 1033,463.7 1033.5,462.7 1034,463.6 1034.5,462.5 1035,463.7 1035.5,462.4 1036,463.5 1036.5,462.6 1037,463.3 1037.5,462.5" fill="none" stroke="#808080" stroke-width="1.0" stroke-linejoin="round"/>
<path d="M1037.5,462.5 1038,463.2 1040,462.8 1042,463 1044,463 1046,463 1048,463 1050,463.2 1052,462.9 1054,463.1 1056,463 1058,463.1 1060,462.8 1062,462.8 1064,463.2 1066,463.1 1068,462.9 1070,463 1072,463.1 1074,463.1 1076,463 1078,463 1080,462.9 1082,463.1 1084,463.2 1086,463 1088,463 1090,462.8 1092,463 1094,462.9 1096,463 1098,463.1 1100,463.2 1102,463.2 1104,463 1106,463 1108,463.2 1110,463.2 1112,463 1114,462.9 1116,462.9 1118,463.1 1120,462.8 1122,463.1 1124,463.1 1126,462.9 1128,462.8 1130,463 1132,463.1 1134,462.8 1136,463.2 1138,463 1140,463.1 1142,463.1 1144,463.1 1146,462.8 1148,462.8 1150,463 1152,463 1154,463 1156,462.9 1158,462.9 1160,463.2" fill="none" stroke="#939397" stroke-width="1.0" stroke-linejoin="round"/>
<rect x="442" y="482" width="1" height="36" fill="#f00"/>
<rect x="140" y="498.5" width="65" height="1" fill="#e6e6fa"/>
<path d="M205,499 207,499 209,499.2 211,499 213,499 215,499 217,498.9 219,499 221,499.1 223,499.1 225,498.8 227,498.9 229,498.8 231,499.1 233,499.1 235,498.8 237,499.2 239,499.2 241,499.1 243,499 245,498.9 247,498.8 249,499 251,498.8 253,498.9 255,498.9 257,498.8 259,499 261,499 263,499.1 265,499 267,499.1 269,499 271,499.1 273,499 275,498.9 277,499.2 279,499.2 281,499.1 283,499.1 285,498.9 287,498.9 289,498.9 291,498.8 293,499.1 295,499 297,499.1 299,499 301,499.2 303,499.1 305,498.8 307,498.9 309,499.2 311,499 313,499.2 315,499 317,498.8 319,499.1 321,499.1 323,498.9 325,498.8 327,498.9 329,499.2 331,499.1 333,498.8 335,498.9 337,498.8 339,498.8 341,499.1 343,498.9 345,499 347,499 349,498.9 351,499.1 353,498.9 355,499.1 357,498.8 359,499 361,498.9 363,498.9 365,499.2 367,499.1 369,498.9 371,499.2 373,498.9 375,499 377,499.1 379,499.1 381,498.8 383,499.2 385,498.9 387,498.9 389,499.1 391,498.9 393,498.9 395,498.8 397,498.8 399,499 401,498.9 403,499 405,498.9 407,499 409,499.2 411,499 413,499 415,499.1 417,498.9 419,498.9 421,499.2 423,499.1 425,498.9 427,498.9 429,499.1 431,499.2 433,498.9 435,499.2 437,499.2 439,499 441,499 443,498.8 445,498.8 447,499.2 449,498.9 451,499.1 453,498.9 455,499.1 457,499 459,498.9 461,498.9 463,499.1 465,498.8 467,498.9 469,499 471,499.1 473,499 475,498.9 477,499.2 479,498.9 481,498.8 483,498.9 485,499 487,498.8 489,498.9 491,498.9 493,499 495,498.9 497,498.9 499,499.2 501,499.2 503,499.1 505,499.1 507,499 509,498.9 511,498.8 513,498.8 515,499.2 517,499.1 519,499.2 521,498.8 523,499.1 525,499 527,499.1 529,498.9 531,499.2 533,498.8 535,499 537,499.1 539,499.2 541,499.1 543,499.1 545,499.1 547,499.2 549,498.9 551,499.1 553,499.2 555,499.1 557,499 559,499.1 561,499.1 563,499 565,499 567,499 569,499 571,499 573,498.8 575,499.1 577,499.2 579,499.2 581,499.1 583,499 585,499.1 587,499 589,499 591,499.1 593,498.8 595,499.1" fill="none" stroke="#939397" stroke-width="1.0" stroke-linejoin="round"/>
<path d="M595,499.1 597.1,497.1 597.6,502 597.9,493.9 598.5,501.2 599,497.3 599.4,501.9 599.6,495 600.2,503.8 600.5,496.4 600.9,500.6 601.4,493.9 601.7,501.1 602.1,496.9 602.6,502.8 603.2,494 603.3,500.5 603.9,497.6 604.4,501.3 604.7,497.4 605.1,503.9 605.6,497.7 606,502.7 606.4,493.4 606.7,501.9 607.3,496.2 607.6,500.9 608.1,496 608.6,501.5 609,497.6 609.3,500.5 609.7,494.1 610.3,503.7 610.6,496.4 611.1,502.8 611.3,495.3 612,504 612.2,495 612.6,503.3 613.1,496.6 613.4,501.5 614,497.8 614.5,500.9 614.8,497.7 615.3,502.9 615.8,496.6 616.1,500.5 616.5,495.7 616.9,502.7 617.4,497.1 617.8,500.4 618.2,496.7 618.6,501.3 619.1,498.1 619.5,500.8 619.9,496.9 620.2,501.2 620.6,495.3 621.1,500.1 621.5,495.5 622,500.2 622.4,498 622.7,500.2 623.1,497.5 623.7,500 624,497 624.4,501.1 624.9,497.3 625.3,500.2 625.8,497 626,502.2 626.7,496 627.1,500.4 627.5,495.4 627.9,500.2 628.3,498.1 628.5,501.8 628.9,496.6 629.6,501.4 629.9,498.1 630.4,500.8 630.6,498.2 631.2,501 631.5,498 632.2,501.8 632.3,498.1 632.9,500.7 633.3,497.3 633.5,501 634,496.2 634.5,501.4 635,498.1 635.5,501.9 635.8,496.2 636.2,501 636.6,496.5 637.1,501.3 637.6,497.6 638,501.2 638.4,497.6 638.7,500.2 639.2,497.7 639.7,500 640,497.8 640.4,500.7 640.9,497.1 641.1,501.9 641.6,496.8 642,499.7 642.4,498.2 642.9,500.7 643.5,497.3 643.6,501.4 644.1,496.7 644.6,499.8 645.1,497.5 645.4,501.8 645.8,497.2 646.3,501 646.6,496.9 647,500 647.5,496.9 647.8,501.2 648.3,496.2 648.8,500.4 649.2,498 649.6,501.1 650.1,496.6 650.5,500.9 650.9,498.3 651.4,500.4 651.8,498 652.2,501.3 652.7,496.2 653.1,499.8 653.4,497.2 653.9,501 654.3,497.1 654.8,500 655,496.5 655.5,500 656,498.3 656.4,499.7 656.8,497.2 657.2,499.9 657.5,496.6 658.1,501.3 658.4,498.1 658.9,501.3 659.3,496.2 659.9,501.1 660,497.8 660.4,499.7 661,497.5 661.3,501.2 661.7,497.1 662.3,501.1 662.6,498.2 663,500.2 663.6,497.3 663.9,501.6 664.3,497.9 664.9,501.6 665.1,497.8 665.6,500.2 666.1,497.4 666.5,501.3 667,496.9 667.3,499.6 667.8,497.4 668,501.2 668.4,496.8 669.1,501.1 669.3,497.3 669.7,500.8 670.2,496.9 670.6,500.2 671.1,497.1 671.6,501 672,497.7 672.4,501.4 672.9,496.6 673.2,500.5 673.6,497.7 674.2,501 674.3,498.2 675,500 675.2,498 675.6,501.1 676.1,497.6 676.4,499.6 676.9,498.1 677.3,500.7 677.7,498 678.2,500 678.6,497.6 679,501.5 679.5,496.4 680,499.6 680.3,497.8 680.9,500 681,498.1 681.7,500.1 681.9,497.3 682.3,500 682.9,497.5 683.3,499.9 683.5,496.9 684.2,501.3 684.6,498.1 684.9,500.4 685.5,497.4 685.7,501.1 686.3,498.3 686.6,500.5 687,496.8 687.4,499.6 687.8,497.1 688.3,499.7 688.8,496.4 689.1,499.6 689.6,498.1 690.1,499.6 690.4,498.2 690.8,500.1 691.2,497.9 691.6,499.9 692.2,498 692.4,500.9 692.8,498.3 693.4,500.8 693.9,497.8 694.1,499.7 694.6,498.3 695,501.3 695.5,497.3 695.8,500.1 696.2,498.4 696.8,501.5 697,497.4 697.6,500 698,497.9 698.4,501.1 698.9,497 699.2,500.1 699.8,497.2 700.2,500.8 700.5,496.6 700.8,499.6 701.3,497.2 701.7,500.1 702,496.5 702.6,500.4 703.1,498.1 703.4,501.1 703.8,496.9 704.3,499.8 704.7,498.2 705,499.6 705.6,496.6 706,500.7 706.4,497.5 706.8,499.8 707.2,497.9 707.5,500.3 708.1,498 708.3,500.6 708.9,497.5 709.3,500.6 709.7,497.1 710.2,501.1 710.6,497.8 711,500.4 711.3,496.6 711.9,500.9 712.3,497.4 712.5,500.7 713.1,497.7 713.5,499.7 713.9,498 714.2,500 714.8,496.1 715.3,500.4 715.6,495 716.1,501 716.6,493.4 716.8,503.2 717.4,495.6 717.6,505.4 718,495.6 718.5,504.6 718.9,484.3 719.5,504.7 719.9,494.2 720.1,507 720.5,483 721.2,504 721.5,494.7 722,514.1 722.4,494.4 722.6,507 723.2,492.8 723.5,503.8 724,486.3 724.4,513 725,493.1 725.3,504.5 725.7,484 726,507.3 726.4,493.6 726.9,502.6 727.3,494.1 727.9,503.3 728.2,495.8 728.7,505 729,495 729.5,504.6 729.9,491.9 730.3,507.9 730.8,495.2 731.1,506.8 731.6,489.4 732,503.1 732.4,491.8 732.9,506.3 733.1,488.8 733.6,501.6 734,493.5 734.6,501.7 735,492.8 735.3,502 735.8,494.9 736.2,502.7 736.5,490.7 737.1,501.8 737.3,491.1 737.8,503.2 738.3,496.7 738.6,508.4 739,492 739.4,507.2 739.9,495.6 740.5,501 740.7,492.5 741.1,504 741.6,490.8 742.1,507.6 742.5,495.2 742.9,502.3 743.4,493.8 743.8,502.8 744.1,492.4 744.6,501.5 744.9,496.4 745.4,502.1 745.9,493.4 746.1,502.5 746.6,495.6 747,501.4 747.6,491.6 747.8,502.3 748.4,495.7 748.6,506.1 749.1,495.6 749.7,502 750,497.2 750.3,500.8 750.8,497.3 751.2,503.2 751.8,496.4 752,501.1 752.5,493.8 752.9,505.3 753.3,496.1 753.8,500.6 754.4,493.3 754.8,503.8 755.1,494.2 755.4,505 755.9,497.3 756.3,500.6 756.7,495.4 757.2,502 757.5,494.6 758,501.5 758.5,495.3 758.7,503.4 759.1,496.4 759.7,500.5 760.1,495.8 760.5,500.4 760.9,495.4 761.4,500.9 761.7,493.2 762.3,504.7 762.6,495.2 763.1,501.1 763.6,496.5 763.9,500.6 764.5,496.6 764.6,500.7 765,497.1 765.5,501.5 766,495.4 766.5,502.2 766.8,496.8 767.3,501.1 767.8,495.3 768.1,500.5 768.5,496 768.9,502.9 769.3,497.3 769.7,501.7 770.1,497.8 770.6,500.3 770.9,496.5 771.3,503.3 772,496.4 772.2,502.5 772.7,497.1 773.2,503 773.6,496.8 774.1,502.9 774.4,497 774.7,500.4 775.4,494.6 775.6,502.2 776.2,497 776.6,500.1 776.8,497.9 777.2,503.5 777.8,498 778.1,500.9 778.5,495.3 779.1,501.8 779.5,497.1 779.7,502.5 780.4,497.9 780.6,501.2 781.1,498 781.5,501.7 781.9,496.9 782.2,500 782.7,497.4 783.4,501.1 783.6,495.5 784,502.3 784.5,496.8 785,500.4 785.3,495 785.6,501.9 786,497.9 786.6,500.6 786.8,496.9 787.3,502.6 787.9,495.9 788.3,500.7 788.8,496.1 789.1,502.5 789.6,497.7 789.8,501.2 790.4,497.5 790.8,500.5 791.3,497.7 791.6,499.9 792.1,497.9 792.4,501.4 792.8,498 793.3,499.8 793.7,497.7 794.2,500.1 794.4,496.5 795.1,500.6 795.5,497.5 795.9,500.2 796.1,497.7 796.5,502.2 797.1,497.6 797.6,501 797.9,497 798.4,499.8 798.8,497.5 799.1,500.3 799.6,497.2 800,500.9 800.6,497.2 801,500.5 801.3,497.9 801.8,500.3 802.1,496.1 802.6,501.5 803,496.6 803.2,501.9 803.7,496.9 804.2,500.4 804.6,498.1 805.1,499.7 805.4,497.5 806,501.5 806.4,496.4 806.6,500.2 807.3,497.8 807.5,499.8 808,496.6 808.6,499.7 808.9,497.2 809.3,499.9 809.6,498.4 810,500.8 810.4,497.1 810.9,500.9 811.5,498.3 811.7,500.1 812.3,497.1 812.6,500 813,497.2 813.4,500.2 813.8,496.4 814.3,499.9 814.6,496.6 815.1,500.8 815.6,497.8 815.8,500.3 816.4,498 816.9,500 817.2,498.1 817.6,501.4 818.2,497.9 818.5,500.6 818.8,496.7 819.4,500.1 819.9,497.9 820.2,499.6 820.6,497.9 821,500.7 821.6,496.5 821.9,501.1 822.1,496.4 822.7,500.1 823,496.5 823.5,499.7 823.9,498.4 824.4,500.6 824.9,497 825.2,499.7 825.8,496.9 826,499.6 826.4,497.6 826.9,499.9 827.2,497.6 827.7,500.3 828.1,498.2 828.6,499.8 829.1,497.8 829.3,501 829.8,497.7 830.4,501.1 830.6,498.5 831.2,500.7 831.4,497.7 832.1,499.9 832.2,497 832.7,499.6 833.1,496.9 833.7,500.5 834,497.6 834.4,500 834.8,498.2 835.2,500.2 835.6,497.9 836.1,499.5 836.5,498 836.9,500 837.5,498.3 837.8,499.5 838.3,498.5 838.7,499.9 839.1,498.2 839.5,499.9 839.8,497.3 840.3,499.7 840.9,498 841.2,499.8 841.7,496.9 842.1,499.8 842.3,497.6 842.9,499.5 843.3,497 843.8,501 844.2,498.5 844.7,500.4 845,498.5 845.3,500.6 845.7,498 846.1,500.5 846.7,497.3 846.9,499.5 847.5,497 847.9,499.6 848.2,497.3 848.6,500 849.2,498.1 849.6,500 849.9,497.4 850.3,500.2 850.8,498.3 851.3,499.9 851.8,497.8 852.3,500.2 852.8,497.5 853.3,500.1 853.8,497.3 854.3,499.8 854.8,498.2 855.3,499.8 855.8,498.4 856.3,500.3 856.8,498 857.3,500.6 857.8,497.5 858.3,499.7 858.8,497.6 859.3,500.5 859.8,498.5 860.3,500.1 860.8,498.1 861.3,500.3 861.8,497.6 862.3,499.7 862.8,498.3 863.3,499.6 863.8,497.7 864.3,500.5 864.8,497.8 865.3,500.3 865.8,498.2 866.3,499.8 866.8,498.3 867.3,499.7 867.8,498.2 868.3,500 868.8,498.2 869.3,500 869.8,497.6 870.3,500.4 870.8,497.9 871.3,500 871.8,497.8 872.3,499.7 872.8,498.5 873.3,500.3 873.8,498.3 874.3,500.2 874.8,497.5 875.3,499.8 875.8,498.3 876.3,500.4 876.8,497.9 877.3,499.5 877.8,498 878.3,499.8 878.8,497.7 879.3,499.5 879.8,498.5 880.3,500.1 880.8,497.7 881.3,499.5 881.8,498 882.3,499.8 882.8,498.1 883.3,499.9 883.8,498.1 884.3,500 884.8,497.6 885.3,499.7 885.8,498.2 886.3,500.4 886.8,497.6 887.3,500.4 887.8,498.6 888.3,500.1 888.8,498 889.3,499.5 889.8,498.1 890.3,499.5 890.8,497.7 891.3,499.4 891.8,497.8 892.3,500 892.8,497.9 893.3,499.5 893.8,497.8 894.3,499.8 894.8,498.3 895.3,500.1 895.8,498.4 896.3,499.7 896.8,498 897.3,500.2 897.8,498.4 898.3,499.8 898.8,497.9 899.3,500 899.8,498.4 900.3,500.2 900.8,498.4 901.3,499.7 901.8,497.9 902.3,499.9 902.8,498.5 903.3,499.6 903.8,498.2 904.3,499.7 904.8,497.8 905.3,499.5 905.8,497.9 906.3,500.1 906.8,498.3 907.3,500 907.8,498.2 908.3,499.8 908.8,498.3 909.3,499.5 909.8,498.5 910.3,500.2 910.8,498.3 911.3,500 911.8,497.8 912.3,499.9 912.8,497.9 913.3,499.7 913.8,498.3 914.3,500.2 914.8,498.6 915.3,499.4 915.8,498.4 916.3,499.8 916.8,498.2 917.3,499.8 917.8,497.9 918.3,499.4 918.8,498.4 919.3,499.8 919.8,498.5 920.3,499.6 920.8,498 921.3,499.8 921.8,498 922.3,500.1 922.8,497.9 923.3,499.7 923.8,498.6 924.3,499.9 924.8,498.5 925.3,500 925.8,498.3 926.3,499.5 926.8,498.7 927.3,499.5 927.8,498.2 928.3,499.8 928.8,498.4 929.3,499.8 929.8,498.4 930.3,499.6 930.8,498 931.3,500 931.8,498 932.3,500.1 932.8,498.5 933.3,499.5 933.8,498.2 934.3,499.5 934.8,498.6 935.3,499.7 935.8,498.3 936.3,499.6 936.8,498.7 937.3,499.7 937.8,498.2 938.3,499.7 938.8,498.4 939.3,499.5 939.8,498.4 940.3,499.5 940.8,498.1 941.3,499.9 941.8,498.3 942.3,500 942.8,498.4 943.3,499.9 943.8,498.4 944.3,499.4 944.8,498.1 945.3,499.9 945.8,498.2 946.3,499.8 946.8,498.2 947.3,499.5 947.8,498.6 948.3,499.6 948.8,498.5 949.3,499.9 949.8,498.1 950.3,499.7 950.8,498.7 951.3,499.5 951.8,498.6 952.3,499.9 952.8,498.3 953.3,499.3 953.8,498.2 954.3,499.8 954.8,498.4 955.3,499.6 955.8,498.5 956.3,499.4 956.8,498.2 957.3,499.8 957.8,498.3 958.3,499.4 958.8,498.6 959.3,499.9 959.8,498.5 960.3,499.5 960.8,498.1 961.3,499.8 961.8,498.5 962.3,499.6 962.8,498.7 963.3,499.6 963.8,498.3 964.3,499.6 964.8,498.6 965.3,499.3 965.8,498.5 966.3,499.7 966.8,498.5 967.3,499.6 967.8,498.1 968.3,499.7 968.8,498.3 969.3,499.8 969.8,498.2 970.3,499.9 970.8,498.4 971.3,499.3 971.8,498.6 972.3,499.7 972.8,498.3 973.3,499.7 973.8,498.3 974.3,499.3 974.8,498.5 975.3,499.3 975.8,498.7 976.3,499.5 976.8,498.7 977.3,499.7 977.8,498.5 978.3,499.6 978.8,498.7 979.3,499.3 979.8,498.5 980.3,499.5 980.8,498.5 981.3,499.8 981.8,498.5 982.3,499.8 982.8,498.7 983.3,499.8 983.8,498.4 984.3,499.8 984.8,498.6 985.3,499.5 985.8,498.5 986.3,499.4 986.8,498.4 987.3,499.7 987.8,498.5 988.3,499.5 988.8,498.5 989.3,499.7 989.8,498.5 990.3,499.4 990.8,498.3 991.3,499.6 991.8,498.5 992.3,499.7 992.8,498.4 993.3,499.7 993.8,498.7 994.3,499.4 994.8,498.4 995.3,499.8 995.8,498.6 996.3,499.6 996.8,498.3 997.3,499.6 997.8,498.4 998.3,499.6 998.8,498.6 999.3,499.5 999.8,498.2" fill="none" stroke="#808080" stroke-width="1.0" stroke-linejoin="round"/>
<path d="M999.8,498.2 1000.3,498.9 1002.3,499.1 1004.3,498.9 1006.3,499.1 1008.3,499.2 1010.3,498.9 1012.3,499 1014.3,499 1016.3,499 1018.3,498.9 1020.3,499.1 1022.3,499.2 1024.3,499.1 1026.3,498.9 1028.3,499.1 1030.3,499 1032.3,498.9 1034.3,499 1036.3,499 1038.3,499 1040.3,499.2 1042.3,499 1044.3,499.2 1046.3,498.9 1048.3,499.1 1050.3,498.8 1052.3,498.9 1054.3,499.1 1056.3,499.1 1058.3,499.1 1060.3,499 1062.3,498.9 1064.3,498.9 1066.3,499 1068.3,498.8 1070.3,498.9 1072.3,499.1 1074.3,498.9 1076.3,498.9 1078.3,499.1 1080.3,499.2 1082.3,498.9 1084.3,498.9 1086.3,498.8 1088.3,498.8 1090.3,499.1 1092.3,499.1 1094.3,498.9 1096.3,499 1098.3,499.1 1100.3,498.8 1102.3,499.1 1104.3,499.1 1106.3,498.9 1108.3,499.1 1110.3,499.1 1112.3,498.9 1114.3,499.2 1116.3,498.9 1118.3,499 1120.3,498.9 1122.3,499 1124.3,499.1 1126.3,499 1128.3,499 1130.3,499.2 1132.3,498.9 1134.3,498.9 1136.3,499 1138.3,498.9 1140.3,499.2 1142.3,498.9 1144.3,499 1146.3,499 1148.3,499.1 1150.3,499.2 1152.3,499.1 1154.3,498.9 1156.3,498.9 1158.3,499.1 1160.3,498.9" fill="none" stroke="#939397" stroke-width="1.0" stroke-linejoin="round"/>
<rect x="442" y="520" width="1" height="35" fill="#f00"/>
<rect x="140" y="537.0" width="74" height="1" fill="#e6e6fa"/>
<path d="M214,537.5 215,537.5" fill="none" stroke="#808080" stroke-width="1.0" stroke-linejoin="round"/>
<path d="M215,537.5 216,537.5 218,537.6 220,537.6 222,537.4 224,537.3 226,537.4 228,537.4 230,537.6 232,537.6 234,537.5 236,537.5 238,537.6 240,537.4 242,537.5 244,537.4 246,537.7 248,537.3 250,537.6 252,537.3 254,537.6 256,537.4 258,537.5 260,537.6 262,537.3 264,537.3 266,537.7 268,537.5 270,537.3 272,537.7 274,537.7 276,537.3 278,537.5 280,537.4 282,537.4 284,537.5 286,537.4 288,537.6 290,537.3 292,537.4 294,537.6 296,537.5 298,537.5 300,537.5 302,537.5 304,537.5 306,537.3 308,537.6 310,537.7 312,537.7 314,537.6 316,537.4 318,537.4 320,537.6 322,537.6 324,537.3 326,537.4 328,537.4 330,537.5 332,537.6 334,537.5 336,537.3 338,537.6 340,537.5 342,537.5 344,537.4 346,537.5 348,537.5 350,537.6 352,537.3 354,537.5 356,537.4 358,537.6 360,537.3 362,537.4 364,537.4 366,537.6 368,537.3 370,537.5 372,537.4 374,537.4 376,537.5 378,537.7 380,537.5 382,537.7 384,537.4 386,537.7 388,537.4 390,537.4 392,537.6 394,537.7 396,537.3 398,537.4 400,537.6 402,537.4 404,537.4 406,537.3 408,537.3 410,537.5 412,537.7 414,537.7 416,537.5 418,537.3 420,537.4 422,537.6 424,537.6 426,537.6 428,537.4 430,537.5 432,537.5 434,537.6 436,537.4 438,537.7 440,537.7 442,537.4 444,537.4 446,537.6 448,537.4 450,537.7 452,537.5 454,537.6 456,537.6 458,537.4 460,537.4 462,537.4 464,537.6 466,537.6 468,537.4 470,537.7 472,537.5 474,537.4 476,537.5 478,537.7 480,537.5 482,537.5 484,537.7 486,537.7 488,537.6 490,537.5 492,537.5 494,537.7 496,537.6 498,537.5 500,537.4 502,537.4 504,537.6 506,537.5 508,537.3 510,537.6 512,537.7 514,537.6 516,537.7 518,537.7 520,537.5 522,537.6 524,537.5 526,537.3 528,537.4 530,537.4 532,537.7 534,537.6 536,537.5 538,537.5 540,537.3 542,537.5 544,537.6 546,537.5 548,537.4 550,537.5 552,537.4 554,537.6 556,537.4 558,537.3 560,537.4 562,537.6 564,537.6 566,537.6 568,537.7 570,537.4 572,537.3 574,537.5 576,537.5 578,537.4 580,537.6 582,537.4 584,537.4 586,537.4 588,537.7 590,537.3 592,537.4 594,537.4 596,537.4 598,537.5 600,537.4 602,537.7 604,537.5 606,537.6 608,537.4 610,537.5 612,537.5" fill="none" stroke="#939397" stroke-width="1.0" stroke-linejoin="round"/>
<path d="M612,537.5 614,536.9 614.5,538.4 615.2,536.8 615.4,538.8 615.9,536.2 616.4,538.8 616.9,536.6 617.4,538.6 617.9,536.6 618.4,538.2 618.9,536.4 619.4,538.9 619.9,536.7 620.4,538.4 620.9,536 621.4,538.1 621.9,536.3 622.4,538.8 622.9,536.6 623.4,538.4 623.9,536.6 624.4,538.8 624.9,536.9 625.4,539 625.9,536.5 626.4,538.9 626.9,536.2 627.4,538.3 627.9,536.9 628.4,538.2 628.9,536.2 629.4,537.9 629.9,536.9 630.4,538.2 630.9,536.9 631.4,538.8 631.9,536.5 632.4,538.4 632.9,536.6 633.4,538.7 633.9,536.6 634.4,538.5 634.9,536.7 635.4,538.6 635.9,536.8 636.4,538.7 636.9,536.5 637.4,538.3 637.9,536.7 638.4,538.7 638.9,537 639.4,538 639.9,537.1 640.4,538 640.9,536.5 641.4,538.7 641.9,536.5 642.4,538.1 642.9,536.3 643.4,538.5 643.9,536.7 644.4,538.1 644.9,537.1 645.4,538.7 645.9,536.4 646.4,538.1 646.9,536.3 647.4,537.9 647.9,536.9 648.4,538.6 648.9,536.5 649.4,538.6 649.9,536.3 650.4,538.4 650.9,536.7 651.4,538.2 651.9,536.6 652.4,538.7 652.9,536.5 653.4,538 653.9,536.5 654.4,538.3 654.9,536.6 655.4,538.1 655.9,536.8 656.4,538.3 656.9,536.7 657.4,538 657.9,536.9 658.4,538.7 658.9,536.9 659.4,538.2 659.9,536.7 660.4,538.4 660.9,537.1 661.4,538.7 661.9,536.6 662.4,538.1 662.9,536.4 663.4,538.4 663.9,536.6 664.4,538.7 664.9,536.8 665.4,538.3 665.9,536.8 666.4,538.1 666.9,536.7 667.4,538.4 667.9,536.6 668.4,538.1 668.9,537.1 669.4,538.2 669.9,536.3 670.4,538.6 670.9,536.8 671.4,538.2 671.9,537.1 672.4,538.1 672.9,537 673.4,538.2 673.9,536.7 674.4,538 674.9,537 675.4,538.6 675.9,536.7 676.4,538.6 676.9,536.5 677.4,538.1 677.9,536.7 678.4,538.4 678.9,537 679.4,538.4 679.9,536.8 680.4,538.1 680.9,536.8 681.4,538.3 681.9,536.7 682.4,538.3 682.9,536.7 683.4,538.6 683.9,537.1 684.4,538.4 684.9,536.3 685.4,538.5 685.9,536.5 686.4,538.4 686.9,536.5 687.4,538.1 687.9,537.1 688.4,538.6 688.9,537 689.4,538.6 689.9,536.7 690.4,538.5 690.9,536.4 691.4,538.4 691.9,536.9 692.4,538.4 692.9,536.5 693.4,538.4 693.9,536.8 694.4,538.3 694.9,536.9 695.4,538.2 695.9,536.9 696.4,538.3 696.9,536.4 697.4,538.5 697.9,536.9 698.4,538.1 698.9,536.4 699.4,538 699.9,537.1 700.4,538 700.9,536.8 701.4,538.6 701.9,536.6 702.4,538.1 702.9,537.1 703.4,538.3 703.9,536.8 704.4,537.9 704.9,537.1 705.4,538.6 705.9,536.8 706.4,538.4 706.9,536.6 707.4,538.4 707.9,536.7 708.4,538.2 708.9,537.1 709.4,538 709.9,536.7 710.4,538.4 710.9,536.8 711.4,538 711.9,536.4 712.4,538.3 712.9,537.1 713.4,538.1 713.9,536.7 714.4,538.4 714.9,536.8 715.4,537.9 715.9,536.5 716.4,538.2 716.9,537.1 717.4,538.5 717.9,537.1 718.4,538 718.9,536.5 719.4,537.9 719.9,537 720.4,538.3 720.9,536.9 721.4,537.9 721.9,537 722.4,538 722.9,537.1 723.4,538.4 723.9,537.1 724.4,538.1 724.9,536.5 725.4,537.9 725.9,537.1 726.4,538.5 726.9,537.2 727.4,537.9 727.9,537.1 728.4,538 728.9,536.7 729.4,537.9 729.9,536.8 730.4,538.1 730.9,536.5 731.4,538.5 731.9,536.5 732.4,538.3 732.9,536.5 733.4,538.2 733.9,537.2 734.4,538 734.9,536.5 735.4,538.5 735.9,536.9 736.4,538.3 736.9,537.1 737.4,538.1 737.9,536.7 738.4,538 738.9,537 739.4,538.4 739.9,537 740.4,538.4 740.9,537.1 741.4,538 741.9,536.6 742.4,538.3 742.9,536.8 743.4,538 743.9,536.7 744.4,538.1 744.9,536.1 745.4,538.9 745.9,536.2 746.7,538.3 746.9,534.2 747.3,540.7 747.9,530.7 748.3,539.5 748.6,533.4 749.1,541.6 749.5,535.3 749.9,539.3 750.4,532.1 750.7,544.9 751.1,533.9 751.8,539.3 751.9,529.6 752.5,545.2 752.9,532.3 753.3,542.2 753.7,532.4 754.1,543.7 754.5,534.9 754.8,543.3 755.4,535.1 755.9,542.1 756.3,534.9 756.6,541.3 757.2,534.3 757.6,542.9 758,535.8 758.4,544.8 758.8,532 759.2,542.3 759.4,532.3 760.1,542.8 760.3,533.4 760.7,544 761.2,535.6 761.7,539.1 762,534.4 762.4,544.2 762.9,533 763.3,542.3 763.7,531.1 764.3,540.9 764.7,532.3 765.1,539.2 765.4,532.5 766,540.4 766.2,533.1 766.7,539.8 767.1,531.5 767.6,539.5 767.9,532.5 768.4,542.8 768.7,535.2 769.4,543.4 769.7,533.8 770.2,539 770.5,533.9 770.8,541.2 771.4,535 771.7,543.2 772.3,535.3 772.7,542.7 773.1,533.1 773.3,539.6 773.8,535 774.2,543 774.8,535.7 775.2,541.7 775.4,532.9 775.9,542.7 776.4,533.8 776.9,539.9 777.3,535.9 777.8,540.7 778.2,535.6 778.4,538.9 778.8,533.3 779.4,539.1 779.8,534.5 780.1,540.7 780.6,533.6 781.1,540.5 781.5,535.7 781.9,539.8 782.2,534.7 782.8,539.3 783.1,534.6 783.6,538.9 784,535.6 784.5,540.5 784.9,536.2 785.1,539.2 785.7,536.1 786,539.1 786.5,536.1 787,539.5 787.4,536.4 787.7,539 788,536.2 788.6,540.3 789,534 789.3,541.1 789.9,535.6 790.2,538.8 790.8,536 791.1,540.3 791.6,535.2 792,538.5 792.3,535.8 792.7,540.8 793.2,536.6 793.7,540.8 794.1,534.2 794.6,540.7 794.7,534.8 795.3,538.3 795.7,535.7 796.2,538.8 796.6,536.1 797,538.2 797.5,535.7 797.8,540.7 798.3,535.5 798.8,540.4 799,534.7 799.6,540.2 799.8,535.8 800.3,538.2 800.6,535.7 801.2,539.8 801.4,534.6 802,539.6 802.3,534.8 802.9,538.5 803.4,535.6 803.7,538.9 804.1,534.9 804.6,539.9 805,535.5 805.4,539.7 805.8,535.8 806.3,539.9 806.7,536.5 807,538.6 807.4,535.1 807.9,538.5 808.2,535.1 808.8,539.8 809.3,536.2 809.6,538.6 810.1,536.8 810.4,540.2 811,536.1 811.1,538.3 811.6,535.8 812,538.7 812.4,535.8 812.9,538.4 813.2,535.2 813.9,538.2 814.2,535.5 814.5,539.3 814.9,535.1 815.5,538.1 816,536.9 816.3,538.9 816.7,536.5 817,538.4 817.4,536.6 817.9,539.9 818.3,535.3 818.7,538.1 819.3,536.2 819.6,538.4 820.1,536.2 820.6,539 821,536.5 821.4,538.1 821.8,535.9 822.2,539.6 822.5,535.7 823,538.5 823.5,535.2 823.9,538.2 824.3,536.8 824.6,539.3 825,535.2 825.4,538.6 826,536.6 826.3,539 826.9,535.5 827.2,538.3 827.7,535.7 828.2,538.1 828.4,536.3 828.8,539.4 829.3,536.9 829.6,538.6 830.2,536.7 830.6,539.4 831.1,535.5 831.5,539.1 831.9,536.7 832.2,538.2 832.5,535.7 833,538.2 833.5,536.4 833.8,539.1 834.3,535.3 834.8,538 835.2,535.8 835.8,538.1 835.9,536 836.5,539.1 837,536.6 837.4,538.9 837.8,536.3 838.2,539.1 838.6,537 839.1,538.1 839.3,536.5 839.8,538.2 840.1,536 840.7,539.2 841,536.5 841.6,539.2 841.8,536.2 842.3,538.8 842.8,536 843.3,538.3 843.8,537 844.3,538 844.8,536.4 845.3,538.5 845.8,536.9 846.3,538.1 846.8,536.1 847.3,538.6 847.8,536.6 848.3,538.1 848.8,536.3 849.3,538.3 849.8,536.2 850.3,538.5 850.8,537 851.3,538.8 851.8,536.3 852.3,538.1 852.8,537 853.3,538.6 853.8,536.7 854.3,538.9 854.8,536.3 855.3,538.1 855.8,536 856.3,538.6 856.8,536.3 857.3,538.4 857.8,536.5 858.3,538.8 858.8,536.9 859.3,538.6 859.8,537 860.3,538.1 860.8,536.2 861.3,538.9 861.8,536.6 862.3,538.6 862.8,536.8 863.3,538.4 863.8,536.2 864.3,538.6 864.8,536.3 865.3,538.9 865.8,536.7 866.3,538.5 866.8,536.7 867.3,538.5 867.8,536.7 868.3,538.1 868.8,537.1 869.3,538.2 869.8,537 870.3,538.8 870.8,537.1 871.3,538.2 871.8,537 872.3,538.1 872.8,537 873.3,538 873.8,536.4 874.3,538.8 874.8,536.9 875.3,538 875.8,536.3 876.3,538.3 876.8,536.9 877.3,538.3 877.8,536.8 878.3,538.1 878.8,536.2 879.3,538.6 879.8,536.4 880.3,538.6 880.8,536.3 881.3,538.1 881.8,536.4 882.3,538.6 882.8,536.6 883.3,538.6 883.8,536.4 884.3,538.5 884.8,536.8 885.3,538.1 885.8,537.1 886.3,538.7 886.8,536.9 887.3,538.7 887.8,536.8 888.3,538.6 888.8,536.5 889.3,538.4 889.8,536.5 890.3,538.3 890.8,536.4 891.3,538 891.8,537 892.3,538.2 892.8,536.6 893.3,538.2 893.8,536.8 894.3,537.9 894.8,536.6 895.3,537.9 895.8,537 896.3,538.6 896.8,536.7 897.3,538.1 897.8,536.5 898.3,538.5 898.8,536.9 899.3,538.6 899.8,536.7 900.3,538.1 900.8,537 901.3,538.5 901.8,537 902.3,538.3 902.8,536.8 903.3,537.9 903.8,537 904.3,538.3 904.8,536.7 905.3,538.6 905.8,536.5 906.3,538.4 906.8,537 907.3,537.9 907.8,536.5 908.3,538 908.8,536.5 909.3,538.2 909.8,537.1 910.3,538 910.8,536.5 911.3,538.6 911.8,536.5 912.3,538.5 912.8,536.6 913.3,538.1 913.8,536.8 914.3,538.1 914.8,536.8 915.3,538.4 915.8,536.8 916.3,538.5 916.8,537 917.3,538.1 917.8,536.5 918.3,538.4 918.8,536.7 919.3,538.1 919.8,536.6 920.3,538 920.8,536.9 921.3,537.9 921.8,536.6 922.3,538 922.8,536.7 923.3,537.9 923.8,537.1 924.3,538.2 924.8,536.6 925.3,538.4 925.8,536.5 926.3,538.4 926.8,536.9 927.3,538.2 927.8,536.8 928.3,538.4 928.8,537 929.3,538.5 929.8,537.1 930.3,538.3 930.8,536.5 931.3,538.4 931.8,536.5 932.3,538.1 932.8,536.8 933.3,537.8 933.8,537.2 934.3,538.4 934.8,536.6 935.3,537.9 935.8,536.9 936.3,538 936.8,536.9 937.3,538.3 937.8,537.1 938.3,538.3 938.8,537 939.3,537.9 939.8,537.1 940.3,538 940.8,537.1 941.3,538.1 941.8,536.8 942.3,537.9 942.8,537 943.3,538.3 943.8,537.2 944.3,537.9 944.8,536.8 945.3,537.9 945.8,537.1 946.3,537.8 946.8,537 947.3,537.8 947.8,537.2 948.3,538.4 948.8,536.8 949.3,538.2 949.8,536.7 950.3,538 950.8,537.1 951.3,538 951.8,536.8 952.3,537.8 952.8,536.7 953.3,538 953.8,537.2 954.3,537.9 954.8,537.1 955.3,537.8 955.8,537.1 956.3,537.8 956.8,536.9 957.3,538 957.8,536.8 958.3,538.2 958.8,537.1 959.3,537.9 959.8,537.2 960.3,538.1 960.8,537.1 961.3,538.3 961.8,536.8 962.3,538.3 962.8,536.9 963.3,537.8 963.8,536.8 964.3,537.8 964.8,537.2 965.3,538 965.8,537.1 966.3,537.9" fill="none" stroke="#808080" stroke-width="1.0" stroke-linejoin="round"/>
<path d="M966.3,537.9 966.8,537.6 968.8,537.5 970.8,537.6 972.8,537.4 974.8,537.5 976.8,537.4 978.8,537.4 980.8,537.5 982.8,537.6 984.8,537.5 986.8,537.6 988.8,537.4 990.8,537.3 992.8,537.6 994.8,537.4 996.8,537.4 998.8,537.6 1000.8,537.7 1002.8,537.5 1004.8,537.5 1006.8,537.4 1008.8,537.3 1010.8,537.4 1012.8,537.4 1014.8,537.5 1016.8,537.4 1018.8,537.4 1020.8,537.4 1022.8,537.3 1024.8,537.6 1026.8,537.4 1028.8,537.6 1030.8,537.6 1032.8,537.6 1034.8,537.5 1036.8,537.4 1038.8,537.5 1040.8,537.4 1042.8,537.4 1044.8,537.6 1046.8,537.7 1048.8,537.6 1050.8,537.7 1052.8,537.5 1054.8,537.6 1056.8,537.6 1058.8,537.7 1060.8,537.4 1062.8,537.4 1064.8,537.3 1066.8,537.5 1068.8,537.7 1070.8,537.5 1072.8,537.4 1074.8,537.6 1076.8,537.4 1078.8,537.5 1080.8,537.6 1082.8,537.6 1084.8,537.5 1086.8,537.5 1088.8,537.4 1090.8,537.3 1092.8,537.3 1094.8,537.4 1096.8,537.6 1098.8,537.6 1100.8,537.4 1102.8,537.6 1104.8,537.4 1106.8,537.4 1108.8,537.7 1110.8,537.5 1112.8,537.5 1114.8,537.7 1116.8,537.4 1118.8,537.4 1120.8,537.3 1122.8,537.4 1124.8,537.6 1126.8,537.3 1128.8,537.5 1130.8,537.4 1132.8,537.5 1134.8,537.3 1136.8,537.6 1138.8,537.5 1140.8,537.6 1142.8,537.4 1144.8,537.4 1146.8,537.5 1148.8,537.4 1150.8,537.7 1152.8,537.6 1154.8,537.6 1156.8,537.5 1158.8,537.6 1160.8,537.4" fill="none" stroke="#939397" stroke-width="1.0" stroke-linejoin="round"/>
<rect x="214" y="520" width="1" height="35" fill="#777"/>
<rect x="442" y="557" width="1" height="35" fill="#f00"/>
<rect x="140" y="572.5" width="66" height="1" fill="#e6e6fa"/>
<path d="M206,573 207,573 208,572.3 208.5,573.8 209,572.7 209.5,573.4 210,572.4 210.5,573.4 211,572.2 211.5,573.6 212,572.7 212.5,573.8 213,572.3 213.5,573.7 214,572.6 214.5,573.8 215,572.4 215.5,573.5 216,572.6 216.5,573.3 217,572.2 217.5,573.7 218,572.7 218.5,573.7 219,572.6 219.5,573.6 220,572.4 220.5,573.5 221,572.6 221.5,573.4 222,572.7 222.5,573.6 223,572.3 223.5,573.8 224,572.3 224.5,573.8 225,572.5 225.5,573.8 226,572.6 226.5,573.8 227,572.7 227.5,573.8 228,572.6 228.5,573.6 229,572.5 229.5,573.7 230,572.7 230.5,573.7 231,572.7 231.5,573.6 232,572.7 232.5,573.5 233,572.7 233.5,573.8 234,572.6 234.5,573.6 235,572.5 235.5,573.8 236,572.5 236.5,573.8 237,572.3 237.5,573.4 238,572.2 238.5,573.7 239,572.2 239.5,573.4 240,572.6 240.5,573.4 241,572.7 241.5,573.5 242,572.4 242.5,573.3 243,572.5 243.5,573.6 244,572.5 244.5,573.3 245,572.3 245.5,573.4 246,572.7 246.5,573.3 247,572.2 247.5,573.8 248,572.7 248.5,573.7 249,572.4 249.5,573.3 250,572.2 250.5,573.3 251,572.5 251.5,573.7 252,572.4 252.5,573.8 253,572.5 253.5,573.6 254,572.2 254.5,573.3 255,572.3 255.5,573.6 256,572.6 256.5,573.3 257,572.3 257.5,573.3 258,572.2 258.5,573.7 259,572.3 259.5,573.7 260,572.7 260.5,573.4 261,572.6 261.5,573.7 262,572.7 262.5,573.4 263,572.6 263.5,573.8 264,572.2 264.5,573.7 265,572.5 265.5,573.8 266,572.5 266.5,573.5 267,572.7 267.5,573.7 268,572.4 268.5,573.4 269,572.4 269.5,573.8 270,572.4 270.5,573.5 271,572.2 271.5,573.3 272,572.7 272.5,573.6 273,572.5 273.5,573.6 274,572.7 274.5,573.5 275,572.6 275.5,573.3 276,572.2 276.5,573.7 277,572.2 277.5,573.7 278,572.3 278.5,573.7 279,572.7 279.5,573.7 280,572.4 280.5,573.6 281,572.2 281.5,573.5 282,572.4 282.5,573.5 283,572.2 283.5,573.5 284,572.3 284.5,573.5 285,572.5 285.5,573.7 286,572.5 286.5,573.5 287,572.7 287.5,573.4 288,572.6 288.5,573.8 289,572.6 289.5,573.4 290,572.7 290.5,573.3 291,572.6 291.5,573.3 292,572.7 292.5,573.4 293,572.4 293.5,573.7 294,572.2 294.5,573.3 295,572.4 295.5,573.6 296,572.3 296.5,573.5 297,572.6 297.5,573.6 298,572.6 298.5,573.7 299,572.7 299.5,573.8 300,572.3 300.5,573.4 301,572.5 301.5,573.3 302,572.5 302.5,573.7 303,572.5 303.5,573.3 304,572.7 304.5,573.7 305,572.5 305.5,573.3 306,572.6 306.5,573.3 307,572.5 307.5,573.7 308,572.3 308.5,573.6 309,572.3 309.5,573.6 310,572.4 310.5,573.7 311,572.7 311.5,573.7 312,572.6 312.5,573.6 313,572.4 313.5,573.6 314,572.4 314.5,573.7 315,572.2 315.5,573.6 316,572.6 316.5,573.5 317,572.7 317.5,573.5 318,572.2 318.5,573.3 319,572.4 319.5,573.3 320,572.3 320.5,573.6 321,572.3 321.5,573.5 322,572.5 322.5,573.8 323,572.7 323.5,573.8 324,572.2 324.5,573.6 325,572.3 325.5,573.6 326,572.5 326.5,573.8 327,572.7 327.5,573.7 328,572.5 328.5,573.8 329,572.3 329.5,573.3 330,572.3 330.5,573.8 331,572.4 331.5,573.4 332,572.3 332.5,573.3 333,572.4 333.5,573.3 334,572.3 334.5,573.8 335,572.7 335.5,573.6 336,572.7 336.5,573.4 337,572.3 337.5,573.6 338,572.4 338.5,573.4 339,572.6 339.5,573.5 340,572.5 340.5,573.4 341,572.6 341.5,573.7 342,572.6 342.5,573.6 343,572.7 343.5,573.7 344,572.6 344.5,573.5 345,572.7 345.5,573.8 346,572.2 346.5,573.3 347,572.4 347.5,573.8 348,572.2 348.5,573.5 349,572.3 349.5,573.8 350,572.5 350.5,573.8 351,572.2 351.5,573.6 352,572.4 352.5,573.3 353,572.6 353.5,573.7 354,572.6 354.5,573.6 355,572.6 355.5,573.8 356,572.5 356.5,573.3 357,572.7 357.5,573.6 358,572.2 358.5,573.3 359,572.3 359.5,573.7 360,572.2 360.5,573.3 361,572.7 361.5,573.7 362,572.6 362.5,573.8 363,572.7 363.5,573.8 364,572.5 364.5,573.8 365,572.4 365.5,573.3 366,572.2 366.5,573.8 367,572.6 367.5,573.3 368,572.6 368.5,573.6 369,572.4 369.5,573.8 370,572.7 370.5,573.4 371,572.7 371.5,573.6 372,572.4 372.5,573.3 373,572.5 373.5,573.5 374,572.5 374.5,573.4 375,572.5 375.5,573.3 376,572.5 376.5,573.7 377,572.5 377.5,573.6 378,572.2 378.5,573.3 379,572.2 379.5,573.7 380,572.3 380.5,573.3 381,572.5 381.5,573.6 382,572.2 382.5,573.5 383,572.6 383.5,573.4 384,572.5 384.5,573.4 385,572.6 385.5,573.4 386,572.7 386.5,573.4 387,572.6 387.5,573.4 388,572.7 388.5,573.6 389,572.5 389.5,573.3 390,572.6 390.5,573.3 391,572.5 391.5,573.4 392,572.2 392.5,573.8 393,572.5 393.5,573.3 394,572.5 394.5,573.7 395,572.2 395.5,573.6 396,572.5 396.5,573.6 397,572.3 397.5,573.5 398,572.2 398.5,573.6 399,572.5 399.5,573.4 400,572.2 400.5,573.6 401,572.5 401.5,573.7 402,572.6 402.5,573.5 403,572.4 403.5,573.3 404,572.2 404.5,573.8 405,572.2 405.5,573.8 406,572.4 406.5,573.4 407,572.6 407.5,573.6 408,572.2 408.5,573.3 409,572.2 409.5,573.6 410,572.3 410.5,573.6 411,572.7 411.5,573.5 412,572.5 412.5,573.7 413,572.7 413.5,573.3 414,572.4 414.5,573.3 415,572.4 415.5,573.6 416,572.4 416.5,573.4 417,572.7 417.5,573.8 418,572.4 418.5,573.8 419,572.7 419.5,573.6 420,572.2 420.5,573.3 421,572.2 421.5,573.4 422,572.4 422.5,573.4 423,572.5 423.5,573.5 424,572.6 424.5,573.4 425,572.2 425.5,573.3 426,572.6 426.5,573.8 427,572.4 427.5,573.6 428,572.4 428.5,573.5 429,572.3 429.5,573.6 430,572.2 430.5,573.8 431,572.6 431.5,573.3 432,572.2 432.5,573.7 433,572.5 433.5,573.5 434,572.3 434.5,573.6 435,572.7 435.5,573.4 436,572.6 436.5,573.5 437,572.3 437.5,573.3 438,572.2 438.5,573.6 439,572.4 439.5,573.5 440,572.2 440.5,573.7 441,572.6 441.5,573.4 442,572.4 442.5,573.8 443,572.3 443.5,573.8 444,572.2 444.5,573.8 445,572.7 445.5,573.6 446,572.6 446.5,573.3 447,572.5 447.5,573.5 448,572.4 448.5,573.4 449,572.2 449.5,573.4 450,572.4 450.5,573.4 451,572.4 451.5,573.8 452,572.4 452.5,573.7 453,572.4 453.5,573.5 454,572.7 454.5,573.3 455,572.6 455.5,573.7 456,572.7 456.5,573.7 457,572.2 457.5,573.3 458,572.7 458.5,573.8 459,572.2 459.5,573.7 460,572.5 460.5,573.8 461,572.5 461.5,573.6 462,572.2 462.5,573.7 463,572.2 463.5,573.3 464,572.7 464.5,573.4 465,572.2 465.5,573.3 466,572.7 466.5,573.8 467,572.2 467.5,573.5 468,572.4 468.5,573.5 469,572.4 469.5,573.4 470,572.6 470.5,573.5 471,572.6 471.5,573.4 472,572.7 472.5,573.6 473,572.2 473.5,573.8 474,572.3 474.5,573.5 475,572.6 475.5,573.6 476,572.4 476.5,573.4 477,572.5 477.5,573.4 478,572.5 478.5,573.7 479,572.7 479.5,573.3 480,572.5 480.5,573.6 481,572.6 481.5,573.3 482,572.3 482.5,573.3 483,572.2 483.5,573.4 484,572.4 484.5,573.4 485,572.4 485.5,573.4 486,572.4 486.5,573.8 487,572.6 487.5,573.7 488,572.3 488.5,573.4 489,572.2 489.5,573.4 490,572.4 490.5,573.8 491,572.3 491.5,573.5 492,572.4 492.5,573.8 493,572.5 493.5,573.3 494,572.6 494.5,573.6 495,572.5 495.5,573.6 496,572.3 496.5,573.8 497,572.7 497.5,573.7 498,572.6 498.5,573.3 499,572.3 499.5,573.3 500,572.4 500.5,573.6 501,572.7 501.5,573.4 502,572.4 502.5,573.8 503,572.3 503.5,573.3 504,572.4 504.5,573.6 505,572.6 505.5,573.3 506,572.3 506.5,573.4 507,572.6 507.5,573.4 508,572.4 508.5,573.3 509,572.2 509.5,573.5 510,572.7 510.5,573.6 511,572.3 511.5,573.3 512,572.6 512.5,573.6 513,572.7 513.5,573.7 514,572.3 514.5,573.8 515,572.3 515.5,573.5 516,572.7 516.5,573.4 517,572.2 517.5,573.7 518,572.5 518.5,573.3 519,572.2 519.5,573.3 520,572.7 520.5,573.7 521,572.3 521.5,573.7 522,572.3 522.5,573.6 523,572.4 523.5,573.3 524,572.6 524.5,573.7 525,572.5 525.5,573.7 526,572.5 526.5,573.6 527,572.4 527.5,573.5 528,572.6 528.5,573.6 529,572.3 529.5,573.8 530,572.3 530.5,573.4 531,572.7 531.5,573.5 532,572.6 532.5,573.7 533,572.7 533.5,573.6 534,572.6 534.5,573.5 535,572.4 535.5,573.8 536,572.4 536.5,573.7 537,572.6 537.5,573.4 538,572.5 538.5,573.5 539,572.5 539.5,573.4 540,572.7 540.5,573.8 541,572.7 541.5,573.7 542,572.6 542.5,573.6 543,572.2 543.5,573.6 544,572.2 544.5,573.6 545,572.7 545.5,573.3 546,572.7 546.5,573.6 547,572.4 547.5,573.3 548,572.3 548.5,573.5 549,572.2 549.5,573.7 550,572.5 550.5,573.3 551,572.5 551.5,573.8 552,572.2 552.5,573.3 553,572.6 553.5,573.7 554,572.5 554.5,573.6 555,572.6 555.5,573.8 556,572.7 556.5,573.7 557,572.2 557.5,573.4 558,572.7 558.5,573.7 559,572.3 559.5,573.5 560,572.7 560.5,573.6 561,572.5 561.5,573.6 562,572.4 562.5,573.8 563,572.5 563.5,573.6 564,572.4 564.5,573.5 565,572.3 565.5,573.4 566,572.5 566.5,573.6 567,572.4 567.5,573.5 568,572.4 568.5,573.5 569,572.2 569.5,573.7 570,572.5 570.5,573.3 571,572.2 571.5,573.5 572,572.2 572.5,573.4 573,572.5 573.5,573.8 574,572.3 574.5,573.7 575,572.7 575.5,573.7 576,572.4 576.5,573.8 577,572.2 577.5,573.7 578,572.5 578.5,573.5 579,572.2 579.5,573.4 580,572.3 580.5,573.3 581,572.3 581.5,573.3 582,572.2 582.5,573.8 583,572.6 583.5,573.8 584,572.6 584.5,573.6 585,572.5 585.5,573.7 586,572.7 586.5,573.5 587,572.5 587.5,573.8 588,572.6 588.5,573.7 589,572.4 589.5,573.8 590,572.5 590.5,573.5 591,572.3 591.5,573.4 592,572.6 592.5,573.8 593,572.5 593.5,573.4 594,572.7 594.5,573.8 595,572.6 595.5,573.3 596,572.3 596.5,573.4 597,572.3 597.5,573.3 598,572.4 598.5,573.4 599,572.2 599.5,573.4 600,572.2 600.5,573.7 601,572.5 601.5,573.8 602,572.3 602.5,573.6 603,572.3 603.5,573.7 604,572.3 604.5,573.8 605,572.4 605.5,573.8 606,572.2 606.5,573.3 607,572.5 607.5,573.4 608,572.5 608.5,573.6 609,572.3 609.5,573.5 610,572.7 610.5,573.4 611,572.3 611.5,573.3 612,572.2 612.5,573.7 613,572.3 613.5,573.8 614.1,569 614.6,580.7 615,567 615.3,582.7 615.7,565.9 616.2,580.9 616.7,563.4 617,581.9 617.4,570.1 618,580.2 618.4,563.2 618.7,582.8 619.2,564.5 619.6,579.6 620.1,559.5 620.6,579.1 620.7,562.6 621.3,580.9 621.8,565 622.3,576.9 622.5,565.9 622.9,579.8 623.4,562.3 623.8,576.6 624.2,565.1 624.6,584.3 625.1,564.6 625.5,577.3 625.9,570.2 626.5,579.3 626.8,564.9 627.3,576.3 627.6,570.4 627.9,577.5 628.4,570.5 628.9,575.9 629.3,568.6 629.8,581.7 630.1,570.6 630.4,582.9 631.1,563.6 631.3,581.5 631.8,565.9 632.2,578.8 632.5,565.5 633,575.9 633.5,564.6 633.8,578.3 634.2,567.3 634.8,579.3 635.3,570.8 635.6,580 636,570.2 636.6,575.3 636.9,566.8 637.3,578.3 637.6,570.2 638.1,576.9 638.5,566.5 639.1,575.2 639.4,568.4 639.8,575.3 640.2,571.1 640.7,578.9 641.1,570 641.5,575.5 641.7,571.6 642.2,577.2 642.7,570.2 643.2,577.3 643.5,569.7 644,575.7 644.5,569.8 644.9,575.7 645.3,568.7 645.8,574.6 646,570.3 646.4,576.2 647,569.4 647.2,578 647.7,571.6 648.1,575.7 648.5,569.2 649.1,576.7 649.4,567.7 649.8,576.2 650.2,570.5 650.7,577.1 651.1,568.4 651.7,575.8 651.9,570.8 652.5,577.3 652.7,569.1 653.2,576.1 653.7,569.1 654,577.3 654.5,569 655,575.4 655.4,571.1 655.6,577.5 656.2,571.6 656.5,577.5 656.9,571.9 657.4,575.6 657.9,570.3 658.1,576.7 658.5,570.2 659.1,575 659.6,570 659.9,575.1 660.3,570.8 660.8,574 661.3,571.5 661.7,574.5 661.9,572 662.5,577 663,570.2 663.2,574 663.6,570.4 664.2,574 664.6,571.8 665,574 665.3,572.1 665.9,574.5 666.3,571.6 666.6,576.6 667.2,569.6 667.5,574.3 667.8,568.5 668.4,577.6 668.9,568.3 669.3,575.5 669.5,571.9 669.9,574.8 670.4,570 670.9,575.8 671.3,569.9 671.7,576.7 672.2,572.1 672.6,574 672.9,571.9 673.5,575.7 673.7,572.1 674.2,576.2 674.8,571 675,574.6 675.4,569.7 676,576.2 676.3,571.3 676.9,576.8 677.1,569.5 677.7,576.2 677.9,570.7 678.4,575.8 678.8,570 679.4,576.2 679.7,572.2 680.2,576 680.4,571.3 681,575.7 681.3,571.7 681.6,574.2 682.2,571.5 682.5,576.6 683.1,569.5 683.6,574.4 683.9,569.8 684.2,574.8 684.7,572.1 685.2,574.2 685.4,571.3 685.8,576.3 686.4,572 686.9,575.1 687.2,569.8 687.8,574.3 688.1,570.5 688.6,574.2 689.1,570.8 689.5,573.9 689.7,570 690.2,574.3 690.7,572.2 690.9,575.2 691.4,570.4 691.8,574.6 692.3,569.8 692.8,573.8 693,569.9 693.5,573.9 693.9,570.6 694.3,574.8 694.7,570.6 695.2,574.9 695.6,570.6 696.1,575.9 696.6,570.8 696.9,575.4 697.2,570.8 697.8,575.6 698.2,572.3 698.5,574.1 698.8,570.8 699.5,574.7 699.9,570.1 700.3,573.7 700.6,570.1 701.2,574.7 701.6,571.9 702,575 702.2,571.8 702.6,574.9 703.2,570.2 703.7,575.2 704.1,571.2 704.4,575.1 704.9,572 705.3,573.8 705.7,571.7 706,574.3 706.7,572.3 706.9,575.6 707.3,570.9 707.7,574.4 708.2,570.1 708.6,575.1 709,570.4 709.5,574.3 710,571.6 710.4,575.3 710.7,571.4 711.1,575.3 711.5,572.2 711.9,575.6 712.3,571.4 712.9,574.2 713.2,572.2 713.8,573.7 714.2,570.5 714.6,573.8 715,571.5 715.5,574.1 715.8,570.7 716.2,573.7 716.7,570.3 717.1,574.8 717.6,571.8 717.8,575.9 718.2,572.2 718.7,574.9 719,571.1 719.6,575.5 720,570.2 720.5,574.8 720.9,572.1 721.3,574.5 721.8,572.2 722,573.8 722.5,570.1 722.9,573.7 723.3,572.2 723.6,574.3 724.3,572.1 724.6,574.6 724.9,572.2 725.3,574.9 725.9,571.9 726.3,574 726.6,571.6 727.2,573.8 727.7,572.3 727.8,574.5 728.4,570.1 728.9,573.9 729.2,571.4 729.6,574.9 730,571.7 730.6,574.2 731,571.3 731.3,573.7 731.7,572.1 732.1,575.4 732.7,571.4 733.1,573.7 733.5,571.5 733.8,574.3 734.4,571.4 734.6,575.1 735.1,571.2 735.6,574.3 736.1,570.9 736.3,573.7 736.8,571.3 737.3,574.2 737.6,571.7 738.1,573.9 738.6,572.1 738.8,573.9 739.2,571.8 739.7,574.9 740.1,571.4 740.5,573.8 740.9,570.9 741.5,573.7 741.9,571.4 742.2,576 742.6,570.9 743.1,575.6 743.6,571.7 743.8,575.3 744.4,571.4 744.8,575.3 745.2,572.3 745.7,575.1 746.1,570.8 746.3,581.1 746.8,570.6 747.3,575.5 747.7,563.4 748.3,577.7 748.7,566.6 749.1,583.1 749.3,569.8 749.9,581.5 750.2,568.3 750.5,580.5 751,562 751.6,578.6 751.8,565.6 752.2,582.8 752.8,566.3 753.3,578.7 753.5,567 754.1,582.8 754.6,565.1 754.9,583.3 755.3,567.3 755.8,580.1 756.2,570.1 756.5,576.3 756.9,570.5 757.3,583 757.7,567.7 758.1,583 758.6,570.7 759.1,580.8 759.5,564.5 759.9,579.5 760.2,563.7 760.6,576.7 761.2,565.9 761.5,581.7 761.9,569.4 762.3,577.2 762.9,568 763.2,582.1 763.7,564.1 764,580.8 764.5,570.7 764.9,578.3 765.2,567.2 765.8,575.1 766.2,568.1 766.6,575.6 767.1,571 767.4,579.9 767.9,566.5 768.2,578.3 768.6,567.7 769.2,580.7 769.6,569.9 770.1,578.6 770.4,567 770.9,580.8 771.2,565.9 771.8,579.3 772,566.2 772.6,575.2 772.9,569.1 773.4,578.3 773.8,567.6 774.1,575.6 774.5,571.2 775,575.9 775.5,570.7 775.9,574.9 776.2,568.8 776.6,575.2 777.1,570 777.4,575.5 777.9,566.9 778.2,575 778.9,569 779.2,574.6 779.7,568.8 780,576.9 780.5,571.3 780.8,574.7 781.3,567.2 781.7,579.2 782.3,567.3 782.7,578.1 782.9,566.7 783.3,575.2 783.7,568.9 784.3,574.7 784.6,571 785.1,575 785.6,569.1 785.9,574.9 786.4,570.4 786.6,576.3 787,569.5 787.5,579.1 788.2,569.2 788.4,576.1 788.8,569.6 789.2,578 789.8,567.1 790.1,577.3 790.6,571.2 790.9,577 791.4,568.8 791.8,578.7 792.1,571.6 792.7,576.5 793.1,570.2 793.4,576.1 794,570.5 794.4,574.7 794.7,570.7 795.1,574.9 795.5,568.7 796,578.2 796.5,567.8 796.8,574.3 797.2,571.4 797.8,575.4 798,569.7 798.5,577.5 799,569.3 799.5,575.9 799.8,568.6 800.1,574.6 800.5,571.7 801.2,576.5 801.4,569.3 801.9,575.4 802.3,570.7 802.7,577.2 803.1,570.4 803.5,574.4 804.1,568.6 804.3,574.9 804.8,568.2 805.3,575 805.7,569.2 806,574.6 806.5,571.5 806.8,575.9 807.2,568.7 807.9,576.1 808.3,571.3 808.6,577.1 809.1,568.9 809.4,574.8 809.7,570.1 810.4,574.1 810.8,569.7 811.1,576.2 811.5,571.1 812.1,575.5 812.3,569.8 812.7,576.5 813.3,568.9 813.6,574.2 814.1,569 814.6,577.1 815,571.3 815.3,575.3 815.7,569.6 816.3,576.9 816.6,569.6 817.2,576.9 817.4,571 818,576.1 818.4,571.6 818.5,574 819.2,571.5 819.4,575.6 819.8,570.4 820.3,574.5 820.7,571.5 821.1,576.6 821.5,570.6 822.1,575.2 822.6,570.7 823,576.4 823.3,570 823.7,573.9 824.1,570.1 824.4,573.9 825,570 825.3,574.3 825.9,569.4 826.3,576.3 826.6,570.1 827.1,574.4 827.6,571.5 827.8,574.1 828.5,570.6 828.8,574.8 829.3,571.9 829.6,576.7 830,572.1 830.5,575.4 830.7,570.3 831.2,574.3 831.6,570.2 832.1,574.6 832.5,569.9 833,575.2 833.4,569.9 833.7,575.1 834.3,572.2 834.6,573.9 835,569.8 835.5,574.4 836,571 836.4,576.1 836.8,571.9 837.2,573.9 837.6,569.7 838.1,574.6 838.5,571.8 839,575 839.1,570.1 839.8,575.8 840.1,571.4 840.6,574.1 840.8,569.8 841.2,576.2 841.7,569.8 842.1,573.8 842.5,570.1 843,575.6 843.6,572.1 843.9,574.6 844.2,571.6 844.7,576.1 845.3,570.6 845.6,576 845.9,571.7 846.3,573.7 846.9,572 847.3,574.2 847.8,571.5 848.1,574 848.5,570 849,575.8 849.3,571.6 849.7,574.2 850.1,572.2 850.5,574.5 850.9,570.1 851.6,574.6 851.9,570.3 852.2,573.7 852.6,571.3 853,574.6 853.5,572.3 853.9,573.7 854.4,572 854.7,575.8 855.2,570.9 855.5,573.7 856.1,570.4 856.6,574.2 856.9,571.4 857.3,575.8 857.7,571.4 858.1,573.8 858.6,572.3 859.1,575.4 859.3,570.6 859.9,574.5 860.3,572.3 860.6,575 861.1,571.4 861.6,574.6 862,571.3 862.4,574.3 862.9,571.7 863.2,574.9 863.5,570.8 864.1,574 864.6,570.2 864.9,574.8 865.3,572.2 865.8,573.7 866.3,570.7 866.5,573.7 867,570.7 867.5,575.5 867.8,572.4 868.1,575 868.5,571.4 869.1,573.9 869.7,571.9 870,574.1 870.3,572.4 870.7,574 871.2,571.5 871.8,573.6 872.1,570.3 872.5,574.4 872.8,571.8 873.4,573.6 873.6,570.9 874.3,574.2 874.7,570.8 874.9,573.6 875.4,571.7 875.8,573.7 876.1,572.3 876.7,574.9 877.2,570.8 877.4,573.7 878,572.4 878.3,575.4 878.7,571.7 879,574.3 879.7,571.4 880,573.7 880.4,572 880.9,574.7 881.3,570.7 881.7,574.5 882,570.6 882.6,573.7 882.8,572 883.3,573.7 883.7,571.8 884.2,574.2 884.7,572.3 884.9,574.7 885.5,570.7 885.8,573.7 886.4,571 886.7,574.7 887.1,572.2 887.5,574.1 887.8,572.3 888.5,575.3 889,572.4 889.3,574.9 889.6,571.3 890.2,573.6 890.5,571.9 891,575.4 891.3,570.7 891.9,575.5 892.3,572.4 892.6,575.1 892.9,571.8 893.5,574.1 894,572 894.3,573.8 894.6,570.9 895.3,573.6 895.7,572.3 896.1,574 896.4,572.1 896.7,574.6 897.1,571.4 897.6,573.7 898.1,571.7 898.5,573.8 898.8,572.3 899.5,574.1 899.7,571.9 900.1,575 900.6,571.6 901.1,575 901.6,571.4 901.8,574.8 902.3,572 902.6,573.5 903.1,571.7 903.6,574 903.8,572 904.2,574.4 904.7,570.7 905.2,574.9 905.7,570.9 905.9,574.5 906.5,572.2 907,574.6 907.4,572.4 907.6,574.7 908.2,571.5 908.6,573.8 909.1,570.9 909.5,573.5 909.8,572.4 910.1,573.7 910.7,571.8 911.1,574.3 911.6,572.2 912,573.9 912.4,572.5 912.9,574.4 913.1,571.8 913.5,574 914,571.3 914.3,574.6 914.8,571 915.2,574.2 915.6,572.2 916,574.1 916.6,571.9 916.9,573.8 917.5,570.9 917.9,574.2 918.2,571.9 918.7,574.7 919,571.4 919.4,574.9 920,571.9 920.2,575 920.8,571.8 921.2,573.5 921.5,572.4 922.1,575 922.5,572.4 922.8,574 923.2,572.5 923.7,574.8 924.1,571.3 924.5,575 924.8,571.2 925.3,573.9 925.7,572.2 926.2,574.8 926.7,572 927,575 927.3,571.5 927.8,574 928.3,572.1 928.7,573.7 929.1,571.9 929.6,573.9 929.9,571.5 930.3,573.5 930.7,571.7 931.2,574.2 931.6,572 932,573.5 932.5,572.5 933,574.1 933.3,571 933.6,573.8 934.1,571.7 934.6,574.1 935.1,572.1 935.6,574.5 936.1,571.6 936.6,574.6 937.1,572 937.6,574.3 938.1,571.6 938.6,574.4 939.1,572.2 939.6,574.6 940.1,572.2 940.6,574.5 941.1,572.4 941.6,573.5 942.1,572.1 942.6,574.1 943.1,572.5 943.6,574.3 944.1,572.3 944.6,573.8 945.1,572 945.6,574.4 946.1,572.2 946.6,573.8 947.1,571.5 947.6,573.5 948.1,572.4 948.6,574.3 949.1,571.9 949.6,573.7 950.1,572.2 950.6,574 951.1,571.5 951.6,574.2 952.1,571.6 952.6,573.7 953.1,572.3 953.6,573.8 954.1,571.8 954.6,573.9 955.1,571.7 955.6,573.7 956.1,571.9 956.6,573.9 957.1,571.6 957.6,573.6 958.1,571.8 958.6,573.5 959.1,572 959.6,573.6 960.1,572.1 960.6,574.3 961.1,571.5 961.6,573.6 962.1,572.3 962.6,574.4 963.1,572 963.6,573.5 964.1,571.9 964.6,573.6 965.1,571.7 965.6,573.8 966.1,572.3 966.6,573.9 967.1,571.9 967.6,573.6 968.1,572.2 968.6,574.3 969.1,571.9 969.6,574.4 970.1,572.5 970.6,573.7 971.1,571.9 971.6,573.4 972.1,571.9 972.6,573.5 973.1,571.8 973.6,573.6 974.1,571.7 974.6,574.1 975.1,572 975.6,574.2 976.1,571.7 976.6,574.1 977.1,572.2 977.6,573.4 978.1,572.1 978.6,573.9 979.1,572.1 979.6,574.1 980.1,572.6 980.6,574.2 981.1,571.8 981.6,573.6 982.1,572.5 982.6,574 983.1,572.3 983.6,573.8 984.1,572 984.6,574 985.1,572.5 985.6,574.4 986.1,572.4 986.6,574.1 987.1,572.6 987.6,573.5 988.1,572.4 988.6,574.3 989.1,571.7 989.6,574.1 990.1,572.1 990.6,573.9 991.1,572.6 991.6,573.7 992.1,572.1 992.6,574.2 993.1,572.4 993.6,573.9 994.1,572.3 994.6,573.6 995.1,572 995.6,574.2 996.1,571.7 996.6,573.4 997.1,572.3 997.6,574 998.1,571.8 998.6,573.4 999.1,571.8 999.6,574.2 1000.1,572.6 1000.6,573.6 1001.1,572.1 1001.6,573.6 1002.1,572.4 1002.6,574.1 1003.1,572.1 1003.6,573.7 1004.1,571.8 1004.6,573.6 1005.1,572.6 1005.6,573.5 1006.1,572.5 1006.6,574.1 1007.1,571.9 1007.6,573.6 1008.1,572.5 1008.6,573.7 1009.1,572 1009.6,574.1 1010.1,571.8 1010.6,573.5 1011.1,572.6 1011.6,574.1 1012.1,572.2 1012.6,574.1 1013.1,572 1013.6,574 1014.1,571.8 1014.6,573.7 1015.1,572.2 1015.6,573.9 1016.1,572 1016.6,573.9 1017.1,572.3 1017.6,573.7 1018.1,572.3 1018.6,573.6 1019.1,571.8 1019.6,574 1020.1,572 1020.6,574.1 1021.1,572.2 1021.6,573.7 1022.1,572.3 1022.6,573.5 1023.1,572.1 1023.6,574 1024.1,572.4 1024.6,573.9 1025.1,572.2 1025.6,573.9 1026.1,572.5 1026.6,573.4 1027.1,572.6 1027.6,573.4 1028.1,572.1 1028.6,573.7 1029.1,572.5 1029.6,574.1 1030.1,572.5 1030.6,573.7 1031.1,572.5 1031.6,573.8 1032.1,572.5 1032.6,574.1 1033.1,572.2 1033.6,574 1034.1,571.9 1034.6,574.1 1035.1,572.6 1035.6,573.7 1036.1,572 1036.6,573.9 1037.1,572.1 1037.6,573.4 1038.1,572.1 1038.6,573.5 1039.1,572.4 1039.6,573.7 1040.1,572.6 1040.6,573.6 1041.1,572 1041.6,574 1042.1,572.6 1042.6,574 1043.1,572.6 1043.6,573.8 1044.1,572.4 1044.6,573.4 1045.1,572.5 1045.6,573.6 1046.1,572.4 1046.6,574 1047.1,572 1047.6,573.4 1048.1,572.2 1048.6,573.5 1049.1,572.7 1049.6,573.5 1050.1,572.1 1050.6,573.4 1051.1,572.4 1051.6,573.7 1052.1,572.3 1052.6,573.8 1053.1,572.5 1053.6,573.6 1054.1,572.2 1054.6,574 1055.1,572.3 1055.6,573.6 1056.1,572.3 1056.6,573.8 1057.1,572.1 1057.6,574 1058.1,572.1 1058.6,573.9 1059.1,572.2 1059.6,573.9 1060.1,572.4 1060.6,573.7 1061.1,572.5 1061.6,573.4 1062.1,572 1062.6,573.8 1063.1,572 1063.6,573.6 1064.1,572 1064.6,573.8 1065.1,572 1065.6,573.7 1066.1,572 1066.6,573.6 1067.1,572.6 1067.6,573.4 1068.1,572 1068.6,573.8 1069.1,572.2 1069.6,573.4 1070.1,572.3 1070.6,573.9 1071.1,572.2 1071.6,573.9 1072.1,572.6 1072.6,573.5 1073.1,572.2 1073.6,573.5 1074.1,572 1074.6,573.7 1075.1,572.4 1075.6,573.6 1076.1,572.6 1076.6,573.7 1077.1,572.2 1077.6,573.5 1078.1,572.7 1078.6,573.8 1079.1,572.6 1079.6,573.7 1080.1,572.5 1080.6,573.4 1081.1,572.2 1081.6,573.8 1082.1,572.4 1082.6,573.7 1083.1,572.4 1083.6,573.4 1084.1,572.1 1084.6,573.9 1085.1,572.4 1085.6,573.4 1086.1,572.2 1086.6,573.5 1087.1,572.1 1087.6,574 1088.1,572.2 1088.6,573.8 1089.1,572 1089.6,573.6 1090.1,572.5 1090.6,573.8 1091.1,572.6 1091.6,573.5 1092.1,572 1092.6,573.5 1093.1,572.1 1093.6,573.9 1094.1,572.6 1094.6,573.3 1095.1,572.6 1095.6,573.8 1096.1,572.1 1096.6,573.5 1097.1,572.5 1097.6,574 1098.1,572.1 1098.6,573.8 1099.1,572.7 1099.6,573.8 1100.1,572.1 1100.6,573.7 1101.1,572 1101.6,573.5 1102.1,572.5 1102.6,573.9 1103.1,572.4 1103.6,573.4 1104.1,572.2 1104.6,573.4 1105.1,572.5 1105.6,573.8 1106.1,572.2 1106.6,573.5 1107.1,572.5 1107.6,573.7 1108.1,572.5 1108.6,573.5 1109.1,572.5 1109.6,573.9 1110.1,572.2 1110.6,573.7 1111.1,572.7 1111.6,573.4 1112.1,572.5 1112.6,573.6 1113.1,572.5 1113.6,573.9 1114.1,572.1 1114.6,573.3 1115.1,572.4 1115.6,573.8 1116.1,572.6 1116.6,573.7 1117.1,572.4 1117.6,573.4 1118.1,572.2 1118.6,573.4 1119.1,572.5 1119.6,573.3 1120.1,572.5 1120.6,573.9 1121.1,572.6 1121.6,573.8 1122.1,572.4 1122.6,573.4 1123.1,572.2 1123.6,573.9 1124.1,572.1 1124.6,573.9 1125.1,572.1 1125.6,573.4 1126.1,572.6 1126.6,573.8 1127.1,572.6 1127.6,573.9 1128.1,572.1 1128.6,573.5 1129.1,572.5 1129.6,573.6 1130.1,572.4 1130.6,573.6 1131.1,572.5 1131.6,573.9 1132.1,572.4 1132.6,573.4 1133.1,572.4 1133.6,573.7 1134.1,572.4 1134.6,573.3 1135.1,572.1 1135.6,573.3 1136.1,572.4 1136.6,573.9 1137.1,572.6 1137.6,573.3 1138.1,572.7 1138.6,573.4 1139.1,572.3 1139.6,573.9 1140.1,572.7 1140.6,573.5 1141.1,572.6 1141.6,573.4 1142.1,572.2 1142.6,573.3 1143.1,572.4 1143.6,573.6 1144.1,572.2 1144.6,573.3 1145.1,572.4 1145.6,573.9 1146.1,572.2 1146.6,573.4 1147.1,572.6 1147.6,573.7 1148.1,572.2 1148.6,573.6 1149.1,572.3 1149.6,573.9 1150.1,572.1 1150.6,573.5 1151.1,572.5 1151.6,573.5 1152.1,572.5 1152.6,573.8 1153.1,572.7 1153.6,573.4 1154.1,572.7 1154.6,573.5 1155.1,572.3 1155.6,573.3 1156.1,572.4 1156.6,573.3 1157.1,572.6 1157.6,573.4 1158.1,572.5 1158.6,573.4 1159.1,572.3 1159.6,573.7 1160.1,572.7 1160.6,573.5 1161.1,572.6" fill="none" stroke="#808080" stroke-width="1.0" stroke-linejoin="round"/>
<rect x="206" y="562" width="1" height="21" fill="#777"/>
<rect x="442" y="594" width="1" height="35" fill="#f00"/>
<rect x="140" y="610.5" width="77" height="1" fill="#e6e6fa"/>
<path d="M217,611 218,610.3 218.5,611.9 219,610.3 219.5,611.7 220,610.5 220.5,611.8 221,610.2 221.5,611.5 222,610.3 222.5,611.4 223,610.6 223.5,611.7 224,610.7 224.5,611.4 225,610.1 225.5,611.5 226,610.3 226.5,611.3 227,610.6 227.5,611.3 228,610.6 228.5,611.5 229,610.4 229.5,611.3 230,610.6 230.5,611.3 231,610.4 231.5,611.3 232,610.4 232.5,611.5 233,610.4 233.5,611.3 234,610.2 234.5,611.9 235,610.3 235.5,611.6 236,610.1 236.5,611.5 237,610.1 237.5,611.4 238,610.3 238.5,611.6 239,610.7 239.5,611.5 240,610.6 240.5,611.9 241,610.7 241.5,611.4 242,610.2 242.5,611.4 243,610.2 243.5,611.4 244,610.4 244.5,611.6 245,610.4 245.5,611.8 246,610.1 246.5,611.6 247,610.2 247.5,611.6 248,610.4 248.5,611.5 249,610.6 249.5,611.7 250,610.5 250.5,611.6 251,610.6 251.5,611.5 252,610.6 252.5,611.4 253,610.3 253.5,611.4 254,610.5 254.5,611.9 255,610.7 255.5,611.5 256,610.1 256.5,611.8 257,610.1 257.5,611.6 258,610.5 258.5,611.9 259,610.2 259.5,611.3 260,610.7 260.5,611.5 261,610.5 261.5,611.8 262,610.6 262.5,611.9 263,610.3 263.5,611.3 264,610.1 264.5,611.8 265,610.5 265.5,611.5 266,610.7 266.5,611.3 267,610.3 267.5,611.9 268,610.5 268.5,611.8 269,610.4 269.5,611.8 270,610.1 270.5,611.5 271,610.2 271.5,611.6 272,610.7 272.5,611.4 273,610.2 273.5,611.4 274,610.4 274.5,611.3 275,610.3 275.5,611.8 276,610.3 276.5,611.7 277,610.5 277.5,611.7 278,610.4 278.5,611.7 279,610.2 279.5,611.5 280,610.7 280.5,611.8 281,610.4 281.5,611.4 282,610.4 282.5,611.7 283,610.6 283.5,611.8 284,610.7 284.5,611.3 285,610.5 285.5,611.5 286,610.5 286.5,611.5 287,610.5 287.5,611.8 288,610.7 288.5,611.5 289,610.6 289.5,611.8 290,610.6 290.5,611.5 291,610.2 291.5,611.5 292,610.7 292.5,611.8 293,610.4 293.5,611.4 294,610.5 294.5,611.6 295,610.3 295.5,611.8 296,610.7 296.5,611.6 297,610.7 297.5,611.6 298,610.7 298.5,611.7 299,610.2 299.5,611.5 300,610.1 300.5,611.8 301,610.5 301.5,611.3 302,610.6 302.5,611.3 303,610.2 303.5,611.8 304,610.1 304.5,611.5 305,610.4 305.5,611.9 306,610.6 306.5,611.9 307,610.5 307.5,611.4 308,610.1 308.5,611.3 309,610.6 309.5,611.4 310,610.7 310.5,611.7 311,610.2 311.5,611.6 312,610.6 312.5,611.8 313,610.2 313.5,611.5 314,610.5 314.5,611.4 315,610.5 315.5,611.7 316,610.1 316.5,611.9 317,610.5 317.5,611.3 318,610.1 318.5,611.5 319,610.5 319.5,611.6 320,610.5 320.5,611.4 321,610.5 321.5,611.9 322,610.5 322.5,611.4 323,610.4 323.5,611.6 324,610.4 324.5,611.9 325,610.3 325.5,611.5 326,610.4 326.5,611.7 327,610.7 327.5,611.7 328,610.3 328.5,611.8 329,610.6 329.5,611.8 330,610.2 330.5,611.8 331,610.6 331.5,611.3 332,610.7 332.5,611.5 333,610.2 333.5,611.3 334,610.7 334.5,611.4 335,610.5 335.5,611.6 336,610.2 336.5,611.3 337,610.2 337.5,611.3 338,610.3 338.5,611.3 339,610.5 339.5,611.3 340,610.3 340.5,611.5 341,610.2 341.5,611.9 342,610.3 342.5,611.8 343,610.4 343.5,611.4 344,610.3 344.5,611.5 345,610.4 345.5,611.5 346,610.5 346.5,611.6 347,610.1 347.5,611.6 348,610.7 348.5,611.3 349,610.1 349.5,611.7 350,610.5 350.5,611.3 351,610.2 351.5,611.6 352,610.5 352.5,611.8 353,610.4 353.5,611.7 354,610.4 354.5,611.9 355,610.2 355.5,611.7 356,610.5 356.5,611.5 357,610.3 357.5,611.4 358,610.7 358.5,611.6 359,610.6 359.5,611.4 360,610.7 360.5,611.6 361,610.6 361.5,611.6 362,610.3 362.5,611.3 363,610.6 363.5,611.5 364,610.6 364.5,611.7 365,610.6 365.5,611.6 366,610.3 366.5,611.6 367,610.2 367.5,611.3 368,610.7 368.5,611.5 369,610.7 369.5,611.6 370,610.1 370.5,611.4 371,610.1 371.5,611.7 372,609.6 372.5,611.9 373,609.9 373.5,611.6 374,610 374.5,611.9 375,610.6 375.5,611.8 376,610.5 376.5,612.1 377,610.2 377.5,612 378,610 378.5,611.4 379,610.2 379.5,611.7 380,610.4 380.5,611.5 381,610.3 381.5,611.5 382,610.6 382.5,611.7 383,610.5 383.5,611.3 384,610.2 384.5,611.8 385,610.6 385.5,611.5 386,610.7 386.5,611.4 387,610.7 387.5,611.3 388,610.2 388.5,611.7 389,610.4 389.5,611.9 390,610.5 390.5,611.6 391,610.3 391.5,611.4 392,610.2 392.5,611.3 393,610.5 393.5,611.3 394,610.1 394.5,611.6 395,610.6 395.5,611.3 396,610.2 396.5,611.3 397,610.5 397.5,611.8 398,610.3 398.5,611.5 399,610.2 399.5,611.4 400,610.3 400.5,611.7 401,610.2 401.5,611.5 402,610.6 402.5,611.8 403,610.4 403.5,611.3 404,610.6 404.5,611.6 405,610.7 405.5,611.8 406,610.6 406.5,611.4 407,610.6 407.5,611.3 408,610.2 408.5,611.9 409,610.2 409.5,611.6 410,610.1 410.5,611.4 411,610.2 411.5,611.5 412,610.6 412.5,611.5 413,610.7 413.5,611.3 414,610.1 414.5,611.6 415,610.6 415.5,611.6 416,610.6 416.5,611.7 417,610.7 417.5,611.6 418,610.1 418.5,611.3 419,610.2 419.5,611.3 420,610.4 420.5,611.9 421,610.5 421.5,611.4 422,610.3 422.5,611.5 423,610.6 423.5,611.7 424,610.2 424.5,611.3 425,610.1 425.5,611.6 426,610.4 426.5,611.6 427,610.4 427.5,611.8 428,610.7 428.5,611.7 429,610.4 429.5,611.6 430,610.7 430.5,611.4 431,610.4 431.5,611.6 432,610.7 432.5,611.7 433,610.5 433.5,611.8 434,610.2 434.5,611.6 435,610.2 435.5,611.7 436,610.7 436.5,611.4 437,610.3 437.5,611.6 438,610.4 438.5,611.4 439,610.5 439.5,611.4 440,610.6 440.5,611.3 441,610.3 441.5,611.8 442,610.4 442.5,611.6 443,610.1 443.5,611.3 444,610.1 444.5,611.8 445,610.3 445.5,611.5 446,610.6 446.5,611.6 447,610.7 447.5,611.9 448,610.2 448.5,611.7 449,610.6 449.5,611.8 450,610.7 450.5,611.5 451,610.5 451.5,611.4 452,610.3 452.5,611.5 453,610.2 453.5,611.4 454,610.3 454.5,611.3 455,610.4 455.5,611.4 456,610.6 456.5,611.3 457,610.2 457.5,611.3 458,610.4 458.5,611.4 459,610.1 459.5,611.4 460,610.7 460.5,611.9 461,610.4 461.5,611.7 462,610.6 462.5,611.4 463,610.6 463.5,611.5 464,610.6 464.5,611.6 465,610.3 465.5,611.4 466,610.1 466.5,611.4 467,610.3 467.5,611.4 468,610.4 468.5,611.9 469,610.2 469.5,611.9 470,610.4 470.5,611.7 471,610.4 471.5,611.6 472,610.1 472.5,611.3 473,610.5 473.5,611.3 474,610.2 474.5,611.5 475,610.3 475.5,611.6 476,610.5 476.5,611.5 477,610.6 477.5,611.6 478,610.2 478.5,611.5 479,610.2 479.5,611.7 480,610.4 480.5,611.7 481,610.5 481.5,611.7 482,610.5 482.5,611.4 483,610.4 483.5,611.4 484,610.1 484.5,611.8 485,610.2 485.5,611.8 486,610.5 486.5,611.4 487,610.1 487.5,611.9 488,610.6 488.5,611.9 489,610.1 489.5,611.5 490,610.7 490.5,611.7 491,610.4 491.5,611.8 492,610.2 492.5,611.3 493,610.6 493.5,611.3 494,610.7 494.5,611.6 495,610.1 495.5,611.6 496,610.4 496.5,611.8 497,610.3 497.5,611.9 498,610.3 498.5,611.6 499,610.6 499.5,611.7 500,610.2 500.5,611.8 501,610.7 501.5,611.3 502,610.2 502.5,611.3 503,610.5 503.5,611.7 504,610.5 504.5,611.6 505,610.5 505.5,611.9 506,610.5 506.5,611.7 507,610.2 507.5,611.6 508,610.2 508.5,611.9 509,610.1 509.5,611.7 510,610.6 510.5,611.5 511,610.6 511.5,611.6 512,610.6 512.5,611.6 513,610.5 513.5,611.9 514,610.3 514.5,611.3 515,610.3 515.5,611.7 516,610.7 516.5,611.7 517,610.6 517.5,611.4 518,610.3 518.5,611.8 519,610.3 519.5,611.4 520,610.7 520.5,611.6 521,610.7 521.5,611.8 522,610.7 522.5,611.8 523,610.6 523.5,611.5 524,610.3 524.5,611.3 525,610.2 525.5,611.3 526,610.5 526.5,611.6 527,610.4 527.5,611.7 528,610.4 528.5,611.5 529,610.2 529.5,611.8 530,610.4 530.5,611.3 531,610.7 531.5,611.6 532,610.3 532.5,611.3 533,610.3 533.5,611.8 534,610.6 534.5,611.5 535,610.6 535.5,611.3 536,610.3 536.5,611.7 537,610.6 537.5,611.3 538,610.3 538.5,611.3 539,610.6 539.5,611.6 540,610.3 540.5,611.6 541,610.3 541.5,611.5 542,610.3 542.5,611.8 543,610.7 543.5,611.3 544,610.5 544.5,611.6 545,610.3 545.5,611.7 546,610.2 546.5,611.6 547,610.5 547.5,611.5 548,610.7 548.5,611.4 549,610.4 549.5,611.5 550,610.6 550.5,611.7 551,610.7 551.5,611.6 552,610.5 552.5,611.4 553,610.2 553.5,611.8 554,610.5 554.5,611.9 555,610.6 555.5,611.3 556,610.2 556.5,611.4 557,610.2 557.5,611.4 558,610.6 558.5,611.3 559,610.6 559.5,611.4 560,610.4 560.5,611.6 561,610.1 561.5,611.3 562,610.7 562.5,611.3 563,610.6 563.5,611.4 564,610.1 564.5,611.5 565,610.2 565.5,611.9 566,610.5 566.5,611.6 567,610.7 567.5,611.7 568,610.5 568.5,611.7 569,610.5 569.5,611.3 570,610.4 570.5,611.7 571,610.2 571.5,611.6 572,610.6 572.5,611.9 573,610.6 573.5,611.7 574,610.5 574.5,611.3 575,610.3 575.5,611.7 576,610.1 576.5,611.7 577,610.4 577.5,611.9 578,610.1 578.5,611.8 579,610.2 579.5,611.7 580,610.4 580.5,611.3 581,610.7 581.5,611.4 582,610.6 582.5,611.9 583,610.4 583.5,611.6 584,610.2 584.5,611.5 585,610.6 585.5,611.7 586,610.2 586.5,611.8 587,610.1 587.5,611.7 588,610.6 588.5,611.6 589,610.6 589.5,611.6 590,610.6 590.5,611.8 591,610.1 591.5,611.7 592,610.4 592.5,611.4 593,610.4 593.5,611.7 594,610.1 594.5,611.4 595,610.5 595.5,611.7 596,610.7 596.5,611.6 597,610.3 597.5,611.5 598,610.5 598.5,611.8 599,610.1 599.5,611.9 600,610.7 600.5,611.7 601,610.3 601.5,611.3 602,610.3 602.5,611.5 603,610.1 603.5,611.7 604,610.6 604.5,611.3 605,610.5 605.5,611.9 606,610.3 606.5,611.6 607,610.6 607.5,611.5 608,610.2 608.5,611.4 609,610.4 609.5,611.9 610,610.2 610.5,611.4 611,610.1 611.5,611.7 612,610.3 612.5,611.7 613,610.2 613.5,611.6 614,610.3 614.5,611.7 615,610.3 615.5,611.5 616.1,605 616.7,618.3 617,605.5 617.4,616.4 617.9,605.2 618.2,616.7 618.7,596.8 619,617.9 619.5,602.4 619.8,615.5 620.3,607 620.9,615.4 621.2,605.3 621.5,622.7 622.1,598.6 622.6,621.2 622.9,604 623.3,622.1 623.8,607.1 624,617.1 624.7,607.9 624.9,622.7 625.5,603.6 625.9,614.4 626.4,599.7 626.6,617.3 627,606.5 627.4,619.6 627.9,608.3 628.4,614.1 628.8,602.4 629.2,620.2 629.5,608.1 630.1,616.1 630.5,607.4 630.9,620.5 631.3,608.4 631.7,618.6 632,608 632.5,616.9 633,608.6 633.4,614.3 633.7,606.6 634.3,616.5 634.7,609 635.1,615.7 635.5,604.7 635.9,614 636.4,604 636.9,616.7 637.2,607.5 637.6,616.6 637.9,606.5 638.4,617 638.9,604.5 639.1,613.3 639.6,606.4 640.2,616.6 640.4,605.9 640.9,612.9 641.4,606.9 641.9,614.3 642.3,608 642.5,614.2 643,609.5 643.5,614.8 643.9,608.7 644.2,612.9 644.7,604.9 645.2,612.8 645.5,605 645.8,613.1 646.5,607.7 646.7,613.5 647.2,609.5 647.6,612.4 648,609.5 648.5,616.3 648.8,609 649.3,614.5 649.8,609.7 650.2,612.4 650.7,608.7 650.9,615.9 651.3,608.5 651.8,614.2 652.4,609.7 652.6,612.4 653.2,605.6 653.7,613.6 653.8,608.3 654.5,613.6 654.8,608.9 655.2,612.6 655.6,606.6 656.2,615.9 656.4,609.4 657,613.1 657.4,608.9 657.6,612.3 658.3,607 658.7,615.1 658.9,607.4 659.5,614 659.9,609.5 660.3,615.1 660.5,608.7 661.1,612.6 661.4,607.7 662.1,613.9 662.4,607.1 662.7,613.2 663.1,607.1 663.5,613.2 664.1,609.7 664.3,614.4 664.9,609.7 665.4,612.4 665.7,609.2 666.2,613.6 666.5,609.8 666.9,615 667.3,609.7 667.9,614.6 668.2,609.2 668.8,612.8 669.2,609.1 669.3,612.8 669.9,608.2 670.5,613.1 670.7,607.1 671.1,612.6 671.5,608.5 671.9,612.1 672.5,609.6 672.8,614.9 673.1,608.6 673.8,614.3 674.2,610 674.4,612.3 675,609 675.4,614.8 675.7,609.7 676.3,613 676.6,609.4 677.1,612.5 677.6,609.2 677.8,613.7 678.4,608.2 678.8,611.9 679.2,610 679.5,612.9 679.9,609.8 680.4,614 680.8,609.5 681.4,612.7 681.5,609.3 682.1,611.9 682.6,609.3 683,612.8 683.4,609.8 683.9,612.9 684.1,608.8 684.5,614 685.1,609.2 685.3,612 685.9,609.9 686.2,614.1 686.8,607.7 687.2,613.1 687.4,610.2 687.9,613.2 688.5,609.2 688.7,612 689.1,609.8 689.7,612.5 690.1,609.9 690.4,612.8 691.1,608.1 691.4,613.5 691.6,609.1 692.1,612.6 692.5,608.3 693,612.7 693.4,608.7 694,612.2 694.4,608.4 694.6,612.1 695.1,607.9 695.5,613.5 695.9,609.5 696.3,612.8 696.8,609.6 697.3,613.1 697.8,609.6 698.1,611.7 698.5,610.3 698.9,613.7 699.2,609.7 699.8,612.7 700,608.9 700.6,612.2 700.9,609.4 701.5,612.7 701.8,610.2 702.1,611.7 702.6,610.1 703.2,612.2 703.5,609.2 703.9,613.9 704.4,608.6 704.8,612 705.3,610.3 705.5,611.7 705.9,610.2 706.5,611.7 707,608.5 707.2,613.6 707.7,608.3 708.2,612.3 708.7,610.2 708.9,611.6 709.4,609.7 709.9,612.8 710.3,609.2 710.7,612.1 711.1,610.1 711.5,613.7 712.1,608.6 712.3,613.7 712.8,610.4 713.3,611.6 713.7,609.9 714,613 714.5,610 714.8,612.2 715.1,608.7 715.7,611.8 716.1,610.2 716.4,613.5 717.1,610.3 717.5,611.9 717.9,610.3 718.1,613.1 718.5,608.9 718.9,611.7 719.6,610.4 719.9,612.1 720.3,609 720.6,612.6 721.1,609.6 721.5,613.2 721.9,609.7 722.3,611.9 722.7,609.7 723.2,612.4 723.8,609.8 724.1,611.8 724.5,610.4 725,612.8 725.4,609.5 725.8,612.8 726.2,608.7 726.7,612.1 727,610.1 727.5,613 728,610.1 728.4,611.7 728.8,610.2 729,611.9 729.7,609.8 729.9,612.2 730.5,608.7 730.9,612.1 731.2,610.1 731.6,611.8 732.1,608.6 732.6,613.1 732.9,609.6 733.3,613.5 733.9,608.6 734.1,612.3 734.6,609.7 735.2,611.9 735.5,610 736,613.1 736.3,610 736.8,612.9 737.1,609.4 737.6,612.1 737.9,608.9 738.3,611.8 738.8,609.4 739.2,613 739.5,610.4 740.1,612.2 740.4,609.7 740.9,613 741.3,610.3 741.7,613.3 742.3,608.6 742.7,612.8 743,608.5 743.3,612.3 743.8,609.9 744.1,613.1 744.6,609.4 745,611.7 745.6,609.5 745.9,611.7 746.4,609.1 746.7,612.2 747.3,610.3 747.6,613 748,610.3 748.5,612.3 748.9,610.1 749.4,611.9 749.8,610.4 750.1,612.3 750.6,609.5 750.9,612.1 751.3,608.8 751.9,614.8 752.1,609.3 752.7,617.5 753.2,607.8 753.3,616.2 754,607.9 754.5,616.5 754.8,605.1 755.1,613.5 755.5,605.5 755.9,616.3 756.5,607.1 756.9,612.9 757.2,606.6 757.7,616 758.2,607 758.6,613.4 758.8,604.9 759.4,615.3 759.8,607.1 760.3,616.9 760.6,605.3 761,615 761.4,608.8 762,615.9 762.3,607.4 762.8,615.7 763.3,607.3 763.6,615.6 764.1,608.7 764.3,615.6 764.7,607.3 765.3,617.4 765.6,608.3 766,615.6 766.4,608.9 766.9,614.3 767.3,607.1 767.7,615.2 768.1,608.4 768.8,616 769,605 769.5,613.5 769.8,607.8 770.3,613.1 770.7,604.7 771.1,613.8 771.4,605.1 772,613.2 772.5,606.8 772.9,613.9 773.1,605.1 773.8,613.3 774,606.7 774.5,612.5 774.9,608.6 775.3,613.1 775.8,608.1 776.2,616.3 776.6,609.7 777.1,613.2 777.4,608.8 777.8,615.2 778.2,607.4 778.6,615.7 779,609.6 779.5,614.7 780.1,607.5 780.4,613.7 780.6,606.6 781.3,614.4 781.6,609.3 782,612.2 782.6,607.4 782.9,614.2 783.3,608.4 783.9,612.3 784.1,606.6 784.5,613 784.9,609.5 785.4,612.3 785.7,609.9 786.1,613.8 786.6,609.9 787.2,614.6 787.4,608.4 787.8,614.9 788.2,607.3 788.7,612.4 789.1,608.4 789.5,614.1 789.9,609.5 790.5,615.1 790.8,609.3 791.3,614.3 791.8,608.9 792.2,614.2 792.5,607.3 793,614.5 793.4,609.4 793.8,614.1 794.3,609.6 794.5,612 795,607.3 795.6,612.9 795.9,607.8 796.3,613.9 796.9,608.2 797.3,613.9 797.6,609.4 797.9,614.2 798.5,607.1 798.8,613.9 799.2,607.9 799.8,612.2 800.2,607.8 800.5,612.6 800.9,610.1 801.5,613.3 801.8,609.3 802.1,612.7 802.7,607.5 803.1,612.5 803.4,608.5 803.9,612.7 804.4,610 804.8,614.1 805,608.8 805.4,614.5 806.1,608.2 806.4,611.9 806.9,608.1 807.3,612.8 807.7,608.4 808.1,612.6 808.7,608.2 809,611.9 809.5,607.7 809.7,612.8 810.3,610.2 810.7,612.6 811.1,610.2 811.3,611.8 812,609.4 812.3,613.5 812.6,608.3 813.1,612.5 813.6,609.9 814.1,612.6 814.4,608.1 814.9,614 815.3,608.3 815.5,613.5 816,609 816.5,612.5 816.9,609.8 817.2,612.9 817.9,609.8 818.3,611.9 818.7,609.7 819.2,611.8 819.5,610.2 820,613 820.3,609.4 820.7,613.5 821.1,608.2 821.5,613.3 821.9,609.7 822.4,611.7 822.8,610.2 823.1,611.7 823.7,609.6 824,612.7 824.5,608.3 824.8,613 825.4,608.5 825.8,613.2 826.2,610.3 826.6,612.7 827,609.5 827.5,613 827.9,609.9 828.4,612.2 828.7,608.3 829.2,613.8 829.5,609.1 830,612.7 830.2,609.1 830.7,611.9 831.3,609.9 831.5,611.7 832,610.3 832.5,613.5 832.8,608.7 833.4,612.3 833.8,609.2 834.1,612.4 834.6,608.3 834.9,613.3 835.5,610.3 835.9,612.7 836.2,608.7 836.5,611.7 837.1,610.2 837.6,613.5 837.9,609.7 838.3,612.4 838.8,609.6 839.2,612.2 839.5,610.1 840,611.8 840.4,610.4 841,612.2 841.4,610.4 841.8,611.6 842.1,609.2 842.6,612.7 843,610.2 843.3,612.3 843.9,610.2 844.3,612.7 844.7,609.1 845.2,611.7 845.4,608.6 846,612.7 846.3,610.2 846.8,613.1 847.3,608.8 847.6,612.2 848.1,610.3 848.5,611.6 848.7,610.3 849.3,612.2 849.7,610.3 850,613 850.6,608.6 850.8,612.7 851.3,610.2 851.7,613.2 852.1,608.9 852.6,613 853.2,609.9 853.5,611.7 854,609.2 854.4,611.9 854.7,610.1 855,612.8 855.5,610.3 856.1,612.5 856.4,609.2 856.8,613.3 857.3,609.8 857.5,611.5 858.1,610.3 858.4,612.1 858.9,610.2 859.2,611.6 859.6,609.7 860.2,612.1 860.5,608.7 861.1,612.5 861.3,609.8 861.7,613.1 862.2,610.4 862.6,611.9 863.1,610.3 863.4,611.6 864.1,610.3 864.3,611.6 864.8,610.5 865.2,612.3 865.6,610.5 866.1,612.5 866.4,610.3 866.9,611.9 867.3,609.2 867.7,612.2 868.3,610.1 868.7,612.1 868.9,609.8 869.5,613 869.7,610.4 870.3,611.9 870.7,609.4 871.2,611.6 871.4,609.9 871.9,612.9 872.4,609.9 872.6,613.1 873.1,610.2 873.7,612.5 873.9,609.3 874.5,611.5 874.9,609.7 875.3,612.1 875.6,609.3 876.2,612.2 876.5,610.2 877.1,612.5 877.5,610.1 877.7,612.3 878.3,609 878.6,611.6 879.2,610.1 879.4,611.7 879.8,609.8 880.5,612.6 880.8,610.5 881.2,612.1 881.7,609.7 882.1,611.7 882.3,610.4 882.7,611.9 883.2,609.2 883.6,612.2 884.2,609.4 884.6,612.3 885,610.1 885.2,611.5 885.7,610 886.1,612 886.7,610.3 886.9,612 887.4,609.7 887.9,612 888.4,609.4 888.9,611.8 889.4,610.4 889.9,612.6 890.4,610.4 890.9,611.6 891.4,609.4 891.9,612.4 892.4,610.3 892.9,611.6 893.4,610.3 893.9,611.9 894.4,610 894.9,612.4 895.4,610.2 895.9,612.5 896.4,610.2 896.9,612.2 897.4,610.4 897.9,612 898.4,610.2 898.9,612.2 899.4,609.9 899.9,612.1 900.4,609.7 900.9,612.4 901.4,609.9 901.9,612.5 902.4,609.7 902.9,612 903.4,610.2 903.9,612 904.4,609.9 904.9,611.7 905.4,610.3 905.9,611.6 906.4,610.4 906.9,612.3 907.4,610.2 907.9,612.3 908.4,610.3 908.9,612.1 909.4,609.9 909.9,611.8 910.4,610 910.9,612 911.4,609.9 911.9,611.9 912.4,609.9 912.9,611.7 913.4,609.8 913.9,611.9 914.4,610.5 914.9,612.3 915.4,609.7 915.9,611.8 916.4,609.7 916.9,611.7 917.4,610.4 917.9,612.4 918.4,609.6 918.9,611.6 919.4,610.3 919.9,611.7 920.4,610.3 920.9,611.9 921.4,609.7 921.9,612.4 922.4,609.8 922.9,611.6 923.4,609.7 923.9,612.2 924.4,610.2 924.9,611.9 925.4,610.1 925.9,611.5 926.4,609.6 926.9,611.5 927.4,610.6 927.9,611.5 928.4,610.5 928.9,611.4 929.4,609.9 929.9,611.6 930.4,610.2 930.9,612.2 931.4,610 931.9,611.7 932.4,609.8 932.9,612.3 933.4,609.9 933.9,612.3 934.4,610.5 934.9,611.6 935.4,609.8 935.9,611.8 936.4,610 936.9,611.7 937.4,610.3 937.9,611.9 938.4,609.8 938.9,612 939.4,610.4 939.9,611.4 940.4,609.7 940.9,611.9 941.4,610.6 941.9,611.9 942.4,609.8 942.9,612.1 943.4,610.6 943.9,611.6 944.4,610.5 944.9,611.9 945.4,610.5 945.9,612.3 946.4,609.8 946.9,611.9 947.4,609.9 947.9,612 948.4,610.5 948.9,611.9 949.4,610.3 949.9,611.5 950.4,610.6 950.9,612.1 951.4,610.4 951.9,612 952.4,610.3 952.9,611.8 953.4,610.6 953.9,612.1 954.4,609.8 954.9,611.5 955.4,610.6 955.9,611.4 956.4,610.3 956.9,611.9 957.4,610.6 957.9,612.2 958.4,610.1 958.9,612.2 959.4,609.8 959.9,611.8 960.4,610.1 960.9,611.8 961.4,610.5 961.9,612 962.4,610.1 962.9,611.5 963.4,610.3 963.9,611.5 964.4,610 964.9,611.8 965.4,610.6 965.9,611.6 966.4,610.3 966.9,611.4 967.4,610.6 967.9,611.8 968.4,610.5 968.9,611.9 969.4,610.2 969.9,611.9 970.4,610.6 970.9,611.7 971.4,610.5 971.9,611.7 972.4,610.1 972.9,612 973.4,610.3 973.9,611.6 974.4,610.4 974.9,612 975.4,610.3 975.9,611.8 976.4,610.5 976.9,611.5 977.4,610.6 977.9,612 978.4,610.4 978.9,612.1 979.4,610 979.9,612 980.4,610.6 980.9,611.4 981.4,610.2 981.9,612 982.4,609.9 982.9,611.8 983.4,610.4 983.9,611.7 984.4,610.5 984.9,611.5 985.4,610.4 985.9,611.8 986.4,610.3 986.9,611.9 987.4,610.2 987.9,611.9 988.4,610.2 988.9,611.6 989.4,610 989.9,611.5 990.4,610.5 990.9,611.9 991.4,610.4 991.9,611.6 992.4,610.4 992.9,611.8 993.4,610.6 993.9,611.4 994.4,610 994.9,611.6 995.4,610.2 995.9,611.6 996.4,610.2 996.9,611.8 997.4,610.5 997.9,611.9 998.4,610 998.9,611.5 999.4,610 999.9,611.7 1000.4,610.7 1000.9,611.6 1001.4,610 1001.9,611.5 1002.4,610.1 1002.9,611.5 1003.4,610.1 1003.9,611.3 1004.4,610.6 1004.9,611.6 1005.4,610.5 1005.9,611.9 1006.4,610.5 1006.9,611.8 1007.4,610 1007.9,611.9 1008.4,610 1008.9,611.8 1009.4,610.3 1009.9,611.3 1010.4,610.3 1010.9,611.6 1011.4,610.5 1011.9,612 1012.4,610.5 1012.9,611.8 1013.4,610 1013.9,611.7 1014.4,610.2 1014.9,611.7 1015.4,610.5 1015.9,611.8 1016.4,610.4 1016.9,611.8 1017.4,610.2 1017.9,611.5 1018.4,610.7 1018.9,611.9 1019.4,610.1 1019.9,611.5 1020.4,610 1020.9,611.7 1021.4,610.6 1021.9,611.7 1022.4,610.6 1022.9,611.4 1023.4,610.5 1023.9,611.6 1024.4,610.6 1024.9,611.5 1025.4,610.4 1025.9,611.9 1026.4,610.7 1026.9,611.7 1027.4,610.6 1027.9,611.4 1028.4,610.1 1028.9,611.4 1029.4,610.6 1029.9,611.3 1030.4,610.1 1030.9,611.9 1031.4,610.5 1031.9,611.9 1032.4,610.7 1032.9,611.7 1033.4,610.4 1033.9,611.9 1034.4,610.6 1034.9,612 1035.4,610.1 1035.9,611.8 1036.4,610.6 1036.9,611.6 1037.4,610.4 1037.9,611.7 1038.4,610.2 1038.9,611.9 1039.4,610.4 1039.9,611.5 1040.4,610.5 1040.9,611.5 1041.4,610.4 1041.9,611.3 1042.4,610.4 1042.9,611.7 1043.4,610.3 1043.9,611.9 1044.4,610.2 1044.9,611.6 1045.4,610.2 1045.9,611.8 1046.4,610.4 1046.9,611.9 1047.4,610.6 1047.9,611.5 1048.4,610.1 1048.9,611.4 1049.4,610.2 1049.9,611.7 1050.4,610.3 1050.9,611.7 1051.4,610.4 1051.9,611.6 1052.4,610.5 1052.9,611.7 1053.4,610.1 1053.9,611.9 1054.4,610.5 1054.9,611.4 1055.4,610.7 1055.9,611.7 1056.4,610.4 1056.9,611.5 1057.4,610.5 1057.9,611.5 1058.4,610.4 1058.9,611.3 1059.4,610.2 1059.9,611.7 1060.4,610.3 1060.9,611.3 1061.4,610.4 1061.9,611.6 1062.4,610.1 1062.9,611.8 1063.4,610.4 1063.9,611.5 1064.4,610.3 1064.9,611.9 1065.4,610.7 1065.9,611.3 1066.4,610.4 1066.9,611.6 1067.4,610.3 1067.9,611.4 1068.4,610.5 1068.9,611.9 1069.4,610.5 1069.9,611.8 1070.4,610.1 1070.9,611.4 1071.4,610.6 1071.9,611.7 1072.4,610.3 1072.9,611.7 1073.4,610.6 1073.9,611.4 1074.4,610.6 1074.9,611.9 1075.4,610.5 1075.9,611.5 1076.4,610.1 1076.9,611.3 1077.4,610.7 1077.9,611.7 1078.4,610.5 1078.9,611.3 1079.4,610.2 1079.9,611.3 1080.4,610.7 1080.9,611.7 1081.4,610.7 1081.9,611.7 1082.4,610.5 1082.9,611.5 1083.4,610.2 1083.9,611.4 1084.4,610.4 1084.9,611.8 1085.4,610.7 1085.9,611.7 1086.4,610.4 1086.9,611.6 1087.4,610.5 1087.9,611.6 1088.4,610.2 1088.9,611.4 1089.4,610.5 1089.9,611.7 1090.4,610.3 1090.9,611.6 1091.4,610.4 1091.9,611.5 1092.4,610.3 1092.9,611.5 1093.4,610.6 1093.9,611.8 1094.4,610.2 1094.9,611.3 1095.4,610.6 1095.9,611.5 1096.4,610.6 1096.9,611.8 1097.4,610.7 1097.9,611.5 1098.4,610.5 1098.9,611.8 1099.4,610.2 1099.9,611.8 1100.4,610.6 1100.9,611.5 1101.4,610.6 1101.9,611.8 1102.4,610.2 1102.9,611.3 1103.4,610.2 1103.9,611.3 1104.4,610.7 1104.9,611.8 1105.4,610.4 1105.9,611.3 1106.4,610.2 1106.9,611.7 1107.4,610.4 1107.9,611.8 1108.4,610.6 1108.9,611.5 1109.4,610.2 1109.9,611.5 1110.4,610.7 1110.9,611.7 1111.4,610.3 1111.9,611.7 1112.4,610.6 1112.9,611.7 1113.4,610.3 1113.9,611.5 1114.4,610.4 1114.9,611.6 1115.4,610.3 1115.9,611.5 1116.4,610.3 1116.9,611.5 1117.4,610.2 1117.9,611.7 1118.4,610.4 1118.9,611.8 1119.4,610.6 1119.9,611.5 1120.4,610.6 1120.9,611.6 1121.4,610.5 1121.9,611.8 1122.4,610.4 1122.9,611.4 1123.4,610.2 1123.9,611.5 1124.4,610.4 1124.9,611.5 1125.4,610.5 1125.9,611.8 1126.4,610.7 1126.9,611.7 1127.4,610.7 1127.9,611.3 1128.4,610.5 1128.9,611.3 1129.4,610.7 1129.9,611.3 1130.4,610.5 1130.9,611.5 1131.4,610.3 1131.9,611.8 1132.4,610.5 1132.9,611.5 1133.4,610.3 1133.9,611.7 1134.4,610.7" fill="none" stroke="#808080" stroke-width="1.0" stroke-linejoin="round"/>
<path d="M1134.4,610.7 1134.9,611.1 1136.9,611.1 1138.9,611 1140.9,611 1142.9,611 1144.9,611.1 1146.9,611 1148.9,611.2 1150.9,610.9 1152.9,610.8 1154.9,611 1156.9,610.8 1158.9,611.1 1160.9,611.2" fill="none" stroke="#939397" stroke-width="1.0" stroke-linejoin="round"/>
<rect x="217" y="597" width="1" height="23" fill="#777"/>
<rect x="442" y="631" width="1" height="35" fill="#f00"/>
<rect x="140" y="648.0" width="80" height="1" fill="#e6e6fa"/>
<path d="M220,648.5 221,648.7 223,648.3 225,648.6 227,648.4 229,648.7 231,648.3 233,648.7 235,648.6 237,648.6 239,648.7 241,648.4 243,648.4 245,648.6 247,648.4 249,648.4 251,648.4 253,648.6 255,648.6 257,648.6 259,648.4 261,648.7 263,648.5 265,648.4 267,648.5 269,648.5 271,648.3 273,648.5 275,648.4 277,648.5 279,648.7 281,648.6 283,648.5 285,648.6 287,648.7 289,648.5 291,648.7 293,648.3 295,648.4 297,648.4 299,648.7 301,648.6 303,648.6 305,648.4 307,648.5 309,648.7 311,648.3 313,648.3 315,648.3 317,648.5 319,648.6 321,648.5 323,648.5 325,648.5 327,648.4 329,648.7 331,648.4 333,648.4 335,648.4 337,648.6 339,648.4 341,648.7 343,648.4 345,648.5 347,648.3 349,648.7 351,648.6 353,648.5 355,648.3 357,648.5 359,648.5 361,648.6 363,648.7 365,648.6 367,648.4 369,648.3 371,648.7 373,648.7 375,648.4 377,648.5 379,648.5 381,648.7 383,648.3 385,648.3 387,648.6 389,648.5 391,648.5 393,648.6 395,648.5 397,648.6 399,648.4 401,648.3 403,648.3 405,648.4 407,648.6 409,648.5 411,648.4 413,648.5 415,648.6 417,648.5 419,648.4 421,648.6 423,648.6 425,648.7 427,648.7 429,648.3 431,648.6 433,648.4 435,648.5 437,648.5 439,648.4 441,648.4 443,648.7 445,648.4 447,648.7 449,648.6 451,648.4 453,648.4 455,648.5 457,648.6 459,648.4 461,648.3 463,648.4 465,648.6 467,648.6 469,648.3 471,648.6 473,648.5 475,648.4 477,648.7 479,648.4 481,648.3 483,648.4 485,648.6 487,648.5 489,648.5 491,648.7 493,648.5 495,648.6 497,648.3 499,648.6 501,648.4 503,648.6 505,648.6 507,648.6 509,648.5 511,648.5 513,648.6 515,648.4 517,648.4 519,648.5 521,648.5 523,648.3 525,648.5 527,648.5 529,648.4 531,648.6 533,648.6 535,648.4 537,648.6 539,648.7 541,648.6 543,648.5 545,648.4 547,648.4 549,648.4 551,648.7 553,648.3 555,648.7 557,648.6 559,648.6 561,648.3 563,648.6 565,648.4 567,648.6 569,648.6 571,648.6 573,648.5 575,648.7 577,648.4 579,648.4 581,648.6 583,648.3 585,648.5 587,648.5 589,648.7 591,648.4 593,648.5 595,648.5 597,648.5 599,648.5 601,648.5 603,648.5 605,648.5 607,648.5 609,648.7 611,648.7 613,648.4 615,648.7 617,648.3 619,648.4" fill="none" stroke="#939397" stroke-width="1.0" stroke-linejoin="round"/>
<path d="M619,648.4 621.2,643.8 621.6,658.5 622,640.6 622.5,655.7 622.9,637.9 623.2,664.4 623.7,632.1 624,653.9 624.6,639.9 624.9,659.1 625.3,641.4 625.7,660.9 626.1,639.6 626.5,659.6 626.9,644.7 627.5,658.8 627.8,644.3 628.4,655.7 628.7,643 629.2,655.8 629.7,645 629.8,653.8 630.4,646 630.7,653.5 631.2,643.4 631.6,650.9 632.2,646.3 632.5,650.4 632.9,642.6 633.4,653.1 633.8,644.8 634.1,652.8 634.6,646.2 635,651.5 635.6,645.2 636,649.6 636.3,644.4 636.8,649.7 637.1,647.2 637.6,650.6 637.9,646.5 638.2,652.4 638.9,646.6 639.1,653 639.7,647.2 640.1,650.9 640.4,646.1 641,651.8 641.4,644.3 641.6,650.8 642.3,647.2 642.7,650.1 642.9,645 643.5,649.7 643.9,646.4 644.3,651.2 644.7,644.6 645.1,651.6 645.6,644.7 645.8,650.2 646.3,646.1 646.8,650.5 647.2,646 647.7,652.5 648,647.5 648.4,651.8 648.9,645.7 649.3,651.1 649.8,647.2 650.2,650.8 650.5,645.4 651.1,649.8 651.3,647.5 651.7,649.7 652.3,647.7 652.7,650.2 653.1,645.7 653.6,649.5 653.9,646.7 654.3,651 654.8,645.2 655.3,651.6 655.5,646.7 656.1,649.9 656.3,647.4 656.9,649.9 657.3,647 657.6,651.5 658.2,646.4 658.5,650.5 658.8,645.6 659.3,649.2 659.9,645.8 660.3,649.2 660.5,645.7 661.2,650.4 661.6,646.2 661.9,651.4 662.3,647.7 662.8,651.3 663,647.8 663.6,651 664,645.9 664.5,651.2 664.8,646.3 665.1,649.3 665.5,645.8 666,650.1 666.5,646.5 667,649.2 667.3,647.6 667.8,649.3 668.1,647.4 668.7,649.2 669,646.3 669.5,650.3 669.8,646.9 670.2,649.6 670.6,647.6 671.2,650 671.7,647.4 672,649.8 672.4,647.1 672.8,649.3 673.3,647.6 673.6,649.7 674.1,647.8 674.4,650.9 675,646.4 675.3,650.8 675.8,647.6 676.1,649.7 676.5,647.5 677.1,650.5 677.5,646.9 678,649.3 678.2,646.5 678.8,650.8 679,646.3 679.6,651 679.9,646.4 680.2,650.5 680.7,647.8 681.2,649.1 681.6,647.9 682.1,650.7 682.5,647.9 682.9,649.8 683.4,647.6 683.6,650.6 684.2,647 684.7,649.1 685.1,646.4 685.3,649.6 685.9,647.3 686.2,650.8 686.8,646.6 687.1,649.3 687.5,647.5 687.8,650.2 688.3,647.3 688.8,649.3 689.1,646.3 689.5,649.2 690.1,647.5 690.5,650.6 690.8,646.5 691.3,649.6 691.6,648 692.1,650.5 692.4,647.9 692.9,650.6 693.2,647 693.9,649.2 694.1,648 694.7,649 695,647.9 695.5,649.5 695.8,647.7 696.2,649.1 696.6,646.5 697.2,649.3 697.5,648 698,649.7 698.3,647.4 698.8,649.7 699.3,647.4 699.7,649.5 700.2,646.8 700.4,649.4 700.9,647.3 701.4,650.1 701.9,647.1 702.4,649.3 702.9,647.6 703.4,649.6 703.9,648 704.4,649.4 704.9,647 705.4,649.1 705.9,647.4 706.4,649.9 706.9,647.7 707.4,649.5 707.9,647.8 708.4,650.1 708.9,646.9 709.4,649.8 709.9,647.1 710.4,649.1 710.9,647.2 711.4,649.1 711.9,647.3 712.4,650 712.9,647.2 713.4,649.3 713.9,647.2 714.4,649.2 714.9,647 715.4,650.1 715.9,647 716.4,649.8 716.9,647.5 717.4,649.4 717.9,647.3 718.4,649.3 718.9,647.3 719.4,649.4 719.9,647.7 720.4,649.8 720.9,647.7 721.4,649 721.9,647.7 722.4,649.1 722.9,647.3 723.4,649.1 723.9,647.1 724.4,649.1 724.9,647.6 725.4,649.5 725.9,647.4 726.4,649.5 726.9,648 727.4,649.1 727.9,647.9 728.4,649.4 728.9,647.9 729.4,649.5 729.9,647.1 730.4,649.9 730.9,647.9 731.4,649.1 731.9,647.5 732.4,649.6 732.9,647.1 733.4,649.3 733.9,647.1 734.4,649.9 734.9,647.3 735.4,649.7 735.9,647.9 736.4,649.7 736.9,647.3 737.4,649.1 737.9,647.3 738.4,649.8 738.9,647.5 739.4,649.2 739.9,647.6 740.4,649.2 740.9,647.2 741.4,649 741.9,647.9 742.4,649.7 742.9,647.7 743.4,649 743.9,648.1 744.4,649 744.9,647.9 745.4,649.5 745.9,647.7 746.4,649 746.9,647.9 747.4,649.8 747.9,647.7 748.4,649.2 748.9,647.3 749.4,649.3 749.9,647.4 750.4,649.4 750.9,647.4 751.4,649 751.9,647.2 752.4,649.7 752.9,647.3 753.4,649.8 753.9,647.6 754.4,649.4 754.9,647.4 755.4,649.8 755.9,647.5 756.6,651.1 757,646 757.4,649.3 757.9,646.1 758.1,651.6 758.6,644.3 759.1,650.4 759.6,645.6 759.8,652.1 760.4,644.6 760.7,651.9 761.3,646.6 761.7,650.9 762,645.9 762.3,650.7 762.9,646.8 763.2,651.5 763.6,641.9 764.2,655.6 764.4,642.5 765,651.1 765.2,641.6 765.8,651 766.1,646.2 766.7,653.9 767,644.7 767.3,651.7 767.8,642.4 768.4,651.6 768.6,645.5 769.3,655 769.5,644.1 769.9,652.8 770.4,642.1 770.9,655.5 771.1,645.8 771.5,651.1 772.2,642.5 772.6,654.8 772.9,642.9 773.2,651.1 773.9,644.7 774.1,652.6 774.4,646.5 775.1,653.2 775.4,643.1 776,650 776.3,646.7 776.6,651.1 777,645.4 777.7,651.1 778.1,645.7 778.2,652.7 778.9,644.4 779.4,651.4 779.5,647.1 779.9,651.2 780.4,647.1 781,650.2 781.3,643.4 781.8,650.2 782.1,647 782.5,650.6 782.9,644.7 783.6,653.8 783.7,646.6 784.1,653.5 784.5,644.4 785,649.9 785.4,646.3 786,650.9 786.2,646.2 786.8,651.3 787.1,646.5 787.5,649.9 788,645.9 788.3,649.7 788.8,646.9 789.1,652.1 789.7,643.5 790.2,652.8 790.5,643.6 791.1,650.1 791.5,645.5 791.8,651.3 792.1,646.4 792.8,649.8 793.2,647.3 793.6,649.7 793.9,645.9 794.4,650 794.7,646.1 795.2,650.8 795.6,644.2 795.9,650.2 796.5,646.9 797,649.6 797.2,646.7 797.7,651.6 798,645.2 798.7,650.6 799,647.4 799.2,651.4 799.8,644.9 800.2,649.4 800.6,645.4 800.9,650.3 801.6,645.7 802,650.1 802.4,645.7 802.8,651.6 803.2,646.7 803.7,652.1 804.1,647.3 804.4,651.4 805,647.3 805.2,650.1 805.6,646.7 806.2,649.7 806.5,645.4 807,650.3 807.5,645.9 807.8,652.1 808,645.1 808.6,651.6 809.1,647.7 809.6,651.8 809.9,645.4 810.2,650.4 810.6,646.2 811.3,650.7 811.6,644.9 812,651.2 812.5,646.7 812.9,651.5 813.3,647 813.5,650.4 814,647.3 814.5,650.2 814.8,646.5 815.3,649.4 815.7,647.2 816.2,651.2 816.6,647.6 817.1,651.7 817.3,645.4 818,650.3 818.2,646.8 818.5,650.5 819.2,645.5 819.5,651.2 819.8,647.8 820.4,649.3 820.7,646.8 821.2,649.7 821.8,645.8 822.1,651.3 822.6,647.2 822.9,650.9 823.3,647.3 823.6,650.9 824.2,647.7 824.5,650 825.1,646.8 825.5,650 825.9,647.8 826.2,650.6 826.6,647.6 827.1,651.5 827.5,647.4 827.9,650.3 828.3,647.6 828.9,650.7 829.1,645.7 829.5,651.3 830,647.7 830.3,649.4 830.9,646.1 831.3,650.2 831.6,645.8 832.2,650.4 832.5,647.6 833.1,650 833.3,647.3 833.8,650.2 834.2,645.8 834.6,649.2 835.1,647.6 835.6,650.4 835.8,645.9 836.4,649.2 836.9,645.8 837.1,650.7 837.7,646.4 838,650.1 838.4,647.4 839,649.2 839.2,647 839.8,650.2 840,647.6 840.7,649.7 840.9,647 841.3,650.7 841.9,647.6 842.1,650.8 842.6,647.3 843.1,650.6 843.6,647.1 844,649.1 844.4,646.7 844.8,649.7 845.1,646.4 845.5,650.2 846.1,647.4 846.5,649.1 847,646.9 847.3,650.5 847.6,648 848,649.4 848.5,646.6 849,650.7 849.4,646.6 849.7,649.7 850.3,647.6 850.7,650.6 851,648 851.5,649.3 851.9,647.7 852.2,650.1 852.7,646.8 853.1,649.8 853.6,647.8 854,649.8 854.3,646.4 854.7,649.2 855.2,647.3 855.5,649 856.1,647.7 856.4,649 857,648 857.3,649.1 857.8,646.9 858.3,650.6 858.6,647 859.1,650.2 859.5,647.2 859.9,649.2 860.3,647.9 860.6,649.7 861.2,647.7 861.6,649.6 861.9,647 862.4,649.5 862.8,647.9 863.2,649.8 863.6,647.7 864.2,649 864.6,646.8 864.9,649.2 865.3,647.3 865.8,649.5 866.3,647.8 866.4,650.3 867,647.9 867.5,650.2 867.7,647.4 868.4,649.3 868.7,648 869.1,649.7 869.5,647.9 869.8,649.8 870.2,648 870.7,649.7 871.2,647.4 871.7,649.9 872.2,647 872.7,649.4 873.2,647.3 873.7,649.2 874.2,647.9 874.7,649.1 875.2,647.1 875.7,649.2 876.2,647.3 876.7,649.4 877.2,647 877.7,649.7 878.2,646.9 878.7,650 879.2,647.7 879.7,649.7 880.2,647.6 880.7,649.3 881.2,647.6 881.7,649.4 882.2,647.8 882.7,649.4 883.2,647.2 883.7,649 884.2,647.6 884.7,649.6 885.2,647.7 885.7,649.8 886.2,647.9 886.7,649.3 887.2,647 887.7,649.4 888.2,647.9 888.7,649.1 889.2,648 889.7,649.9 890.2,647.3 890.7,649.3 891.2,647.9 891.7,649.2 892.2,647.6 892.7,649.9 893.2,647.6 893.7,649.4 894.2,647.6 894.7,649.3 895.2,648 895.7,649.6 896.2,648 896.7,649 897.2,647.8 897.7,649.3 898.2,647.6 898.7,649.7 899.2,647.2 899.7,649.9 900.2,647.3 900.7,649.4 901.2,647.4 901.7,649.6 902.2,648.1 902.7,649.8 903.2,648 903.7,649.7 904.2,647.9 904.7,649.5 905.2,647.7 905.7,649.7 906.2,647.9 906.7,649.1 907.2,647.6 907.7,649.7 908.2,648 908.7,649.5 909.2,647.9 909.7,649.3 910.2,647.4 910.7,649 911.2,647.9 911.7,649.8 912.2,647.5 912.7,649.4 913.2,647.6 913.7,649.4 914.2,647.5 914.7,649.7 915.2,647.3 915.7,649.4 916.2,647.5 916.7,649.8 917.2,648.1 917.7,649.3 918.2,647.5 918.7,649.2 919.2,647.4 919.7,649.3 920.2,647.7 920.7,649.5 921.2,648.1 921.7,649.3 922.2,647.7 922.7,649.6 923.2,647.4 923.7,649 924.2,647.3 924.7,649.6 925.2,647.9 925.7,649.1 926.2,647.4 926.7,649.1 927.2,648 927.7,649.5 928.2,647.8 928.7,649.2 929.2,647.5 929.7,649.6 930.2,647.9 930.7,648.9 931.2,647.5 931.7,649.5 932.2,648 932.7,649.1 933.2,647.6 933.7,649.2 934.2,647.6 934.7,649.6 935.2,647.8 935.7,649.2 936.2,647.9 936.7,649.4 937.2,648.1 937.7,649.5 938.2,647.4 938.7,649.4 939.2,647.6 939.7,649.1 940.2,648 940.7,648.9 941.2,647.6 941.7,649.5 942.2,647.8 942.7,649.1 943.2,648.1 943.7,649.5 944.2,647.7 944.7,649.2 945.2,648.2 945.7,649 946.2,647.8 946.7,648.9 947.2,647.7 947.7,649 948.2,647.8 948.7,649.2 949.2,647.6 949.7,649.1 950.2,647.5 950.7,649.2 951.2,647.9 951.7,648.8 952.2,647.8 952.7,648.9 953.2,647.9 953.7,649.4 954.2,648.2 954.7,648.9 955.2,647.6 955.7,648.9 956.2,648 956.7,649.3 957.2,648.1 957.7,649.1 958.2,647.5 958.7,649.4 959.2,648.1 959.7,649.4 960.2,648.2 960.7,649.1 961.2,648 961.7,649.1 962.2,647.7 962.7,649.1 963.2,647.8 963.7,649.1 964.2,648.1 964.7,649.4 965.2,647.8 965.7,649.3 966.2,648.1 966.7,649.3 967.2,648.1 967.7,649.2 968.2,648 968.7,649.4 969.2,647.8 969.7,649.3 970.2,647.7 970.7,649.2 971.2,647.7 971.7,649.4 972.2,648.1 972.7,648.8 973.2,648.2 973.7,649.3 974.2,648.1 974.7,649.2 975.2,648 975.7,649.3 976.2,648.1 976.7,649.4 977.2,647.9 977.7,649.1 978.2,647.9 978.7,648.9 979.2,648.1 979.7,648.9 980.2,647.6 980.7,649.4 981.2,647.9 981.7,649 982.2,647.7 982.7,649.4 983.2,647.8 983.7,649.1 984.2,647.8 984.7,649 985.2,648.2 985.7,648.8 986.2,647.6 986.7,649 987.2,647.8 987.7,649.3 988.2,647.9 988.7,649 989.2,648 989.7,649.2 990.2,647.9 990.7,648.9 991.2,647.7 991.7,648.8 992.2,648.2 992.7,648.8 993.2,647.9 993.7,648.9 994.2,648.1 994.7,648.8 995.2,647.9 995.7,649.1 996.2,647.9 996.7,649.3 997.2,648.2 997.7,649.2 998.2,647.9 998.7,649 999.2,647.6 999.7,649 1000.2,647.8 1000.7,649.3 1001.2,648.2 1001.7,648.8 1002.2,647.9 1002.7,649.3 1003.2,648.1 1003.7,649.3 1004.2,648 1004.7,649 1005.2,648.2 1005.7,649.2 1006.2,647.8 1006.7,649 1007.2,648 1007.7,649 1008.2,647.6 1008.7,649 1009.2,648 1009.7,649.1 1010.2,647.6 1010.7,648.8 1011.2,648.2 1011.7,648.8 1012.2,648 1012.7,649.1 1013.2,647.8 1013.7,649.2 1014.2,647.9 1014.7,649.3 1015.2,648.2 1015.7,648.9 1016.2,648.2 1016.7,649 1017.2,648.1 1017.7,649 1018.2,648.2 1018.7,649.3 1019.2,647.8 1019.7,648.9 1020.2,647.7 1020.7,649.2 1021.2,648.3 1021.7,649.1 1022.2,647.7 1022.7,649.2 1023.2,648.2 1023.7,649 1024.2,647.8 1024.7,649.3 1025.2,648 1025.7,649.2 1026.2,647.7 1026.7,649.2 1027.2,647.7 1027.7,649.3 1028.2,647.9 1028.7,649.3 1029.2,647.9 1029.7,649.3 1030.2,647.7 1030.7,649.1 1031.2,648.1 1031.7,648.9 1032.2,648.2 1032.7,649.1 1033.2,647.9 1033.7,649.2" fill="none" stroke="#808080" stroke-width="1.0" stroke-linejoin="round"/>
<path d="M1033.7,649.2 1034.2,648.6 1036.2,648.6 1038.2,648.5 1040.2,648.6 1042.2,648.7 1044.2,648.6 1046.2,648.3 1048.2,648.6 1050.2,648.7 1052.2,648.5 1054.2,648.3 1056.2,648.4 1058.2,648.4 1060.2,648.4 1062.2,648.6 1064.2,648.7 1066.2,648.5 1068.2,648.3 1070.2,648.6 1072.2,648.6 1074.2,648.5 1076.2,648.7 1078.2,648.7 1080.2,648.6 1082.2,648.6 1084.2,648.4 1086.2,648.5 1088.2,648.3 1090.2,648.5 1092.2,648.6 1094.2,648.5 1096.2,648.5 1098.2,648.4 1100.2,648.6 1102.2,648.4 1104.2,648.4 1106.2,648.6 1108.2,648.6 1110.2,648.6 1112.2,648.3 1114.2,648.5 1116.2,648.4 1118.2,648.5 1120.2,648.7 1122.2,648.7 1124.2,648.5 1126.2,648.7 1128.2,648.5 1130.2,648.6 1132.2,648.3 1134.2,648.7 1136.2,648.6 1138.2,648.4 1140.2,648.7 1142.2,648.5 1144.2,648.6 1146.2,648.6 1148.2,648.5 1150.2,648.6 1152.2,648.6 1154.2,648.5 1156.2,648.7 1158.2,648.5 1160.2,648.6" fill="none" stroke="#939397" stroke-width="1.0" stroke-linejoin="round"/>
<rect x="220" y="646" width="1" height="4" fill="#777"/>
<rect x="442" y="668" width="1" height="35" fill="#f00"/>
<rect x="140" y="686.0" width="78" height="1" fill="#e6e6fa"/>
<path d="M218,686.5 219,686.4 221,686.5 223,686.5 225,686.5 227,686.5 229,686.6 231,686.4 233,686.6 235,686.3 237,686.4 239,686.4 241,686.4 243,686.6 245,686.4 247,686.6 249,686.7 251,686.4 253,686.7 255,686.6 257,686.6 259,686.3 261,686.5 263,686.6 265,686.4 267,686.4 269,686.4 271,686.4 273,686.6 275,686.4 277,686.5 279,686.6 281,686.7 283,686.4 285,686.3 287,686.7 289,686.6 291,686.6 293,686.5 295,686.4 297,686.4 299,686.4 301,686.5 303,686.3 305,686.6 307,686.6 309,686.3 311,686.6 313,686.5 315,686.7 317,686.5 319,686.6 321,686.5 323,686.5 325,686.5 327,686.3 329,686.4 331,686.4 333,686.5 335,686.4 337,686.5 339,686.6 341,686.5 343,686.4 345,686.5 347,686.7 349,686.6 351,686.6 353,686.6 355,686.4 357,686.3 359,686.3 361,686.3 363,686.3 365,686.6 367,686.7 369,686.3 371,686.6 373,686.7 375,686.6 377,686.4 379,686.6 381,686.4 383,686.4 385,686.3 387,686.5 389,686.7 391,686.3 393,686.4 395,686.5 397,686.3 399,686.5 401,686.6 403,686.5 405,686.3 407,686.3 409,686.4 411,686.6 413,686.7 415,686.5 417,686.3 419,686.4 421,686.5 423,686.3 425,686.3 427,686.5 429,686.6 431,686.4 433,686.7 435,686.7 437,686.5 439,686.4 441,686.4 443,686.6 445,686.6 447,686.6 449,686.4 451,686.5 453,686.3 455,686.4 457,686.4 459,686.3 461,686.3 463,686.7 465,686.4 467,686.5 469,686.5 471,686.5 473,686.5 475,686.5 477,686.5 479,686.3 481,686.6 483,686.6 485,686.6 487,686.4 489,686.5 491,686.6 493,686.6 495,686.3 497,686.4 499,686.4 501,686.6 503,686.5 505,686.5 507,686.4 509,686.5 511,686.6 513,686.6 515,686.4 517,686.5 519,686.5 521,686.3 523,686.7 525,686.3 527,686.6 529,686.4 531,686.7 533,686.6 535,686.4 537,686.5 539,686.6 541,686.6 543,686.6 545,686.6 547,686.6 549,686.7 551,686.5 553,686.5 555,686.6 557,686.5 559,686.4 561,686.5 563,686.4 565,686.6 567,686.6 569,686.7 571,686.3 573,686.3 575,686.7 577,686.6 579,686.7 581,686.6 583,686.7 585,686.4 587,686.4 589,686.5 591,686.6 593,686.3 595,686.7 597,686.4 599,686.4 601,686.5 603,686.4 605,686.3 607,686.3 609,686.3 611,686.4 613,686.6 615,686.6 617,686.6 619,686.5 621,686.6 623,686.3 625,686.6 627,686.5 629,686.3 631,686.5 633,686.4 635,686.6 637,686.4 639,686.3 641,686.4 643,686.3" fill="none" stroke="#939397" stroke-width="1.0" stroke-linejoin="round"/>
<path d="M643,686.3 645.2,685.1 645.6,687.9 646.1,685.8 646.4,688.4 646.7,685.6 647.4,687.8 647.6,683.8 648.2,687.3 648.5,684.8 649,687.8 649.4,683.9 649.7,689.3 650.1,684.8 650.5,687.8 650.9,685.2 651.5,689.1 652,685.5 652.2,688.5 652.6,684.1 653.3,688.3 653.4,685.9 654.1,687.7 654.3,684.3 654.7,687.9 655.2,685.8 655.8,689.1 656.1,684.5 656.6,689 656.8,685.5 657.4,687.5 657.8,685.7 658,687.1 658.7,685.9 659,687.1 659.3,686 659.7,687.6 660.4,685.2 660.6,687.4 661.2,685.4 661.6,687.2 662,684.2 662.3,687.1 662.9,684.3 663.3,688.4 663.6,685.5 663.9,687 664.4,685.4 664.9,687.8 665.2,686 665.9,687.5 666.3,685.8 666.6,687.6 667,685.7 667.5,688.7 667.9,685.8 668.2,687.2 668.7,685 669.2,687.9 669.6,685.7 670.1,687.7 670.3,685.6 670.8,687 671.3,685.7 671.5,687.1 672,685.7 672.6,688.2 672.7,685.6 673.2,688 673.9,685.6 674.2,688.6 674.4,685 675,688.7 675.5,685.2 675.7,687.2 676.2,685.1 676.6,687.6 677.2,684.3 677.6,687.5 678,685.7 678.2,687 678.6,685 679.2,687 679.5,685.2 680,687.9 680.4,685.1 680.9,687.3 681.2,685.9 681.6,687.1 682.1,684.7 682.4,687.9 683,686 683.4,687.1 683.9,685 684.2,687 684.6,684.5 685,687.4 685.5,684.6 685.8,687.5 686.3,685 686.7,687.6 687.1,684.6 687.7,687.7 687.9,684.9 688.3,688 689,685.9 689.3,687.9 689.7,685.6 690.1,688 690.4,684.7 690.9,688.2 691.2,684.5 691.8,688.5 692.2,685.9 692.7,687 693.1,685.7 693.6,687.6 693.8,684.5 694.4,687 694.8,685.4 695.1,687 695.7,686 696,688 696.3,685.3 696.8,688.1 697.1,685.7 697.6,688.2 698.1,685.4 698.5,688 699,684.9 699.3,687.9 699.8,685.2 700,687.3 700.5,684.8 701,687.1 701.5,685.9 702,687.5 702.5,685.3 703,687.8 703.5,685.9 704,687.8 704.5,685.6 705,688 705.5,685.9 706,687.9 706.5,685.8 707,687.3 707.5,685 708,687.2 708.5,685.9 709,687.1 709.5,685.4 710,687 710.5,685.1 711,688.1 711.5,685 712,687 712.5,685.8 713,687.7 713.5,685.8 714,687.1 714.5,685.8 715,687.3 715.5,685.7 716,687 716.5,685.3 717,687.7 717.5,685.8 718,687.7 718.5,685.7 719,687.6 719.5,685.3 720,687.3 720.5,684.9 721,687.6 721.5,685.7 722,687.9 722.5,685.4 723,687.1 723.5,685.5 724,687.2 724.5,685.8 725,687.2 725.5,685.5 726,687.8 726.5,685.5 727,687.9 727.5,685.5 728,687.2 728.5,685 729,687.2 729.5,685.1 730,687.1 730.5,685.5 731,687.7 731.5,685.1 732,687.6 732.5,685.7 733,687.8 733.5,685.5 734,688 734.5,685.9 735,687.1 735.5,685.2 736,687.3 736.5,686 737,687.2 737.5,685.3 738,687 738.5,685.8 739,687.5 739.5,685.3 740,687.2 740.5,685.8 741,687.4 741.5,685.1 742,687.5 742.5,685.3 743,687.8 743.5,685.3 744,687.6 744.5,685.5 745,687.8 745.5,685.1 746,687.6 746.5,685.1 747,687.6 747.5,685 748,687.4 748.5,686 749,687.6 749.5,685.8 750,687.5 750.5,685.1 751,687.8 751.5,685.1 752,686.9 752.5,685.5 753,687.4 753.5,686 754,687.6 754.5,685.8 755,687.3 755.5,685.4 756,687.9 756.5,686 757,687.5 757.5,685.3 758,687.3 758.5,685.6 759,687.7 759.5,685.4 760,687.2 760.5,685.5 761,687.9 761.5,685.9 762,687.2 762.5,685.3 763,687.3 763.5,685.8 764,687.5 764.5,685.6 765,687.3 765.5,685.3 766,687.7 766.5,685.7 767,687.1 767.5,685.6 768,687.8 768.5,685.1 769,687.4 769.5,686.1 770,687 770.5,685.2 771,686.9 771.5,686 772,687.5 772.5,685.1 773,687.3 773.5,685.5 774,687 774.5,686.1 775,687.2 775.5,685.7 776,687.2 776.5,685.3 777,687.6 777.5,686.1 778,687.4 778.5,686 779,687.4 779.5,685.4 780,687 780.5,686.1 781,687.5 781.5,685.7 782,687 782.5,685.8 783,687.4 783.5,685.6 784,686.9 784.5,685.7 785,687.5 785.5,685.5 786,687.4 786.5,686.1 787,687.2 787.5,685.9 788,687.6 788.5,685.6 789,687.5 789.5,685.5 790,687.8 790.5,685.2 791,687.7 791.5,685.4 792,687.4 792.5,686.1 793,687.7 793.5,685.9 794,686.9 794.5,685.5 795,687.6 795.5,685.9 796.2,687.7 796.7,682.9 796.9,690.2 797.4,683.5 798,688.7 798.3,681.7 798.6,691.2 799.1,682.4 799.4,689.5 800,682.5 800.2,692.1 800.9,675.5 801.2,689.8 801.6,680.7 801.9,698.3 802.5,672.7 802.8,698 803.3,682.9 803.7,697.8 804,677.5 804.5,695.7 805,682.8 805.6,701.6 805.7,682.9 806.4,700.6 806.6,682 807,699 807.6,677.5 808,698.1 808.4,680 808.6,700.6 809.3,672.6 809.5,691.9 810,674.6 810.4,695 811,677.6 811.4,700.8 811.6,681.5 812.2,693.2 812.4,683.2 812.8,690.7 813.4,672.3 813.8,700.6 814.4,681.6 814.6,696.8 815.2,683.4 815.4,692 816,673 816.2,696 816.7,676.6 817.2,693.3 817.6,674.5 818.1,693.3 818.5,676.7 818.8,697.7 819.4,683.7 819.8,691.6 820.2,682.1 820.4,694.1 820.9,683 821.3,698.6 821.8,681 822.3,694.3 822.6,675.5 823,693.7 823.6,678.3 824,697.3 824.3,684 824.7,693.2 825.2,679.3 825.5,693.8 825.9,676.9 826.3,688.9 826.9,677.6 827.1,690.5 827.7,682.4 828.1,693 828.4,681.7 828.8,689.8 829.5,676.8 829.8,691.9 830.2,678.6 830.6,694.6 830.9,682.8 831.5,692.8 831.7,684.1 832.3,695.5 832.6,677.3 833,688.7 833.7,683.5 833.8,691.7 834.5,678.2 834.8,688.7 835.3,684.5 835.6,690.6 836,682.8 836.6,694.2 837,679.5 837.4,693.5 837.8,683.1 838.1,691.8 838.5,684.4 839,688.4 839.5,681.2 839.7,693.5 840.3,681.2 840.8,692.1 841,684.7 841.4,691.9 842.1,680.3 842.5,692.6 842.7,680.9 843.3,688.7 843.7,683.3 844.2,693 844.4,679.4 844.9,691.5 845.5,680.4 845.9,688.3 846.2,683.6 846.4,689.5 847.1,681.9 847.4,689.4 847.9,685 848.2,692.5 848.7,681.1 849,688.5 849.5,680.9 849.9,688.3 850.3,680.9 850.9,692.5 851.1,684.6 851.5,690.5 851.9,681.3 852.4,688.5 852.9,682.4 853.2,691.9 853.7,684.7 854.2,688.1 854.7,682.9 854.9,688.6 855.5,682.7 855.9,691.2 856.2,681.2 856.8,690.5 857,684.3 857.6,687.8 858,681.5 858.4,689.3 858.7,683.2 859.2,687.9 859.6,682.4 859.9,689.4 860.6,683 860.8,687.7 861.3,681.9 861.8,691.1 862.1,681.3 862.4,691.7 863.1,683.2 863.5,691.3 863.8,681.7 864.1,690.3 864.6,684.2 865.1,690.1 865.3,685.3 866,688.3 866.2,683.7 866.7,687.7 867.1,683.9 867.7,690.8 867.9,683.3 868.3,688 868.8,684 869.3,688.1 869.8,684.9 870.1,688.3 870.6,684.2 871,688 871.4,682.3 871.9,690.1 872.2,682.1 872.5,687.6 872.9,684.9 873.6,689.4 874,685.3 874.1,690.8 874.7,683 875.2,690.4 875.6,685 876,687.9 876.4,685 876.8,688.2 877.1,684.6 877.7,690 878.2,683 878.4,689.4 879,685.5 879.4,688.5 879.9,684.8 880.3,689.7 880.6,684.2 881,687.9 881.3,683.1 882,688.7 882.4,685.4 882.8,688.2 883.2,685.5 883.6,689.4 883.9,685.5 884.3,689.2 884.7,683.8 885.3,689 885.5,683.7 886.2,687.8 886.5,683.1 887,687.7 887.2,685.5 887.7,689.5 888.1,685.6 888.7,688.8 888.9,684.7 889.5,689.3 889.8,682.5 890.2,690.4 890.8,685.3 891.2,689.2 891.7,684.9 891.9,688.7 892.3,685.2 892.8,689.1 893.2,684.7 893.7,687.7 894,685.7 894.5,688.1 894.8,684.7 895.2,688.9 895.8,684.8 896.3,687.8 896.4,685.6 897,689.4 897.3,684.6 897.9,687.8 898.4,684.6 898.6,687.4 899.2,685.4 899.4,688.3 900,684.9 900.4,688.9 900.7,684.3 901.3,689 901.5,685.4 902.1,689.4 902.4,684.1 902.9,688.5 903.1,684.3 903.7,688 904.2,684.3 904.6,687.7 904.9,685.2 905.3,687.8 905.7,684.6 906.1,688.6 906.5,685.7 906.9,689 907.4,684.6 907.8,688.5 908.3,685.7 908.7,687.4 909.3,683.7 909.5,689.3 909.9,684.9 910.4,687.7 911,684.4 911.1,688.7 911.7,683.8 912,688.1 912.5,685.5 912.9,688.1 913.4,684.8 913.7,687.7 914.3,684 914.6,688.9 915.1,684.6 915.5,689.2 916,684.8 916.4,689.4 916.6,683.7 917.1,689 917.4,683.6 918,689.4 918.4,684.8 918.8,689 919.2,684.7 919.6,688.3 920.1,684.5 920.5,687.5 921.1,684 921.5,687.6 921.8,685.1 922.2,687.6 922.6,685.9 923,687.3 923.4,685.1 924,688.8 924.3,685.2 924.8,687.4 925.2,685 925.5,687.9 926,685 926.4,687.8 926.7,683.9 927.2,688.6 927.7,684.4 928.1,687.5 928.5,685.6 928.8,687.1 929.3,685.4 929.6,687.7 930.2,685 930.7,688.9 930.9,684.3 931.3,688.4 931.8,684.2 932.1,688.4 932.7,685.6 933,687.2 933.4,684.4 933.9,688.7 934.3,685.7 934.7,687.8 935.1,685 935.7,688 936.1,685.8 936.5,687.5 936.9,685.7 937.3,687.5 937.6,685.9 938.2,687 938.4,684.4 939,687.7 939.3,685.8 939.9,687.2 940.2,685.9 940.7,687.5 941,684.3 941.5,688.3 941.9,685.9 942.4,687.1 942.8,685.2 943,687.5 943.6,685.8 943.9,687.8 944.3,685.6 944.8,688.4 945.4,685.2 945.6,687.7 946.1,685.1 946.4,688.4 947,684.4 947.3,687.4 947.9,684.8 948.3,688.5 948.7,685.6 949,687.1 949.5,684.8 949.8,687.9 950.2,685.2 950.7,687.5 951.2,685.2 951.7,687.3 952.2,685.4 952.7,688.2 953.2,684.9 953.7,687.5 954.2,685.3 954.7,687.4 955.2,685.2 955.7,687.2 956.2,685.2 956.7,687.4 957.2,684.9 957.7,687.6 958.2,685.6 958.7,687.6 959.2,685.2 959.7,688 960.2,684.9 960.7,687.9 961.2,685.7 961.7,688.1 962.2,685.2 962.7,687.2 963.2,685.4 963.7,687.5 964.2,685.4 964.7,687.1 965.2,685.2 965.7,687 966.2,686 966.7,687.1 967.2,685.6 967.7,687.5 968.2,685 968.7,687.3 969.2,685.3 969.7,687.3 970.2,685.7 970.7,687.8 971.2,685.8 971.7,687.2 972.2,685.8 972.7,687.2 973.2,685.6 973.7,687.3 974.2,685.8 974.7,687.1 975.2,685.1 975.7,687.4 976.2,685.2 976.7,688 977.2,685.8 977.7,687.4 978.2,685.9 978.7,687.1 979.2,685.1 979.7,687.8 980.2,685.3 980.7,688 981.2,685.8 981.7,687.8 982.2,685.8 982.7,687.6 983.2,685.5 983.7,687.2 984.2,685.3 984.7,687 985.2,685.4 985.7,687.8 986.2,685.5 986.7,687.8 987.2,685.9 987.7,687.6 988.2,685.3 988.7,687.5 989.2,685.4 989.7,687.3 990.2,685.6 990.7,687.3 991.2,685.2 991.7,687.5 992.2,685.6 992.7,687 993.2,685.8 993.7,687.8 994.2,686 994.7,687.2 995.2,685.3 995.7,687.3 996.2,686 996.7,687.1 997.2,685.4 997.7,687.6 998.2,685.5 998.7,687 999.2,685.8 999.7,687 1000.2,685.7 1000.7,687.2 1001.2,685.5 1001.7,686.9 1002.2,685.3 1002.7,687.1 1003.2,685.8 1003.7,687.4 1004.2,686.1 1004.7,687.3 1005.2,685.9 1005.7,687.6 1006.2,685.9 1006.7,687.3 1007.2,685.5 1007.7,687.5 1008.2,685.4 1008.7,687.3 1009.2,686 1009.7,687.3 1010.2,685.5 1010.7,686.9 1011.2,685.9 1011.7,687.3 1012.2,685.3 1012.7,687.5 1013.2,686.1 1013.7,687.6 1014.2,685.8 1014.7,687.4 1015.2,685.8 1015.7,687.6 1016.2,685.5 1016.7,687.3 1017.2,685.8 1017.7,687.6 1018.2,685.9 1018.7,687.5 1019.2,685.9 1019.7,687.4 1020.2,685.5 1020.7,686.9 1021.2,685.7 1021.7,687 1022.2,686 1022.7,687.2 1023.2,685.4 1023.7,687.2 1024.2,685.6 1024.7,686.9 1025.2,686 1025.7,687 1026.2,685.6 1026.7,687.2 1027.2,686 1027.7,687.4 1028.2,686 1028.7,687.6 1029.2,685.8 1029.7,687.3 1030.2,685.6 1030.7,687.1 1031.2,685.7 1031.7,686.9 1032.2,686.1 1032.7,686.9 1033.2,685.8 1033.7,686.9 1034.2,685.9 1034.7,686.9 1035.2,685.9 1035.7,687 1036.2,686.1 1036.7,686.9 1037.2,685.6 1037.7,687 1038.2,686.1 1038.7,687.5 1039.2,686.1 1039.7,687.3 1040.2,685.6 1040.7,687.3 1041.2,686 1041.7,687.2 1042.2,685.8 1042.7,686.8 1043.2,685.8 1043.7,687 1044.2,685.5 1044.7,687.4 1045.2,685.9 1045.7,687.5 1046.2,686.1 1046.7,687.1 1047.2,685.6 1047.7,687 1048.2,685.8 1048.7,687.1 1049.2,685.8 1049.7,687.3 1050.2,685.7 1050.7,687 1051.2,686.2 1051.7,687.1 1052.2,686.2 1052.7,686.8 1053.2,686.2 1053.7,686.9 1054.2,686.1 1054.7,687.1 1055.2,685.9 1055.7,687.3 1056.2,686 1056.7,687.3 1057.2,685.8 1057.7,687.1 1058.2,685.9 1058.7,687.2 1059.2,685.9 1059.7,686.9 1060.2,686.2 1060.7,687 1061.2,685.7 1061.7,687 1062.2,685.8 1062.7,687.2 1063.2,685.7 1063.7,686.8 1064.2,686.2 1064.7,687.4 1065.2,685.7 1065.7,687 1066.2,686 1066.7,687 1067.2,685.9 1067.7,687.3 1068.2,686.1 1068.7,687.1 1069.2,685.9 1069.7,687.2 1070.2,685.8 1070.7,687.1 1071.2,686.2 1071.7,687.1 1072.2,686.2 1072.7,687.1 1073.2,685.9 1073.7,687 1074.2,685.7 1074.7,687.2 1075.2,685.7 1075.7,686.8 1076.2,686.1 1076.7,686.8 1077.2,685.7 1077.7,687.1 1078.2,685.7 1078.7,687 1079.2,685.9 1079.7,687.2 1080.2,686.2 1080.7,687.3 1081.2,685.7 1081.7,686.9 1082.2,685.7 1082.7,687.2 1083.2,685.8 1083.7,687.3 1084.2,685.7 1084.7,687.2 1085.2,685.9 1085.7,686.9 1086.2,686.1 1086.7,687 1087.2,685.8 1087.7,687.3 1088.2,685.9 1088.7,687.1 1089.2,685.8 1089.7,687 1090.2,686.1 1090.7,687.2 1091.2,685.7 1091.7,686.8" fill="none" stroke="#808080" stroke-width="1.0" stroke-linejoin="round"/>
<path d="M1091.7,686.8 1092.2,686.6 1094.2,686.3 1096.2,686.7 1098.2,686.5 1100.2,686.6 1102.2,686.3 1104.2,686.7 1106.2,686.3 1108.2,686.5 1110.2,686.6 1112.2,686.4 1114.2,686.6 1116.2,686.4 1118.2,686.6 1120.2,686.4 1122.2,686.4 1124.2,686.7 1126.2,686.6 1128.2,686.4 1130.2,686.4 1132.2,686.4 1134.2,686.5 1136.2,686.4 1138.2,686.4 1140.2,686.6 1142.2,686.5 1144.2,686.4 1146.2,686.3 1148.2,686.3 1150.2,686.4 1152.2,686.7 1154.2,686.4 1156.2,686.7 1158.2,686.6 1160.2,686.4" fill="none" stroke="#939397" stroke-width="1.0" stroke-linejoin="round"/>
<rect x="218" y="686" width="1" height="5" fill="#777"/>
<rect x="442" y="705" width="1" height="35" fill="#f00"/>
<rect x="140" y="722.5" width="76" height="1" fill="#e6e6fa"/>
<path d="M216,723 217,723 219,723.1 221,723.2 223,722.9 225,723.1 227,723.1 229,723.1 231,722.8 233,722.8 235,723 237,723.1 239,722.9 241,723 243,722.9 245,723.1 247,723.2 249,723 251,723.2 253,722.8 255,723.1 257,723.2 259,722.9 261,723.1 263,723 265,723.2 267,722.9 269,723 271,723.2 273,723.1 275,722.9 277,722.8 279,723.2 281,723 283,723.2 285,722.9 287,723.1 289,723.1 291,723.2 293,722.8 295,722.9 297,722.8 299,723.1 301,722.9 303,723.2 305,722.9 307,723.1 309,723.1 311,722.9 313,723 315,723.2 317,723 319,722.9 321,722.9 323,723.1 325,722.9 327,723 329,723 331,723 333,722.9 335,723.1 337,723.2 339,722.9 341,722.9 343,723.2 345,723 347,722.9 349,722.8 351,723.1 353,722.9 355,723 357,722.9 359,723.1 361,723.1 363,722.9 365,722.8 367,723.2 369,723.2 371,722.8 373,723 375,723.1 377,723 379,723.1 381,723.2 383,723 385,723 387,722.9 389,722.9 391,722.9 393,722.8 395,722.9 397,723.1 399,723 401,723.1 403,723.2 405,723.1 407,722.8 409,723.2 411,722.8 413,723.1 415,723.1 417,723.1 419,723 421,722.8 423,722.8 425,723.1 427,722.9 429,723 431,722.9 433,722.9 435,722.9 437,723.1 439,723 441,723 443,723 445,723 447,723 449,723 451,723.2 453,723.1 455,722.9 457,722.9 459,722.9 461,722.9 463,722.8 465,723.1 467,723 469,723 471,723.2 473,722.9 475,723 477,723.2 479,723 481,723 483,722.9 485,723.2 487,723.1 489,722.9 491,722.9 493,723 495,723 497,723 499,722.9 501,723 503,723.1 505,723.1 507,723 509,723 511,723 513,723 515,723 517,722.8 519,722.9 521,723.2 523,723.1 525,723 527,723.1 529,722.9 531,722.9 533,723 535,723.1 537,722.8 539,723 541,723.2 543,723 545,723.2 547,722.8 549,723.2 551,723.1 553,722.8 555,723 557,723.1 559,722.9 561,723.1 563,723.1 565,723.1 567,723 569,722.8 571,723 573,722.9 575,723 577,722.9 579,722.9 581,723 583,723.1 585,723.2 587,723 589,722.8 591,723.1 593,722.9 595,723.1 597,723.1 599,722.8 601,723.1 603,722.9 605,722.9 607,722.9 609,723 611,722.9 613,723 615,722.9 617,722.8 619,722.9 621,723.1 623,722.9 625,722.9 627,722.9 629,722.9 631,723.2 633,723.1 635,722.9 637,722.9 639,723 641,723 643,723.0" fill="none" stroke="#939397" stroke-width="1.0" stroke-linejoin="round"/>
<path d="M643,723 645,720.3 645.6,724 646.1,720.2 646.4,724.6 646.9,720.5 647.3,724.3 647.6,720.3 648,724.2 648.5,722.1 648.9,726 649.2,719.9 649.7,725.5 650.1,720.5 650.6,726 651.1,722.2 651.5,725.2 651.8,721.9 652.3,725.7 652.7,722.2 653.1,724 653.4,721.1 653.9,724.7 654.5,721.8 654.7,725.4 655.3,721.7 655.7,724 656,721.5 656.6,725.4 657,721.5 657.4,725.7 657.7,721.6 658.1,725.1 658.7,720.2 659,724.5 659.6,721.5 659.8,723.7 660.1,722 660.6,724.4 661,721.1 661.5,724.3 661.8,720.7 662.5,724.6 662.8,721.9 663.3,725.8 663.6,721.7 664,725.2 664.6,722.3 664.8,724.6 665.4,721.2 665.6,724.3 666.1,722.2 666.7,723.7 666.9,720.1 667.4,724.5 667.8,721.9 668.1,723.7 668.7,720.5 669.2,724.4 669.6,722.3 670,725.7 670.4,721.1 670.6,724.1 671.2,720.4 671.6,724 672,720.8 672.4,724.4 672.8,722 673.2,724.3 673.8,720.6 674.2,724.4 674.5,722.3 675,723.9 675.3,721.2 675.7,723.6 676.3,721 676.7,723.6 677.1,722.4 677.5,724.1 677.8,721.1 678.4,724.7 678.8,720.7 679,723.7 679.7,721.5 679.9,723.6 680.4,721.2 680.9,723.9 681.2,720.4 681.7,725.6 682.1,721 682.5,723.7 683,722.1 683.4,724.3 683.7,720.9 684.1,724.4 684.5,722.4 685,724 685.5,720.9 686,723.6 686.4,721.1 686.7,724 687,720.8 687.5,724.6 687.9,721.9 688.4,723.8 688.9,720.6 689.2,724 689.7,720.8 690,724.9 690.6,721.8 691,724.5 691.4,721 691.6,725.5 692.1,722 692.5,723.7 693,720.9 693.4,724.6 694,721.8 694.4,724.6 694.8,721 695.1,723.8 695.5,721.5 695.9,724.4 696.5,722 696.9,725.5 697.3,721.8 697.6,724.9 698.1,722.4 698.5,723.9 698.8,721.9 699.2,723.9 699.8,721.7 700.3,724.1 700.7,720.9 701,725.3 701.4,722.1 701.7,724.4 702.2,721.4 702.7,724.8 703.2,721.8 703.6,723.6 704,722.2 704.3,724.4 704.7,721.9 705.4,725.2 705.7,722.1 706.1,724.4 706.3,722.3 707,723.7 707.4,722.1 707.8,723.8 708.1,720.8 708.7,725.3 709,721.2 709.4,724.8 709.8,722.5 710.1,725.2 710.8,722.1 711.2,724.6 711.6,722 712,723.8 712.2,722.2 712.7,725.2 713.1,720.8 713.6,723.9 714,720.7 714.6,724.3 714.8,722.1 715.2,723.9 715.6,721.6 716.1,723.7 716.7,720.9 716.9,724.1 717.3,722.3 717.8,724.4 718.4,721.6 718.6,723.8 719,720.9 719.6,723.9 720,722.2 720.5,723.8 720.8,720.7 721.2,725.2 721.5,721.9 722.1,723.9 722.5,722.4 722.9,725.2 723.3,721.1 723.7,724.5 724.1,722.5 724.7,723.7 724.8,722.1 725.4,724.5 725.7,721.2 726.1,723.8 726.5,721 727,724.5 727.3,722.5 727.8,725.2 728.4,721.2 728.7,724.7 729.1,722.1 729.7,724.8 730.1,722.3 730.4,723.6 730.9,721.9 731.2,724.5 731.6,721.4 732.1,723.6 732.5,722.5 733,725 733.2,722 733.7,724.7 734.2,722.2 734.7,724.3 735.1,721.1 735.6,724.9 735.8,721.5 736.3,723.8 736.6,721.8 737,724.3 737.4,722.1 737.9,724.1 738.5,721.7 738.9,724 739.1,721.2 739.6,725.3 740,722.4 740.5,723.7 741,722.4 741.3,725.2 741.7,722.1 742.2,725.1 742.6,721.6 743.1,724 743.4,720.7 744,724.6 744.3,722 744.6,725.1 745.1,721.5 745.7,724 746,720.9 746.3,723.7 746.9,721.6 747.2,724.5 747.5,721.9 748,723.9 748.6,721 748.9,723.7 749.3,722.3 749.6,725.1 750.1,721.8 750.7,723.5 751.1,722 751.3,724 751.8,720.9 752.3,723.6 752.6,721.5 753.2,724.6 753.6,722 753.8,723.6 754.2,722.4 754.8,723.8 755.1,721.5 755.7,723.5 756.1,721.9 756.6,724.1 756.8,721.7 757.2,724.5 757.8,722.2 758.1,724.8 758.4,721.8 758.9,724.2 759.3,722.4 759.8,723.8 760.2,721.7 760.6,724 761.2,722.2 761.6,724 762,721.1 762.4,723.8 762.9,722 763.1,723.5 763.5,722.3 764,724.3 764.6,720.9 764.9,725.1 765.4,721.9 765.7,724.5 766.1,721.2 766.5,725.1 766.9,722.4 767.3,724.6 767.9,722 768.3,724.2 768.6,722.5 769.1,724 769.4,722.1 770,725 770.3,722.5 770.6,723.7 771,722.5 771.4,724.9 772.1,721.3 772.5,723.8 772.9,721.7 773.4,723.6 773.6,722.4 774.2,723.5 774.6,721.7 774.9,724.7 775.3,721.7 775.9,724.5 776.3,722.5 776.6,724.6 776.9,721.4 777.5,723.5 777.7,721.4 778.3,724.1 778.8,722.2 779,723.6 779.6,722.5 779.9,724.2 780.5,722.4 780.8,724.8 781.2,721.7 781.8,723.7 782.2,722 782.5,724.4 782.8,721.8 783.3,724.2 783.9,721 784.1,723.7 784.6,722.5 785.1,724 785.4,721.3 785.8,724 786.2,722.4 786.7,723.9 787,722.2 787.7,725 788.1,722.2 788.2,723.9 788.9,722.4 789.3,724.5 789.7,721.9 790,723.8 790.4,721.3 790.9,724.1 791.2,721.8 791.8,723.7 792.3,721.5 792.7,723.6 793,722.3 793.4,724 793.8,722.1 794.1,723.7 794.8,721.5 795,724.7 795.6,720.5 796,726.7 796.4,719.4 796.9,727.3 797.3,715.9 797.6,726.4 798.1,720.8 798.5,729.5 798.9,718.4 799.2,730.8 799.8,715.8 800,732 800.5,711.6 801,732.5 801.3,718.4 801.8,726.8 802.1,715.8 802.7,732.9 803.1,719.9 803.6,732.6 804,714.8 804.5,729.7 804.6,713 805.3,725.9 805.6,711.4 806,736.4 806.3,717.5 806.9,726.3 807.3,715.5 807.6,726.3 808.2,716.9 808.5,734 808.9,715.3 809.4,726.8 809.9,716.9 810.2,726.3 810.8,710.7 811.2,730.5 811.5,717.8 811.9,729.5 812.2,720.1 812.9,728.6 813.1,719.2 813.6,732 814.1,716 814.4,732.6 814.8,719.5 815.3,726 815.8,712.1 816.2,728.8 816.4,715.2 816.8,729.9 817.5,719.9 817.6,725.7 818.1,715.8 818.6,725.6 819.1,715.1 819.5,728.5 819.8,719.8 820.4,725.5 820.7,715.5 821.1,727.1 821.6,713.5 822,728.2 822.3,718.5 822.9,731.4 823.4,717.6 823.7,731.8 824.2,716.4 824.6,725.3 824.9,719 825.4,725.7 825.7,714.2 826.1,730.9 826.7,720.5 826.9,727.8 827.5,719.7 827.8,731.7 828.2,714.2 828.7,731.4 829.2,715.9 829.5,725.7 829.8,715.5 830.4,731.7 830.7,719.4 831.3,731.2 831.5,720.2 832,726.2 832.6,715.8 833,726.2 833.2,715.9 833.7,728.3 834.1,720 834.7,724.9 834.9,716.4 835.5,725 835.7,715.1 836.3,725 836.7,718.6 837.1,728.2 837.5,718 837.9,725.6 838.4,716.1 838.8,729.8 839.1,720.7 839.7,727.7 840,720.6 840.6,727 840.9,721.4 841.3,725.1 841.7,720 842.1,724.7 842.6,721.2 842.9,725.1 843.5,721.4 843.7,728.2 844.3,720.7 844.6,724.6 845,721.2 845.6,728.8 845.9,720.5 846.4,727.8 846.6,720.7 847.1,726.7 847.6,719.1 848,724.5 848.5,719 849,725.2 849.3,719.7 849.5,728.3 850.2,720.2 850.5,727.1 850.8,717.3 851.3,728.2 851.7,721.6 852.2,724.5 852.5,721.3 853.1,727.8 853.4,721.5 853.8,724.4 854.3,719.7 854.8,724.4 855.2,718.9 855.7,728.3 856,720.3 856.3,726.7 856.8,719 857.3,727.2 857.8,721 858.2,727.6 858.5,720.9 858.9,725.2 859.5,719.3 859.7,726 860.3,718 860.6,728.2 861.1,719.8 861.4,725.5 861.7,720.4 862.2,727.4 862.8,721.4 863.1,727.2 863.6,720.8 864.1,726.2 864.4,721 864.8,726.7 865.4,719.4 865.6,727.1 866,718.7 866.5,724.8 866.9,721.3 867.3,727.8 867.7,720.6 868.2,727 868.6,719.9 868.9,728 869.6,721.7 869.8,726.9 870.2,721.6 870.8,724.1 871.2,720.2 871.5,725.4 871.9,720.3 872.2,726.3 872.7,720.9 873.3,726.2 873.6,721.2 874.1,724.7 874.5,721.3 874.9,724.7 875.2,718.7 875.8,726.9 876.2,720.7 876.5,725 877.1,721.9 877.3,724.4 877.9,718.6 878.3,724.4 878.6,720.6 879.1,727.3 879.6,721.5 879.8,724.2 880.4,720.1 880.9,725.4 881,719.1 881.7,727.3 882.2,722 882.5,724.3 883,720.9 883.4,725.6 883.8,719.4 884.1,726.3 884.7,720.8 884.9,725.6 885.3,721.6 885.7,724.6 886.1,719.7 886.7,724.5 886.9,719.1 887.4,724.4 887.9,719.8 888.3,725 888.8,720 889.3,724 889.6,721.8 890,726 890.4,719.7 891,726.1 891.3,721 891.6,724.4 892.2,721.9 892.6,724.5 892.8,721.1 893.5,724.9 893.7,719.4 894.3,724.4 894.7,719.4 895.1,724.7 895.3,721.8 896,724.1 896.3,721.5 896.7,724.3 897.2,721.5 897.5,724.6 898,720.4 898.5,726.2 898.9,720 899.3,724.6 899.6,721.5 900.1,724.6 900.4,719.9 900.8,724.4 901.3,720.1 901.9,725.5 902.1,722 902.5,724.3 903.2,722.2 903.3,725.7 903.9,720.6 904.2,725.2 904.8,722 905.3,723.7 905.5,720.1 906,724.3 906.3,720.7 906.7,724 907.1,721.7 907.7,724 908,719.8 908.5,725.7 908.9,721 909.4,723.8 909.8,719.9 910,724.6 910.7,720.9 911.1,724.3 911.5,720.9 911.7,725.8 912.2,719.9 912.8,724.1 913.2,720.4 913.6,724 913.9,721.5 914.3,724.1 914.8,720.8 915.3,724.6 915.6,722.1 916.1,725.7 916.6,721 917,724.6 917.5,721.8 917.7,723.8 918,720.6 918.5,725.8 919,721.2 919.4,725.1 920,722.1 920.2,724.5 920.7,722 921,724.2 921.4,722.1 921.8,723.8 922.5,722.3 922.7,725.4 923.2,722.1 923.5,724.2 923.9,721.3 924.5,723.9 925,722.1 925.1,724 925.6,721.4 926.3,725.2 926.5,720.7 927,723.8 927.4,721.1 927.9,725.3 928.3,721.8 928.7,725.3 929,722.3 929.4,723.7 930,721 930.4,724.3 930.8,721.2 931.2,724.4 931.6,721.9 931.9,723.6 932.4,721.6 933,723.6 933.2,721.3 933.6,724.5 934,721.8 934.6,724.6 934.9,721.9 935.5,723.9 935.8,722.3 936.1,723.6 936.6,720.9 937,725.4 937.4,721.8 937.8,725 938.4,721.1 938.9,723.6 939.1,722.2 939.4,724.7 940.1,721.1 940.5,724.5 941,722.2 941.3,724.9 941.7,722 942.2,723.9 942.5,721.6 943,725.1 943.3,721.4 943.8,725.2 944.1,721.7 944.5,724.9 945,722.1 945.4,724.5 946,722.4 946.3,724.3 946.8,721.1 947.2,725 947.5,721.6 948,724.2 948.4,721.6 948.8,724.6 949.1,721.7 949.7,723.6 950.1,721.8 950.3,723.6 950.8,722.4 951.3,724.4 951.8,721.4 952.3,724.2 952.8,722.2 953.3,724.1 953.8,721.4 954.3,723.9 954.8,722.2 955.3,724 955.8,722.1 956.3,723.8 956.8,722.2 957.3,724.1 957.8,721.4 958.3,724.1 958.8,721.7 959.3,724.4 959.8,721.9 960.3,723.7 960.8,722.4 961.3,724.4 961.8,722.4 962.3,723.9 962.8,721.9 963.3,724.1 963.8,721.6 964.3,723.6 964.8,722.2 965.3,723.7 965.8,721.6 966.3,724.4 966.8,722.2 967.3,724.4 967.8,721.7 968.3,724 968.8,721.8 969.3,723.8 969.8,721.8 970.3,724.1 970.8,721.8 971.3,724.2 971.8,722.4 972.3,724 972.8,722.3 973.3,724.1 973.8,721.5 974.3,724.2 974.8,722 975.3,724.3 975.8,722 976.3,724.4 976.8,721.8 977.3,724.4 977.8,721.6 978.3,724.1 978.8,722.4 979.3,724.4 979.8,721.8 980.3,723.6 980.8,722.5 981.3,723.8 981.8,721.7 982.3,723.9 982.8,722.2 983.3,724.1 983.8,722.4 984.3,723.5 984.8,722.4 985.3,724.3 985.8,721.8 986.3,723.7 986.8,722.1 987.3,723.8 987.8,721.9 988.3,724 988.8,722.4 989.3,723.7 989.8,722.5 990.3,724 990.8,721.7 991.3,724.3 991.8,721.6 992.3,724.1 992.8,721.7 993.3,724.4 993.8,721.8 994.3,723.6 994.8,722.3 995.3,724.1 995.8,722.2 996.3,723.5 996.8,722.4 997.3,724.3 997.8,722.3 998.3,723.9 998.8,722.2 999.3,724.3 999.8,721.9 1000.3,724.2 1000.8,722.2 1001.3,724.3 1001.8,722 1002.3,723.6 1002.8,722.3 1003.3,723.9 1003.8,722.1 1004.3,723.5 1004.8,721.7 1005.3,723.9 1005.8,722.5 1006.3,724.2 1006.8,722.4 1007.3,723.8 1007.8,721.8 1008.3,723.7 1008.8,721.9 1009.3,723.8 1009.8,722.5 1010.3,723.9 1010.8,721.9 1011.3,724 1011.8,722.2 1012.3,723.9 1012.8,721.9 1013.3,723.5 1013.8,722.5 1014.3,724.3 1014.8,722.4 1015.3,723.7 1015.8,721.9 1016.3,723.5 1016.8,722 1017.3,724.2 1017.8,722.5 1018.3,724.1 1018.8,722.5 1019.3,723.9 1019.8,722 1020.3,723.7 1020.8,722.3 1021.3,723.8 1021.8,722.5 1022.3,723.7 1022.8,722.5 1023.3,724.2 1023.8,722.3 1024.3,723.5 1024.8,722.6 1025.3,723.9 1025.8,722.1 1026.3,723.9 1026.8,722.1 1027.3,723.4 1027.8,721.9 1028.3,723.7 1028.8,722.2 1029.3,723.8 1029.8,721.9 1030.3,723.6 1030.8,722.1 1031.3,723.5 1031.8,722.2 1032.3,724 1032.8,722.6 1033.3,723.6 1033.8,722.3 1034.3,724 1034.8,722.3 1035.3,723.4 1035.8,722.2 1036.3,723.5 1036.8,722.3 1037.3,723.7 1037.8,722.5 1038.3,723.6 1038.8,722 1039.3,723.6 1039.8,722 1040.3,723.6 1040.8,722.1 1041.3,723.6 1041.8,722.4 1042.3,723.6 1042.8,722 1043.3,724 1043.8,722.4 1044.3,724 1044.8,722.3 1045.3,723.6 1045.8,722.4 1046.3,723.7 1046.8,722.3 1047.3,723.4 1047.8,722.1 1048.3,723.7 1048.8,722.3 1049.3,723.5 1049.8,722.3 1050.3,723.4 1050.8,722.1 1051.3,723.6 1051.8,722.3 1052.3,723.6 1052.8,722.6 1053.3,723.9 1053.8,722.5 1054.3,723.9 1054.8,722.6 1055.3,723.7 1055.8,722 1056.3,723.9 1056.8,722.6 1057.3,723.6 1057.8,722.4 1058.3,723.8 1058.8,722.2 1059.3,723.6 1059.8,722.5 1060.3,723.5 1060.8,722.6 1061.3,723.6 1061.8,722 1062.3,723.9 1062.8,722 1063.3,723.3 1063.8,722.1 1064.3,723.7 1064.8,722.4 1065.3,723.7 1065.8,722.1 1066.3,723.9 1066.8,722.5 1067.3,723.5 1067.8,722.4 1068.3,723.9 1068.8,722.4 1069.3,723.9 1069.8,722.5 1070.3,723.5 1070.8,722.5 1071.3,723.8 1071.8,722.4 1072.3,723.8 1072.8,722.3 1073.3,723.7 1073.8,722.2 1074.3,723.5 1074.8,722.6 1075.3,723.6 1075.8,722.3 1076.3,723.8 1076.8,722.3 1077.3,723.7 1077.8,722.5 1078.3,723.7 1078.8,722.5 1079.3,723.8 1079.8,722.5 1080.3,723.6 1080.8,722.7 1081.3,723.5 1081.8,722.5 1082.3,723.6 1082.8,722.3 1083.3,723.4 1083.8,722.1 1084.3,723.6 1084.8,722.3 1085.3,723.5 1085.8,722.7 1086.3,723.3 1086.8,722.3 1087.3,723.5 1087.8,722.2 1088.3,723.8 1088.8,722.7 1089.3,723.8 1089.8,722.1 1090.3,723.3 1090.8,722.7 1091.3,723.8 1091.8,722.3 1092.3,723.7 1092.8,722.4 1093.3,723.7 1093.8,722.7 1094.3,723.4 1094.8,722.3 1095.3,723.4 1095.8,722.6 1096.3,723.7 1096.8,722.4 1097.3,723.5 1097.8,722.7 1098.3,723.8 1098.8,722.6 1099.3,723.9 1099.8,722.7 1100.3,723.7 1100.8,722.7 1101.3,723.4 1101.8,722.5 1102.3,723.3 1102.8,722.3 1103.3,723.3 1103.8,722.4 1104.3,723.3 1104.8,722.6 1105.3,723.4 1105.8,722.5 1106.3,723.4 1106.8,722.2 1107.3,723.8 1107.8,722.5 1108.3,723.6 1108.8,722.4 1109.3,723.4 1109.8,722.6 1110.3,723.4 1110.8,722.5 1111.3,723.5 1111.8,722.5 1112.3,723.7 1112.8,722.6 1113.3,723.8 1113.8,722.4 1114.3,723.6 1114.8,722.5 1115.3,723.4 1115.8,722.5 1116.3,723.6 1116.8,722.5 1117.3,723.4 1117.8,722.3 1118.3,723.7 1118.8,722.5 1119.3,723.4 1119.8,722.6" fill="none" stroke="#808080" stroke-width="1.0" stroke-linejoin="round"/>
<path d="M1119.8,722.6 1120.3,722.9 1122.3,722.8 1124.3,723.1 1126.3,723 1128.3,723.1 1130.3,723.1 1132.3,722.8 1134.3,722.9 1136.3,723.1 1138.3,723.1 1140.3,723 1142.3,722.9 1144.3,723.1 1146.3,722.8 1148.3,722.9 1150.3,722.9 1152.3,723.2 1154.3,723 1156.3,723.1 1158.3,722.9 1160.3,723.1" fill="none" stroke="#939397" stroke-width="1.0" stroke-linejoin="round"/>
<rect x="216" y="714" width="1" height="15" fill="#777"/>
<rect x="571" y="444" width="1" height="18" fill="#a80000"/>
<rect x="576" y="462" width="1" height="18" fill="#0000a0"/>
<rect x="682" y="462" width="1" height="18" fill="#0000a0"/>
<rect x="596" y="482" width="1" height="18" fill="#a80000"/>
<rect x="595" y="500" width="1" height="18" fill="#0000a0"/>
<rect x="716" y="482" width="1" height="18" fill="#a80000"/>
<rect x="716" y="500" width="1" height="18" fill="#0000a0"/>
<rect x="614" y="520" width="1" height="18" fill="#a80000"/>
<rect x="611" y="538" width="1" height="17" fill="#0000a0"/>
<rect x="747" y="520" width="1" height="18" fill="#a80000"/>
<rect x="744" y="538" width="1" height="17" fill="#0000a0"/>
<rect x="614" y="557" width="1" height="18" fill="#a80000"/>
<rect x="612" y="575" width="1" height="17" fill="#0000a0"/>
<rect x="746" y="557" width="1" height="18" fill="#a80000"/>
<rect x="747" y="575" width="1" height="17" fill="#0000a0"/>
<rect x="615" y="594" width="1" height="18" fill="#a80000"/>
<rect x="616" y="612" width="1" height="17" fill="#0000a0"/>
<rect x="749" y="594" width="1" height="18" fill="#e81010"/>
<rect x="754" y="612" width="1" height="17" fill="#0000a0"/>
<rect x="620" y="631" width="1" height="18" fill="#a80000"/>
<rect x="618" y="649" width="1" height="17" fill="#0000a0"/>
<rect x="757" y="649" width="1" height="17" fill="#0000a0"/>
<rect x="643" y="668" width="1" height="18" fill="#a80000"/>
<rect x="641" y="686" width="1" height="17" fill="#0000a0"/>
<rect x="798" y="668" width="1" height="18" fill="#a80000"/>
<rect x="799" y="686" width="1" height="17" fill="#0000a0"/>
<rect x="547" y="705" width="1" height="18" fill="#e81010"/>
<rect x="643" y="705" width="1" height="18" fill="#e81010"/>
<rect x="643" y="705" width="1" height="18" fill="#a80000"/>
<rect x="641" y="723" width="1" height="17" fill="#0000a0"/>
<rect x="797" y="705" width="1" height="18" fill="#a80000"/>
<rect x="799" y="723" width="1" height="17" fill="#0000a0"/>
<rect x="592.5" y="482.5" width="8" height="18" fill="none" stroke="#000" stroke-width="1" stroke-dasharray="3 2"/>
</g>
<rect x="140" y="735" width="1037" height="1" fill="#000"/>
<rect x="143" y="735" width="1" height="10" fill="#000"/>
<rect x="161" y="735" width="1" height="6" fill="#000"/>
<rect x="180" y="735" width="1" height="6" fill="#000"/>
<rect x="198" y="735" width="1" height="6" fill="#000"/>
<rect x="217" y="735" width="1" height="6" fill="#000"/>
<rect x="235" y="735" width="1" height="6" fill="#000"/>
<rect x="254" y="735" width="1" height="10" fill="#000"/>
<rect x="272" y="735" width="1" height="6" fill="#000"/>
<rect x="291" y="735" width="1" height="6" fill="#000"/>
<rect x="309" y="735" width="1" height="6" fill="#000"/>
<rect x="328" y="735" width="1" height="6" fill="#000"/>
<rect x="346" y="735" width="1" height="6" fill="#000"/>
<rect x="365" y="735" width="1" height="10" fill="#000"/>
<rect x="383" y="735" width="1" height="6" fill="#000"/>
<rect x="402" y="735" width="1" height="6" fill="#000"/>
<rect x="420" y="735" width="1" height="6" fill="#000"/>
<rect x="438" y="735" width="1" height="6" fill="#000"/>
<rect x="457" y="735" width="1" height="6" fill="#000"/>
<rect x="475" y="735" width="1" height="10" fill="#000"/>
<rect x="494" y="735" width="1" height="6" fill="#000"/>
<rect x="512" y="735" width="1" height="6" fill="#000"/>
<rect x="531" y="735" width="1" height="6" fill="#000"/>
<rect x="549" y="735" width="1" height="6" fill="#000"/>
<rect x="568" y="735" width="1" height="6" fill="#000"/>
<rect x="586" y="735" width="1" height="10" fill="#000"/>
<rect x="605" y="735" width="1" height="6" fill="#000"/>
<rect x="623" y="735" width="1" height="6" fill="#000"/>
<rect x="642" y="735" width="1" height="6" fill="#000"/>
<rect x="660" y="735" width="1" height="6" fill="#000"/>
<rect x="679" y="735" width="1" height="6" fill="#000"/>
<rect x="697" y="735" width="1" height="10" fill="#000"/>
<rect x="716" y="735" width="1" height="6" fill="#000"/>
<rect x="734" y="735" width="1" height="6" fill="#000"/>
<rect x="753" y="735" width="1" height="6" fill="#000"/>
<rect x="771" y="735" width="1" height="6" fill="#000"/>
<rect x="790" y="735" width="1" height="6" fill="#000"/>
<rect x="808" y="735" width="1" height="10" fill="#000"/>
<rect x="827" y="735" width="1" height="6" fill="#000"/>
<rect x="845" y="735" width="1" height="6" fill="#000"/>
<rect x="864" y="735" width="1" height="6" fill="#000"/>
<rect x="882" y="735" width="1" height="6" fill="#000"/>
<rect x="900" y="735" width="1" height="6" fill="#000"/>
<rect x="919" y="735" width="1" height="10" fill="#000"/>
<rect x="937" y="735" width="1" height="6" fill="#000"/>
<rect x="956" y="735" width="1" height="6" fill="#000"/>
<rect x="974" y="735" width="1" height="6" fill="#000"/>
<rect x="993" y="735" width="1" height="6" fill="#000"/>
<rect x="1011" y="735" width="1" height="6" fill="#000"/>
<rect x="1030" y="735" width="1" height="10" fill="#000"/>
<rect x="1048" y="735" width="1" height="6" fill="#000"/>
<rect x="1067" y="735" width="1" height="6" fill="#000"/>
<rect x="1085" y="735" width="1" height="6" fill="#000"/>
<rect x="1104" y="735" width="1" height="6" fill="#000"/>
<rect x="1122" y="735" width="1" height="6" fill="#000"/>
<rect x="1141" y="735" width="1" height="10" fill="#000"/>
<rect x="1159" y="735" width="1" height="6" fill="#000"/>
<path d="M1165 454.5 H1173 L1169 450.5 Z M1165 723.5 H1173 L1169 727.5 Z" fill="#232627"/>
<linearGradient id="gPlug" x1="0" y1="0" x2="1" y2="1"><stop offset="0" stop-color="#c8ccff"/><stop offset="1" stop-color="#ffffff"/></linearGradient>
<g transform="translate(0.3 1.2) rotate(-38 1162.5 814.5)"><path d="M1162.5 804.5 Q1160 806.5 1160.5 809" fill="none" stroke="#8088e0" stroke-width="1.1"/><rect x="1157" y="808.5" width="11" height="10.5" rx="3" fill="url(#gPlug)" stroke="#8a90e0" stroke-width="1"/><rect x="1158.8" y="818.8" width="2.6" height="5" rx="0.8" fill="#f8a81c"/><rect x="1163.6" y="818.8" width="2.6" height="5" rx="0.8" fill="#f8a81c"/></g>
<path d="M1191 816 L1180 827 M1191 820 L1184 827 M1191 824 L1188 827" stroke="#b4b5b6" stroke-width="1.2"/><path d="M1191 817.3 L1181.3 827 M1191 821.3 L1185.3 827" stroke="#fcfcfc" stroke-width="1"/>
</svg>
<div class="t" style="top:99px;left:142.00px;color:#000;font-weight:bold;font-size:13px;">Z</div>
<div class="t" style="top:191px;left:142.00px;color:#000;font-weight:bold;font-size:13px;">N</div>
<div class="t" style="top:283px;left:142.00px;color:#000;font-weight:bold;font-size:13px;">E</div>
<div class="t" style="top:98px;left:469.50px;color:#a80000;font-size:13px;">P&lt;A&gt;</div>
<div class="t" style="top:98px;left:723.50px;color:#a80000;font-size:13px;">S&lt;L&gt;</div>
<div class="t" style="top:352px;left:468.00px;color:#0000a0;font-size:13px;">P</div>
<div class="t" style="top:352px;left:725.00px;color:#0000a0;font-size:13px;">S</div>
<div class="t" style="top:153px;left:140.10px;color:#151515;font-size:13px;">amax: 864.8 counts</div>
<div class="t" style="top:166px;left:140.10px;color:#151515;font-size:13px;">mean: 0.0 counts</div>
<div class="t" style="top:245px;left:140.10px;color:#151515;font-size:13px;">amax: 3395.6 counts</div>
<div class="t" style="top:258px;left:140.10px;color:#151515;font-size:13px;">mean: 0.0 counts</div>
<div class="t" style="top:337px;left:140.10px;color:#151515;font-size:13px;">amax: 1721.8 counts</div>
<div class="t" style="top:350px;left:140.10px;color:#151515;font-size:13px;">mean: 0.0 counts</div>
<div class="r" style="left:9px;top:444px;width:1152px;height:289px;overflow:hidden;">
<div class="t" style="top:2px;left:564.50px;color:#a80000;font-size:13px;">P&lt;A&gt;</div>
<div class="t" style="top:21px;left:569.50px;color:#0000a0;font-size:13px;">P</div>
<div class="t" style="top:21px;left:675.50px;color:#0000a0;font-size:13px;">S</div>
<div class="t" style="top:40px;left:589.50px;color:#a80000;font-size:13px;">P&lt;A&gt;</div>
<div class="t" style="top:59px;left:588.50px;color:#0000a0;font-size:13px;">P</div>
<div class="t" style="top:40px;left:709.50px;color:#a80000;font-size:13px;">S&lt;L&gt;</div>
<div class="t" style="top:59px;left:709.50px;color:#0000a0;font-size:13px;">S</div>
<div class="t" style="top:78px;left:607.50px;color:#a80000;font-size:13px;">P&lt;A&gt;</div>
<div class="t" style="top:97px;left:604.50px;color:#0000a0;font-size:13px;">P</div>
<div class="t" style="top:78px;left:740.50px;color:#a80000;font-size:13px;">S&lt;L&gt;</div>
<div class="t" style="top:97px;left:737.50px;color:#0000a0;font-size:13px;">S</div>
<div class="t" style="top:114px;left:607.50px;color:#a80000;font-size:13px;">P&lt;A&gt;</div>
<div class="t" style="top:134px;left:605.50px;color:#0000a0;font-size:13px;">P</div>
<div class="t" style="top:114px;left:739.50px;color:#a80000;font-size:13px;">S&lt;L&gt;</div>
<div class="t" style="top:134px;left:740.50px;color:#0000a0;font-size:13px;">S</div>
<div class="t" style="top:152px;left:608.50px;color:#a80000;font-size:13px;">P&lt;A&gt;</div>
<div class="t" style="top:171px;left:609.50px;color:#0000a0;font-size:13px;">P</div>
<div class="t" style="top:152px;left:742.50px;color:#e81010;font-size:13px;">P&lt;A&gt;</div>
<div class="t" style="top:171px;left:747.50px;color:#0000a0;font-size:13px;">S</div>
<div class="t" style="top:188px;left:613.50px;color:#a80000;font-size:13px;">P&lt;A&gt;</div>
<div class="t" style="top:208px;left:611.50px;color:#0000a0;font-size:13px;">P</div>
<div class="t" style="top:208px;left:750.50px;color:#0000a0;font-size:13px;">S</div>
<div class="t" style="top:226px;left:636.50px;color:#a80000;font-size:13px;">P&lt;A&gt;</div>
<div class="t" style="top:245px;left:634.50px;color:#0000a0;font-size:13px;">P</div>
<div class="t" style="top:226px;left:791.50px;color:#a80000;font-size:13px;">S&lt;L&gt;</div>
<div class="t" style="top:245px;left:792.50px;color:#0000a0;font-size:13px;">S</div>
<div class="t" style="top:262px;left:540.50px;color:#e81010;font-size:13px;">P&lt;A&gt;</div>
<div class="t" style="top:262px;left:636.50px;color:#e81010;font-size:13px;">B&lt;A&gt;</div>
<div class="t" style="top:262px;left:636.50px;color:#a80000;font-size:13px;">P&lt;A&gt;</div>
<div class="t" style="top:282px;left:634.50px;color:#0000a0;font-size:13px;">P</div>
<div class="t" style="top:262px;left:790.50px;color:#a80000;font-size:13px;">S&lt;L&gt;</div>
<div class="t" style="top:282px;left:792.50px;color:#0000a0;font-size:13px;">S</div>
</div>
<div class="t" style="top:749px;left:225.10px;width:57.00px;overflow:hidden;">16:52:30</div>
<div class="t" style="top:749px;left:336.10px;width:57.00px;overflow:hidden;">16:53:00</div>
<div class="t" style="top:749px;left:446.10px;width:57.00px;overflow:hidden;">16:53:30</div>
<div class="t" style="top:749px;left:557.10px;width:57.00px;overflow:hidden;">16:54:00</div>
<div class="t" style="top:749px;left:668.10px;width:57.00px;overflow:hidden;">16:54:30</div>
<div class="t" style="top:749px;left:779.10px;width:57.00px;overflow:hidden;">16:55:00</div>
<div class="t" style="top:749px;left:890.10px;width:57.00px;overflow:hidden;">16:55:30</div>
<div class="t" style="top:749px;left:1001.10px;width:57.00px;overflow:hidden;">16:56:00</div>
<div class="t" style="top:749px;left:1112.10px;width:57.00px;overflow:hidden;">16:56:30</div>
<div class="t" style="top:770px;left:215.75px;">2022-03-17</div>
<div class="r" style="left:470px;top:153px;width:244px;height:185px;background:#eff0f1;"></div>
<div class="r" style="left:470px;top:153px;width:244px;height:2px;background:#fcfcfc;"></div>
<div class="r" style="left:470px;top:153px;width:2px;height:185px;background:#fcfcfc;"></div>
<div class="r" style="left:470px;top:337px;width:244px;height:1px;background:#000;"></div>
<div class="r" style="left:713px;top:153px;width:1px;height:185px;background:#000;"></div>
<div class="r" style="left:471px;top:336px;width:242px;height:1px;background:#b4b5b6;"></div>
<div class="r" style="left:712px;top:154px;width:1px;height:183px;background:#b4b5b6;"></div>
<div class="r" style="left:473px;top:289px;width:237px;height:23px;background:#3daee9;"></div>
<div class="t" style="top:160px;left:490.00px;">Polarity</div>
<div class="t" style="top:183px;left:490.00px;">Uncertainty</div>
<div class="t" style="top:215px;left:490.00px;">Delete arrival</div>
<div class="t" style="top:238px;left:490.00px;">Delete arrival and remove pick</div>
<div class="t" style="top:270px;left:490.00px;">Debug S-L2 picker</div>
<div class="t" style="top:293px;left:490.00px;color:#fff;">Debug S-AIC picker</div>
<div class="t" style="top:316px;left:490.00px;">Debug S-AIC-V picker</div>
<div class="r" style="left:475px;top:205px;width:233px;height:1px;background:#b4b5b6;"></div>
<div class="r" style="left:475px;top:206px;width:233px;height:1px;background:#fcfcfc;"></div>
<div class="r" style="left:475px;top:260px;width:233px;height:1px;background:#b4b5b6;"></div>
<div class="r" style="left:475px;top:261px;width:233px;height:1px;background:#fcfcfc;"></div>
<svg width="1192" height="827" viewBox="0 0 1192 827"><path d="M696 163.5 L700 167 L696 170.5 Z M696 186.5 L700 190 L696 193.5 Z" fill="#232627"/>
<path d="M567 303.5 V317.5 L570.2 314.6 L572.6 320.2 L574.7 319.3 L572.3 313.8 L576.8 313.5 Z" fill="#000" stroke="#fff" stroke-width="0.9"/></svg>
</div></body></html>
